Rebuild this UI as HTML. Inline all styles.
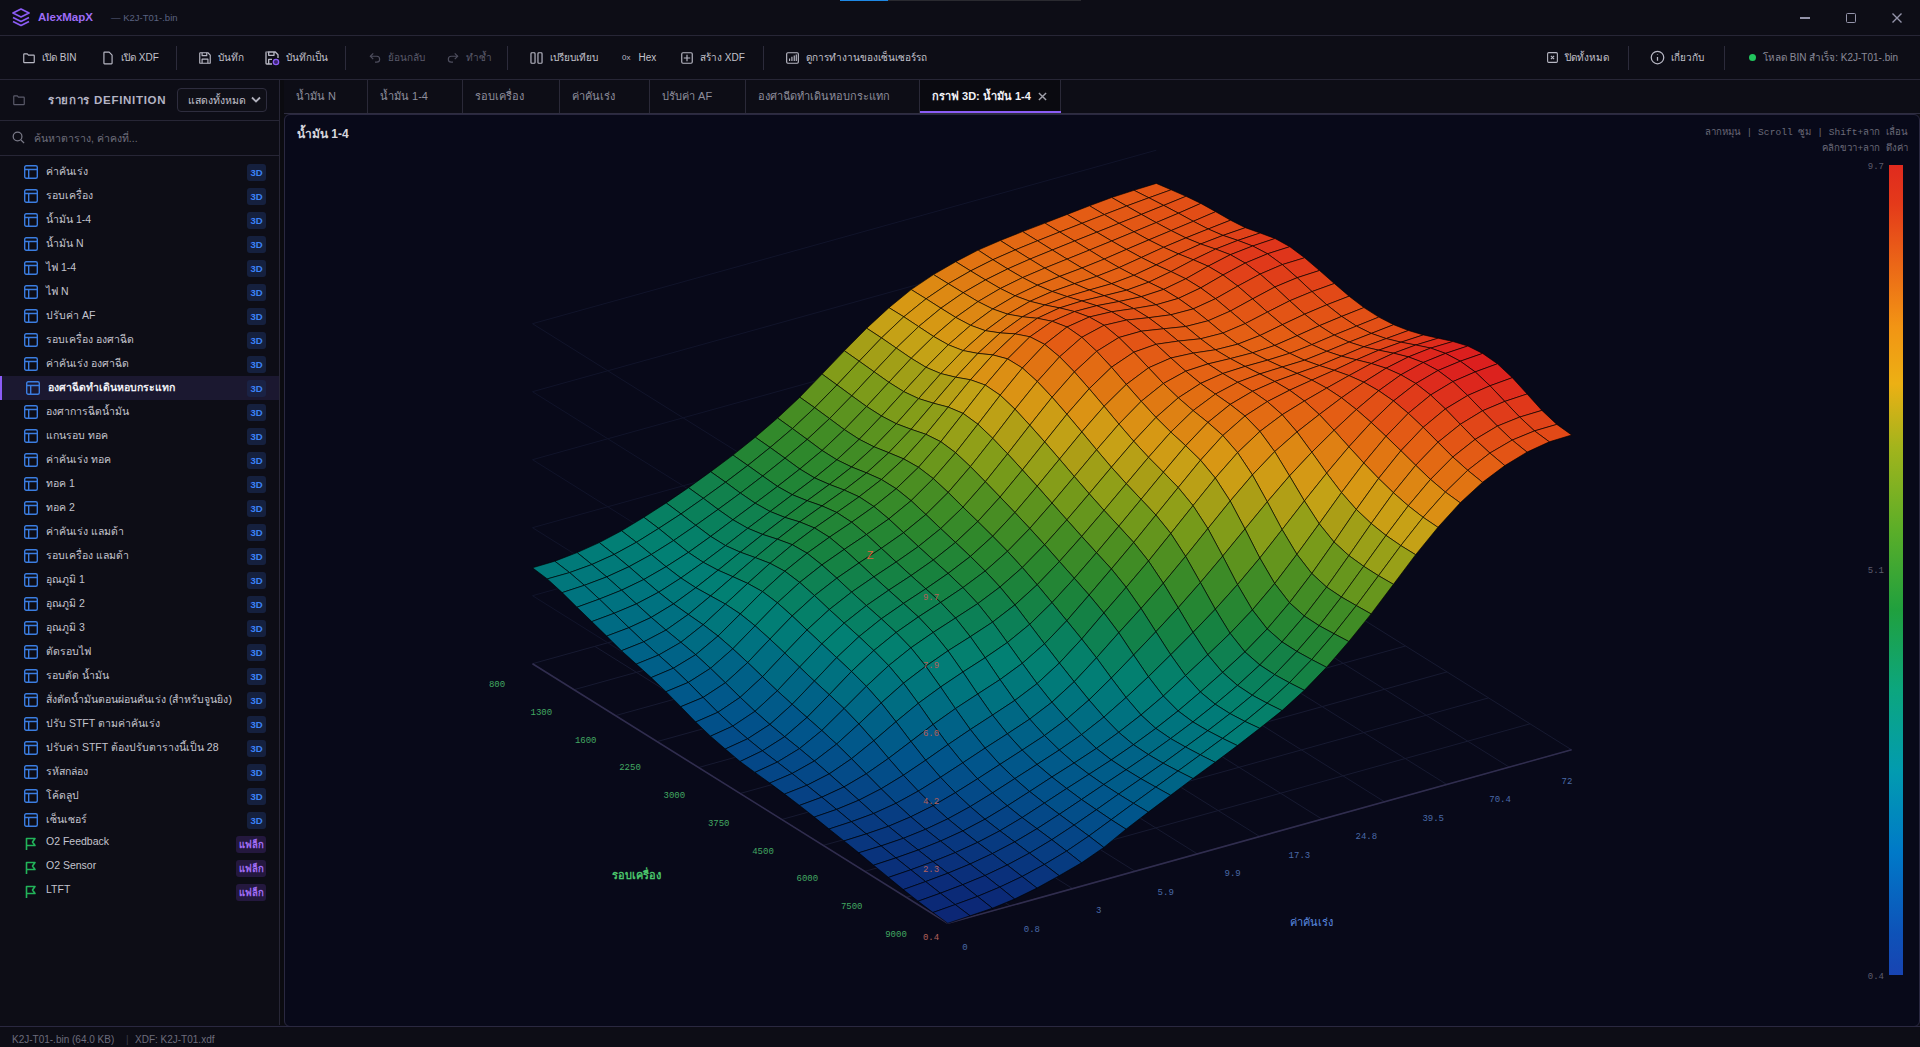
<!DOCTYPE html>
<html><head><meta charset="utf-8">
<style>
*{box-sizing:border-box;margin:0;padding:0}
html,body{width:1920px;height:1047px;overflow:hidden;background:#0d0d16;font-family:"Liberation Sans",sans-serif;color:#c9c9d4}
.abs{position:absolute}
#title{left:0;top:0;width:1920px;height:36px;background:#0d0d16;border-bottom:1px solid #272636}
#toolbar{left:0;top:36px;width:1920px;height:44px;background:#0d0d16;border-bottom:1px solid #272636}
.tb{position:absolute;top:0;height:43px;display:flex;align-items:center;font-size:10px;color:#c2c2cc;white-space:nowrap}
.tb svg{margin-right:6px}
.sep{position:absolute;top:10px;width:1px;height:24px;background:#2c2b3b}
.dim{color:#5a5a6a}
#side{left:0;top:80px;width:280px;height:945px;background:#0d0d16;border-right:1px solid #272636}
#gap{left:280px;top:80px;width:4px;height:945px;background:#0b0b10}
.item{position:absolute;left:0;width:279px;height:24px;font-size:10.5px;color:#c4c4ce;white-space:nowrap}
.item .ic{position:absolute;left:24px;top:5px}
.item .tx{position:absolute;left:46px;top:3px}
.badge{position:absolute;right:13px;top:4px;height:17px;border-radius:3px;font-size:9.5px;font-weight:bold;line-height:17px;text-align:center}
.b3{width:19px;background:#15203e;color:#3b82f6}
.bf{width:30px;background:#24183e;color:#a06cf5}
#tabs{left:284px;top:80px;width:1636px;height:34px;background:#0d0d16;border-bottom:1px solid #2e2d40}
.tab{position:absolute;top:0;height:33px;border-right:1px solid #2a2938;font-size:11px;color:#8e8e9c;line-height:33px;padding-left:12px;white-space:nowrap}
#chart{left:284px;top:114px;width:1636px;height:913px;background:#080919;border:1px solid #2a2840;border-radius:6px}
#status{left:0;top:1026px;width:1920px;height:21px;background:#0d0d16;border-top:1px solid #2a2840;font-size:10px;color:#6c6c7c}
.mono{font-family:"Liberation Mono",monospace}
</style></head><body>
<div id="title" class="abs">
  <svg class="abs" style="left:12px;top:8px" width="18" height="19" viewBox="0 0 18 19" fill="none" stroke="#8b5cf6" stroke-width="1.7" stroke-linejoin="round"><path d="M9 1 L17 5 L9 9 L1 5 Z"/><path d="M1 9.5 L9 13.5 L17 9.5"/><path d="M1 13.5 L9 17.5 L17 13.5"/></svg>
  <div class="abs" style="left:38px;top:11px;font-size:11.5px;font-weight:bold;color:#9d6cf7">AlexMapX</div>
  <div class="abs" style="left:111px;top:12px;font-size:9.5px;color:#5a6280">— K2J-T01-.bin</div>
  <div class="abs" style="left:840px;top:0;width:48px;height:1px;background:#1e88e5"></div>
  <div class="abs" style="left:888px;top:0;width:193px;height:1px;background:#2a2a30"></div>
  <div class="abs" style="left:1800px;top:17px;width:10px;height:1.5px;background:#9494aa"></div>
  <div class="abs" style="left:1846px;top:13px;width:10px;height:10px;border:1.4px solid #9494aa;border-radius:1.5px"></div>
  <svg class="abs" style="left:1891px;top:12px" width="12" height="12" viewBox="0 0 12 12" stroke="#9494aa" stroke-width="1.4"><path d="M1.5 1.5L10.5 10.5M10.5 1.5L1.5 10.5"/></svg>
</div>
<div id="toolbar" class="abs">
  <div class="tb" style="left:22px"><svg width="14" height="14" viewBox="0 0 24 24" fill="none" stroke="#b8b8c4" stroke-width="2" stroke-linejoin="round"><path d="M3 6a1 1 0 0 1 1-1h5l2 2h9a1 1 0 0 1 1 1v11a1 1 0 0 1-1 1H4a1 1 0 0 1-1-1z"/></svg>เปิด BIN</div>
  <div class="tb" style="left:101px"><svg width="14" height="14" viewBox="0 0 24 24" fill="none" stroke="#b8b8c4" stroke-width="2" stroke-linejoin="round"><path d="M6 2h8l5 5v14a1 1 0 0 1-1 1H6a1 1 0 0 1-1-1V3a1 1 0 0 1 1-1z"/></svg>เปิด XDF</div>
  <div class="sep" style="left:176px"></div>
  <div class="tb" style="left:198px"><svg width="14" height="14" viewBox="0 0 24 24" fill="none" stroke="#b8b8c4" stroke-width="2" stroke-linejoin="round"><path d="M5 3h12l4 4v13a1 1 0 0 1-1 1H4a1 1 0 0 1-1-1V4a1 1 0 0 1 1-1z"/><path d="M7 3v5h8V3M7 21v-7h10v7"/></svg>บันทึก</div>
  <div class="tb" style="left:264px"><svg width="16" height="16" viewBox="0 0 24 24" fill="none" stroke="#b8b8c4" stroke-width="2" stroke-linejoin="round"><path d="M5 3h12l4 4v5M12 21H4a1 1 0 0 1-1-1V4a1 1 0 0 1 1-1"/><path d="M7 3v5h8V3M7 21v-7h5"/><circle cx="18" cy="18" r="4" stroke="#8b5cf6" fill="#3b2470"/></svg>บันทึกเป็น</div>
  <div class="sep" style="left:345px"></div>
  <div class="tb dim" style="left:368px"><svg width="14" height="14" viewBox="0 0 24 24" fill="none" stroke="#4e4e5e" stroke-width="2"><path d="M9 14L4 9l5-5"/><path d="M4 9h11a5 5 0 0 1 0 10h-3"/></svg>ย้อนกลับ</div>
  <div class="tb dim" style="left:446px"><svg width="14" height="14" viewBox="0 0 24 24" fill="none" stroke="#4e4e5e" stroke-width="2"><path d="M15 14l5-5-5-5"/><path d="M20 9H9a5 5 0 0 0 0 10h3"/></svg>ทำซ้ำ</div>
  <div class="sep" style="left:507px"></div>
  <div class="tb" style="left:529px"><svg width="15" height="14" viewBox="0 0 24 24" fill="none" stroke="#b8b8c4" stroke-width="2"><rect x="2.5" y="3" width="7" height="18" rx="1.5"/><rect x="14.5" y="3" width="7" height="18" rx="1.5"/></svg>เปรียบเทียบ</div>
  <div class="tb" style="left:622px"><span style="font-size:8px;margin-right:8px;color:#b8b8c4">0x</span>Hex</div>
  <div class="tb" style="left:680px"><svg width="14" height="14" viewBox="0 0 24 24" fill="none" stroke="#b8b8c4" stroke-width="2"><rect x="3" y="3" width="18" height="18" rx="2"/><path d="M12 6.5v11M6.5 12h11"/></svg>สร้าง XDF</div>
  <div class="sep" style="left:763px"></div>
  <div class="tb" style="left:785px"><svg width="15" height="14" viewBox="0 0 24 24" fill="none" stroke="#b8b8c4" stroke-width="2"><rect x="2" y="3" width="20" height="18" rx="2"/><path d="M7 17v-4M11 17v-7M15 17V7.5M18.5 17V6"/></svg>ดูการทำงานของเซ็นเซอร์รถ</div>
  <div class="tb" style="left:1546px"><svg width="13" height="13" viewBox="0 0 24 24" fill="none" stroke="#b8b8c4" stroke-width="2"><rect x="3" y="3" width="18" height="18" rx="2"/><path d="M9 9l6 6M15 9l-6 6"/></svg>ปิดทั้งหมด</div>
  <div class="sep" style="left:1628px"></div>
  <div class="tb" style="left:1650px"><svg width="15" height="15" viewBox="0 0 24 24" fill="none" stroke="#b8b8c4" stroke-width="2"><circle cx="12" cy="12" r="10"/><path d="M12 11v6M12 7v1"/></svg>เกี่ยวกับ</div>
  <div class="sep" style="left:1724px"></div>
  <div class="abs" style="left:1749px;top:18px;width:7px;height:7px;border-radius:50%;background:#22c55e"></div>
  <div class="tb" style="left:1763px;color:#8a8a98;font-size:10px">โหลด BIN สำเร็จ: K2J-T01-.bin</div>
</div>
<div id="side" class="abs">
  <svg class="abs" style="left:12px;top:13px" width="14" height="14" viewBox="0 0 24 24" fill="none" stroke="#5a5a6a" stroke-width="2"><path d="M3 6a1 1 0 0 1 1-1h5l2 2h9a1 1 0 0 1 1 1v11a1 1 0 0 1-1 1H4a1 1 0 0 1-1-1z"/></svg>
  <div class="abs" style="left:48px;top:11px;font-size:11.5px;font-weight:bold;color:#b4b4c4;letter-spacing:0.7px">รายการ DEFINITION</div>
  <div class="abs" style="left:177px;top:8px;width:90px;height:24px;border:1px solid #2e2d3e;border-radius:4px;background:#0f0f17;font-size:10.5px;color:#c0c0cc;padding:3px 0 0 10px">แสดงทั้งหมด
    <svg class="abs" style="left:73px;top:7px" width="10" height="8" viewBox="0 0 10 8" fill="none" stroke="#b0b0bc" stroke-width="1.8"><path d="M1 1.5l4 4 4-4"/></svg></div>
  <div class="abs" style="left:0;top:40px;width:279px;height:1px;background:#272636"></div>
  <svg class="abs" style="left:11px;top:50px" width="15" height="15" viewBox="0 0 24 24" fill="none" stroke="#7a7a88" stroke-width="2"><circle cx="10.5" cy="10.5" r="7"/><path d="M16 16l5 5"/></svg>
  <div class="abs" style="left:34px;top:50px;font-size:10.5px;color:#6e6e7c">ค้นหาตาราง, ค่าคงที่...</div>
  <div class="abs" style="left:0;top:75px;width:279px;height:1px;background:#272636"></div>
  <div class="item" style="top:80px"><svg class="ic" width="14" height="14" viewBox="0 0 14 14" fill="none" stroke="#3b7de0" stroke-width="1.4"><rect x="0.7" y="0.7" width="12.6" height="12.6" rx="1.5"/><path d="M0.7 4.5h12.6M4.7 4.5v8.8"/></svg><div class="tx">ค่าคันเร่ง</div><div class="badge b3">3D</div></div>
<div class="item" style="top:104px"><svg class="ic" width="14" height="14" viewBox="0 0 14 14" fill="none" stroke="#3b7de0" stroke-width="1.4"><rect x="0.7" y="0.7" width="12.6" height="12.6" rx="1.5"/><path d="M0.7 4.5h12.6M4.7 4.5v8.8"/></svg><div class="tx">รอบเครื่อง</div><div class="badge b3">3D</div></div>
<div class="item" style="top:128px"><svg class="ic" width="14" height="14" viewBox="0 0 14 14" fill="none" stroke="#3b7de0" stroke-width="1.4"><rect x="0.7" y="0.7" width="12.6" height="12.6" rx="1.5"/><path d="M0.7 4.5h12.6M4.7 4.5v8.8"/></svg><div class="tx">น้ำมัน 1-4</div><div class="badge b3">3D</div></div>
<div class="item" style="top:152px"><svg class="ic" width="14" height="14" viewBox="0 0 14 14" fill="none" stroke="#3b7de0" stroke-width="1.4"><rect x="0.7" y="0.7" width="12.6" height="12.6" rx="1.5"/><path d="M0.7 4.5h12.6M4.7 4.5v8.8"/></svg><div class="tx">น้ำมัน N</div><div class="badge b3">3D</div></div>
<div class="item" style="top:176px"><svg class="ic" width="14" height="14" viewBox="0 0 14 14" fill="none" stroke="#3b7de0" stroke-width="1.4"><rect x="0.7" y="0.7" width="12.6" height="12.6" rx="1.5"/><path d="M0.7 4.5h12.6M4.7 4.5v8.8"/></svg><div class="tx">ไฟ 1-4</div><div class="badge b3">3D</div></div>
<div class="item" style="top:200px"><svg class="ic" width="14" height="14" viewBox="0 0 14 14" fill="none" stroke="#3b7de0" stroke-width="1.4"><rect x="0.7" y="0.7" width="12.6" height="12.6" rx="1.5"/><path d="M0.7 4.5h12.6M4.7 4.5v8.8"/></svg><div class="tx">ไฟ N</div><div class="badge b3">3D</div></div>
<div class="item" style="top:224px"><svg class="ic" width="14" height="14" viewBox="0 0 14 14" fill="none" stroke="#3b7de0" stroke-width="1.4"><rect x="0.7" y="0.7" width="12.6" height="12.6" rx="1.5"/><path d="M0.7 4.5h12.6M4.7 4.5v8.8"/></svg><div class="tx">ปรับค่า AF</div><div class="badge b3">3D</div></div>
<div class="item" style="top:248px"><svg class="ic" width="14" height="14" viewBox="0 0 14 14" fill="none" stroke="#3b7de0" stroke-width="1.4"><rect x="0.7" y="0.7" width="12.6" height="12.6" rx="1.5"/><path d="M0.7 4.5h12.6M4.7 4.5v8.8"/></svg><div class="tx">รอบเครื่อง องศาฉีด</div><div class="badge b3">3D</div></div>
<div class="item" style="top:272px"><svg class="ic" width="14" height="14" viewBox="0 0 14 14" fill="none" stroke="#3b7de0" stroke-width="1.4"><rect x="0.7" y="0.7" width="12.6" height="12.6" rx="1.5"/><path d="M0.7 4.5h12.6M4.7 4.5v8.8"/></svg><div class="tx">ค่าคันเร่ง องศาฉีด</div><div class="badge b3">3D</div></div>
<div class="item" style="top:296px;background:#1b1830"><div class="abs" style="left:0;top:0;width:2px;height:24px;background:#8b5cf6"></div><div style="position:absolute;left:2px;top:0"><svg class="ic" width="14" height="14" viewBox="0 0 14 14" fill="none" stroke="#3b7de0" stroke-width="1.4"><rect x="0.7" y="0.7" width="12.6" height="12.6" rx="1.5"/><path d="M0.7 4.5h12.6M4.7 4.5v8.8"/></svg></div><div class="tx" style="left:48px;color:#f0f0f6;font-weight:bold">องศาฉีดทำเดินหอบกระแทก</div><div class="badge b3" style="background:#1a2244">3D</div></div>
<div class="item" style="top:320px"><svg class="ic" width="14" height="14" viewBox="0 0 14 14" fill="none" stroke="#3b7de0" stroke-width="1.4"><rect x="0.7" y="0.7" width="12.6" height="12.6" rx="1.5"/><path d="M0.7 4.5h12.6M4.7 4.5v8.8"/></svg><div class="tx">องศาการฉีดน้ำมัน</div><div class="badge b3">3D</div></div>
<div class="item" style="top:344px"><svg class="ic" width="14" height="14" viewBox="0 0 14 14" fill="none" stroke="#3b7de0" stroke-width="1.4"><rect x="0.7" y="0.7" width="12.6" height="12.6" rx="1.5"/><path d="M0.7 4.5h12.6M4.7 4.5v8.8"/></svg><div class="tx">แกนรอบ ทอค</div><div class="badge b3">3D</div></div>
<div class="item" style="top:368px"><svg class="ic" width="14" height="14" viewBox="0 0 14 14" fill="none" stroke="#3b7de0" stroke-width="1.4"><rect x="0.7" y="0.7" width="12.6" height="12.6" rx="1.5"/><path d="M0.7 4.5h12.6M4.7 4.5v8.8"/></svg><div class="tx">ค่าคันเร่ง ทอค</div><div class="badge b3">3D</div></div>
<div class="item" style="top:392px"><svg class="ic" width="14" height="14" viewBox="0 0 14 14" fill="none" stroke="#3b7de0" stroke-width="1.4"><rect x="0.7" y="0.7" width="12.6" height="12.6" rx="1.5"/><path d="M0.7 4.5h12.6M4.7 4.5v8.8"/></svg><div class="tx">ทอค 1</div><div class="badge b3">3D</div></div>
<div class="item" style="top:416px"><svg class="ic" width="14" height="14" viewBox="0 0 14 14" fill="none" stroke="#3b7de0" stroke-width="1.4"><rect x="0.7" y="0.7" width="12.6" height="12.6" rx="1.5"/><path d="M0.7 4.5h12.6M4.7 4.5v8.8"/></svg><div class="tx">ทอค 2</div><div class="badge b3">3D</div></div>
<div class="item" style="top:440px"><svg class="ic" width="14" height="14" viewBox="0 0 14 14" fill="none" stroke="#3b7de0" stroke-width="1.4"><rect x="0.7" y="0.7" width="12.6" height="12.6" rx="1.5"/><path d="M0.7 4.5h12.6M4.7 4.5v8.8"/></svg><div class="tx">ค่าคันเร่ง แลมด้า</div><div class="badge b3">3D</div></div>
<div class="item" style="top:464px"><svg class="ic" width="14" height="14" viewBox="0 0 14 14" fill="none" stroke="#3b7de0" stroke-width="1.4"><rect x="0.7" y="0.7" width="12.6" height="12.6" rx="1.5"/><path d="M0.7 4.5h12.6M4.7 4.5v8.8"/></svg><div class="tx">รอบเครื่อง แลมด้า</div><div class="badge b3">3D</div></div>
<div class="item" style="top:488px"><svg class="ic" width="14" height="14" viewBox="0 0 14 14" fill="none" stroke="#3b7de0" stroke-width="1.4"><rect x="0.7" y="0.7" width="12.6" height="12.6" rx="1.5"/><path d="M0.7 4.5h12.6M4.7 4.5v8.8"/></svg><div class="tx">อุณภูมิ 1</div><div class="badge b3">3D</div></div>
<div class="item" style="top:512px"><svg class="ic" width="14" height="14" viewBox="0 0 14 14" fill="none" stroke="#3b7de0" stroke-width="1.4"><rect x="0.7" y="0.7" width="12.6" height="12.6" rx="1.5"/><path d="M0.7 4.5h12.6M4.7 4.5v8.8"/></svg><div class="tx">อุณภูมิ 2</div><div class="badge b3">3D</div></div>
<div class="item" style="top:536px"><svg class="ic" width="14" height="14" viewBox="0 0 14 14" fill="none" stroke="#3b7de0" stroke-width="1.4"><rect x="0.7" y="0.7" width="12.6" height="12.6" rx="1.5"/><path d="M0.7 4.5h12.6M4.7 4.5v8.8"/></svg><div class="tx">อุณภูมิ 3</div><div class="badge b3">3D</div></div>
<div class="item" style="top:560px"><svg class="ic" width="14" height="14" viewBox="0 0 14 14" fill="none" stroke="#3b7de0" stroke-width="1.4"><rect x="0.7" y="0.7" width="12.6" height="12.6" rx="1.5"/><path d="M0.7 4.5h12.6M4.7 4.5v8.8"/></svg><div class="tx">ตัดรอบไฟ</div><div class="badge b3">3D</div></div>
<div class="item" style="top:584px"><svg class="ic" width="14" height="14" viewBox="0 0 14 14" fill="none" stroke="#3b7de0" stroke-width="1.4"><rect x="0.7" y="0.7" width="12.6" height="12.6" rx="1.5"/><path d="M0.7 4.5h12.6M4.7 4.5v8.8"/></svg><div class="tx">รอบตัด น้ำมัน</div><div class="badge b3">3D</div></div>
<div class="item" style="top:608px"><svg class="ic" width="14" height="14" viewBox="0 0 14 14" fill="none" stroke="#3b7de0" stroke-width="1.4"><rect x="0.7" y="0.7" width="12.6" height="12.6" rx="1.5"/><path d="M0.7 4.5h12.6M4.7 4.5v8.8"/></svg><div class="tx">สั่งตัดน้ำมันตอนผ่อนคันเร่ง (สำหรับจูนยิง)</div><div class="badge b3">3D</div></div>
<div class="item" style="top:632px"><svg class="ic" width="14" height="14" viewBox="0 0 14 14" fill="none" stroke="#3b7de0" stroke-width="1.4"><rect x="0.7" y="0.7" width="12.6" height="12.6" rx="1.5"/><path d="M0.7 4.5h12.6M4.7 4.5v8.8"/></svg><div class="tx">ปรับ STFT ตามค่าคันเร่ง</div><div class="badge b3">3D</div></div>
<div class="item" style="top:656px"><svg class="ic" width="14" height="14" viewBox="0 0 14 14" fill="none" stroke="#3b7de0" stroke-width="1.4"><rect x="0.7" y="0.7" width="12.6" height="12.6" rx="1.5"/><path d="M0.7 4.5h12.6M4.7 4.5v8.8"/></svg><div class="tx">ปรับค่า STFT ต้องปรับตารางนี้เป็น 28</div><div class="badge b3">3D</div></div>
<div class="item" style="top:680px"><svg class="ic" width="14" height="14" viewBox="0 0 14 14" fill="none" stroke="#3b7de0" stroke-width="1.4"><rect x="0.7" y="0.7" width="12.6" height="12.6" rx="1.5"/><path d="M0.7 4.5h12.6M4.7 4.5v8.8"/></svg><div class="tx">รหัสกล่อง</div><div class="badge b3">3D</div></div>
<div class="item" style="top:704px"><svg class="ic" width="14" height="14" viewBox="0 0 14 14" fill="none" stroke="#3b7de0" stroke-width="1.4"><rect x="0.7" y="0.7" width="12.6" height="12.6" rx="1.5"/><path d="M0.7 4.5h12.6M4.7 4.5v8.8"/></svg><div class="tx">โค้ดลูป</div><div class="badge b3">3D</div></div>
<div class="item" style="top:728px"><svg class="ic" width="14" height="14" viewBox="0 0 14 14" fill="none" stroke="#3b7de0" stroke-width="1.4"><rect x="0.7" y="0.7" width="12.6" height="12.6" rx="1.5"/><path d="M0.7 4.5h12.6M4.7 4.5v8.8"/></svg><div class="tx">เซ็นเซอร์</div><div class="badge b3">3D</div></div>
<div class="item" style="top:752px"><svg class="ic" width="14" height="14" viewBox="0 0 14 14" fill="none" stroke="#22b45a" stroke-width="1.6" stroke-linejoin="round"><path d="M2.5 13V1.5h8.5l-2.5 3.5 2.5 3.5H2.5"/></svg><div class="tx">O2 Feedback</div><div class="badge bf">แฟล็ก</div></div>
<div class="item" style="top:776px"><svg class="ic" width="14" height="14" viewBox="0 0 14 14" fill="none" stroke="#22b45a" stroke-width="1.6" stroke-linejoin="round"><path d="M2.5 13V1.5h8.5l-2.5 3.5 2.5 3.5H2.5"/></svg><div class="tx">O2 Sensor</div><div class="badge bf">แฟล็ก</div></div>
<div class="item" style="top:800px"><svg class="ic" width="14" height="14" viewBox="0 0 14 14" fill="none" stroke="#22b45a" stroke-width="1.6" stroke-linejoin="round"><path d="M2.5 13V1.5h8.5l-2.5 3.5 2.5 3.5H2.5"/></svg><div class="tx">LTFT</div><div class="badge bf">แฟล็ก</div></div>
</div>
<div id="gap" class="abs"></div>
<div id="tabs" class="abs">
  <div class="tab" style="left:0;width:84px">น้ำมัน N</div>
  <div class="tab" style="left:84px;width:95px">น้ำมัน 1-4</div>
  <div class="tab" style="left:179px;width:97px">รอบเครื่อง</div>
  <div class="tab" style="left:276px;width:90px">ค่าคันเร่ง</div>
  <div class="tab" style="left:366px;width:96px">ปรับค่า AF</div>
  <div class="tab" style="left:462px;width:174px">องศาฉีดทำเดินหอบกระแทก</div>
  <div class="tab" style="left:636px;width:141px;background:#0a0a10;color:#f2f2f6;font-weight:bold;padding-left:12px">กราฟ 3D: น้ำมัน 1-4
    <svg class="abs" style="left:118px;top:12px" width="9" height="9" viewBox="0 0 10 10" stroke="#a0a0aa" stroke-width="1.6"><path d="M1 1l8 8M9 1L1 9"/></svg>
    <div class="abs" style="left:0;bottom:0;width:141px;height:2px;background:#8b5cf6"></div></div>
</div>
<div id="chart" class="abs">
  <div class="abs" style="left:12px;top:9px;font-size:12px;font-weight:bold;color:#d6d6de">น้ำมัน 1-4</div>
  <div class="abs mono" style="right:11px;top:10px;font-size:9.6px;color:#6a6a78;text-align:right;line-height:16px">ลากหมุน | Scroll ซูม | Shift+ลาก เลื่อน<br>คลิกขวา+ลาก ดึงค่า</div>
</div>
<svg class="abs" style="left:0;top:0" width="1920" height="1047">
<defs><linearGradient id="cb" x1="0" y1="0" x2="0" y2="1">
<stop offset="0" stop-color="#e02a1e"/><stop offset="0.048" stop-color="#e43a1a"/><stop offset="0.199" stop-color="#f29414"/><stop offset="0.27" stop-color="#ecb014"/><stop offset="0.349" stop-color="#a2b41c"/><stop offset="0.449" stop-color="#5cae28"/><stop offset="0.549" stop-color="#20a03e"/><stop offset="0.648" stop-color="#0ca67e"/><stop offset="0.749" stop-color="#029bb0"/><stop offset="0.849" stop-color="#0079c8"/><stop offset="0.949" stop-color="#0e52b8"/><stop offset="1" stop-color="#1844b2"/></linearGradient></defs>
<line x1="532.5" y1="663.7" x2="1156.3" y2="490.2" stroke="#171a31" stroke-width="1" opacity="1"/>
<line x1="532.5" y1="663.7" x2="947.8" y2="923.3" stroke="#171a31" stroke-width="1" opacity="1"/>
<line x1="574.0" y1="689.7" x2="1197.8" y2="516.2" stroke="#171a31" stroke-width="1" opacity="1"/>
<line x1="594.9" y1="646.4" x2="1010.2" y2="905.9" stroke="#171a31" stroke-width="1" opacity="1"/>
<line x1="615.6" y1="715.6" x2="1239.4" y2="542.1" stroke="#171a31" stroke-width="1" opacity="1"/>
<line x1="657.3" y1="629.0" x2="1072.6" y2="888.6" stroke="#171a31" stroke-width="1" opacity="1"/>
<line x1="657.1" y1="741.6" x2="1280.9" y2="568.1" stroke="#171a31" stroke-width="1" opacity="1"/>
<line x1="719.6" y1="611.7" x2="1134.9" y2="871.2" stroke="#171a31" stroke-width="1" opacity="1"/>
<line x1="698.6" y1="767.5" x2="1322.4" y2="594.0" stroke="#171a31" stroke-width="1" opacity="1"/>
<line x1="782.0" y1="594.3" x2="1197.3" y2="853.9" stroke="#171a31" stroke-width="1" opacity="1"/>
<line x1="740.1" y1="793.5" x2="1363.9" y2="620.0" stroke="#171a31" stroke-width="1" opacity="1"/>
<line x1="844.4" y1="577.0" x2="1259.7" y2="836.5" stroke="#171a31" stroke-width="1" opacity="1"/>
<line x1="781.7" y1="819.5" x2="1405.5" y2="646.0" stroke="#171a31" stroke-width="1" opacity="1"/>
<line x1="906.8" y1="559.6" x2="1322.1" y2="819.2" stroke="#171a31" stroke-width="1" opacity="1"/>
<line x1="823.2" y1="845.4" x2="1447.0" y2="671.9" stroke="#171a31" stroke-width="1" opacity="1"/>
<line x1="969.2" y1="542.2" x2="1384.5" y2="801.8" stroke="#171a31" stroke-width="1" opacity="1"/>
<line x1="864.7" y1="871.4" x2="1488.5" y2="697.9" stroke="#171a31" stroke-width="1" opacity="1"/>
<line x1="1031.5" y1="524.9" x2="1446.8" y2="784.5" stroke="#171a31" stroke-width="1" opacity="1"/>
<line x1="906.3" y1="897.3" x2="1530.1" y2="723.8" stroke="#171a31" stroke-width="1" opacity="1"/>
<line x1="1093.9" y1="507.6" x2="1509.2" y2="767.1" stroke="#171a31" stroke-width="1" opacity="1"/>
<line x1="947.8" y1="923.3" x2="1571.6" y2="749.8" stroke="#171a31" stroke-width="1" opacity="1"/>
<line x1="1156.3" y1="490.2" x2="1571.6" y2="749.8" stroke="#171a31" stroke-width="1" opacity="1"/>
<line x1="532.5" y1="595.7" x2="947.8" y2="855.3" stroke="#11142a" stroke-width="1" opacity="1"/>
<line x1="532.5" y1="595.7" x2="1156.3" y2="422.2" stroke="#11142a" stroke-width="1" opacity="1"/>
<line x1="532.5" y1="527.7" x2="947.8" y2="787.3" stroke="#11142a" stroke-width="1" opacity="1"/>
<line x1="532.5" y1="527.7" x2="1156.3" y2="354.2" stroke="#11142a" stroke-width="1" opacity="1"/>
<line x1="532.5" y1="459.7" x2="947.8" y2="719.3" stroke="#11142a" stroke-width="1" opacity="1"/>
<line x1="532.5" y1="459.7" x2="1156.3" y2="286.2" stroke="#11142a" stroke-width="1" opacity="1"/>
<line x1="532.5" y1="391.7" x2="947.8" y2="651.3" stroke="#11142a" stroke-width="1" opacity="1"/>
<line x1="532.5" y1="391.7" x2="1156.3" y2="218.2" stroke="#11142a" stroke-width="1" opacity="1"/>
<line x1="532.5" y1="323.7" x2="947.8" y2="583.3" stroke="#11142a" stroke-width="1" opacity="1"/>
<line x1="532.5" y1="323.7" x2="1156.3" y2="150.2" stroke="#11142a" stroke-width="1" opacity="1"/>
<line x1="532.5" y1="663.7" x2="947.8" y2="923.3" stroke="#302d4e" stroke-width="1.6" opacity="1"/>
<line x1="947.8" y1="923.3" x2="1571.6" y2="749.8" stroke="#302d4e" stroke-width="1.6" opacity="1"/>
<polygon points="1134.0,190.3 1148.9,197.8 1171.1,189.8 1156.3,183.4" fill="#e35515" stroke="#000" stroke-opacity="0.6" stroke-width="1.0" stroke-linejoin="round"/>
<polygon points="1111.7,197.5 1126.6,206.0 1148.9,197.8 1134.0,190.3" fill="#e35715" stroke="#000" stroke-opacity="0.6" stroke-width="1.0" stroke-linejoin="round"/>
<polygon points="1148.9,197.8 1163.7,205.4 1186.0,196.3 1171.1,189.8" fill="#e25216" stroke="#000" stroke-opacity="0.6" stroke-width="1.0" stroke-linejoin="round"/>
<polygon points="1089.5,205.8 1104.3,214.6 1126.6,206.0 1111.7,197.5" fill="#e35915" stroke="#000" stroke-opacity="0.6" stroke-width="1.0" stroke-linejoin="round"/>
<polygon points="1126.6,206.0 1141.4,214.4 1163.7,205.4 1148.9,197.8" fill="#e35515" stroke="#000" stroke-opacity="0.6" stroke-width="1.0" stroke-linejoin="round"/>
<polygon points="1067.2,214.4 1082.0,223.3 1104.3,214.6 1089.5,205.8" fill="#e45c14" stroke="#000" stroke-opacity="0.6" stroke-width="1.0" stroke-linejoin="round"/>
<polygon points="1163.7,205.4 1178.5,213.2 1200.8,203.4 1186.0,196.3" fill="#e24f16" stroke="#000" stroke-opacity="0.6" stroke-width="1.0" stroke-linejoin="round"/>
<polygon points="1104.3,214.6 1119.1,223.3 1141.4,214.4 1126.6,206.0" fill="#e35815" stroke="#000" stroke-opacity="0.6" stroke-width="1.0" stroke-linejoin="round"/>
<polygon points="1044.9,223.1 1059.7,232.0 1082.0,223.3 1067.2,214.4" fill="#e46014" stroke="#000" stroke-opacity="0.6" stroke-width="1.0" stroke-linejoin="round"/>
<polygon points="1141.4,214.4 1156.2,222.6 1178.5,213.2 1163.7,205.4" fill="#e35315" stroke="#000" stroke-opacity="0.6" stroke-width="1.0" stroke-linejoin="round"/>
<polygon points="1082.0,223.3 1096.8,232.2 1119.1,223.3 1104.3,214.6" fill="#e45c14" stroke="#000" stroke-opacity="0.6" stroke-width="1.0" stroke-linejoin="round"/>
<polygon points="1022.6,231.6 1037.5,240.8 1059.7,232.0 1044.9,223.1" fill="#e46314" stroke="#000" stroke-opacity="0.6" stroke-width="1.0" stroke-linejoin="round"/>
<polygon points="1178.5,213.2 1193.3,221.3 1215.6,211.7 1200.8,203.4" fill="#e24d16" stroke="#000" stroke-opacity="0.6" stroke-width="1.0" stroke-linejoin="round"/>
<polygon points="1119.1,223.3 1134.0,231.8 1156.2,222.6 1141.4,214.4" fill="#e35715" stroke="#000" stroke-opacity="0.6" stroke-width="1.0" stroke-linejoin="round"/>
<polygon points="1059.7,232.0 1074.6,241.0 1096.8,232.2 1082.0,223.3" fill="#e45f14" stroke="#000" stroke-opacity="0.6" stroke-width="1.0" stroke-linejoin="round"/>
<polygon points="1000.3,240.5 1015.2,249.9 1037.5,240.8 1022.6,231.6" fill="#e36813" stroke="#000" stroke-opacity="0.6" stroke-width="1.0" stroke-linejoin="round"/>
<polygon points="1156.2,222.6 1171.1,230.6 1193.3,221.3 1178.5,213.2" fill="#e25216" stroke="#000" stroke-opacity="0.6" stroke-width="1.0" stroke-linejoin="round"/>
<polygon points="1096.8,232.2 1111.7,241.0 1134.0,231.8 1119.1,223.3" fill="#e35b15" stroke="#000" stroke-opacity="0.6" stroke-width="1.0" stroke-linejoin="round"/>
<polygon points="1037.5,240.8 1052.3,250.0 1074.6,241.0 1059.7,232.0" fill="#e46314" stroke="#000" stroke-opacity="0.6" stroke-width="1.0" stroke-linejoin="round"/>
<polygon points="1193.3,221.3 1208.2,229.0 1230.5,220.2 1215.6,211.7" fill="#e24b17" stroke="#000" stroke-opacity="0.6" stroke-width="1.0" stroke-linejoin="round"/>
<polygon points="978.1,250.1 992.9,259.7 1015.2,249.9 1000.3,240.5" fill="#e26c12" stroke="#000" stroke-opacity="0.6" stroke-width="1.0" stroke-linejoin="round"/>
<polygon points="1134.0,231.8 1148.8,239.9 1171.1,230.6 1156.2,222.6" fill="#e35615" stroke="#000" stroke-opacity="0.6" stroke-width="1.0" stroke-linejoin="round"/>
<polygon points="1074.6,241.0 1089.4,250.1 1111.7,241.0 1096.8,232.2" fill="#e45f14" stroke="#000" stroke-opacity="0.6" stroke-width="1.0" stroke-linejoin="round"/>
<polygon points="1015.2,249.9 1030.0,259.1 1052.3,250.0 1037.5,240.8" fill="#e36713" stroke="#000" stroke-opacity="0.6" stroke-width="1.0" stroke-linejoin="round"/>
<polygon points="1171.1,230.6 1185.9,237.9 1208.2,229.0 1193.3,221.3" fill="#e25016" stroke="#000" stroke-opacity="0.6" stroke-width="1.0" stroke-linejoin="round"/>
<polygon points="955.8,261.7 970.6,270.9 992.9,259.7 978.1,250.1" fill="#e17312" stroke="#000" stroke-opacity="0.6" stroke-width="1.0" stroke-linejoin="round"/>
<polygon points="1111.7,241.0 1126.5,249.4 1148.8,239.9 1134.0,231.8" fill="#e35a15" stroke="#000" stroke-opacity="0.6" stroke-width="1.0" stroke-linejoin="round"/>
<polygon points="1052.3,250.0 1067.1,259.1 1089.4,250.1 1074.6,241.0" fill="#e46314" stroke="#000" stroke-opacity="0.6" stroke-width="1.0" stroke-linejoin="round"/>
<polygon points="1208.2,229.0 1223.0,235.4 1245.3,227.7 1230.5,220.2" fill="#e14717" stroke="#000" stroke-opacity="0.6" stroke-width="1.0" stroke-linejoin="round"/>
<polygon points="992.9,259.7 1007.7,268.9 1030.0,259.1 1015.2,249.9" fill="#e26d12" stroke="#000" stroke-opacity="0.6" stroke-width="1.0" stroke-linejoin="round"/>
<polygon points="1148.8,239.9 1163.6,247.3 1185.9,237.9 1171.1,230.6" fill="#e35415" stroke="#000" stroke-opacity="0.6" stroke-width="1.0" stroke-linejoin="round"/>
<polygon points="933.5,274.6 948.3,283.7 970.6,270.9 955.8,261.7" fill="#df7d13" stroke="#000" stroke-opacity="0.6" stroke-width="1.0" stroke-linejoin="round"/>
<polygon points="1089.4,250.1 1104.2,259.1 1126.5,249.4 1111.7,241.0" fill="#e45e14" stroke="#000" stroke-opacity="0.6" stroke-width="1.0" stroke-linejoin="round"/>
<polygon points="1030.0,259.1 1044.8,268.1 1067.1,259.1 1052.3,250.0" fill="#e36713" stroke="#000" stroke-opacity="0.6" stroke-width="1.0" stroke-linejoin="round"/>
<polygon points="1185.9,237.9 1200.7,244.0 1223.0,235.4 1208.2,229.0" fill="#e24c16" stroke="#000" stroke-opacity="0.6" stroke-width="1.0" stroke-linejoin="round"/>
<polygon points="970.6,270.9 985.5,279.9 1007.7,268.9 992.9,259.7" fill="#e17312" stroke="#000" stroke-opacity="0.6" stroke-width="1.0" stroke-linejoin="round"/>
<polygon points="911.2,289.6 926.1,298.8 948.3,283.7 933.5,274.6" fill="#dd8913" stroke="#000" stroke-opacity="0.6" stroke-width="1.0" stroke-linejoin="round"/>
<polygon points="1126.5,249.4 1141.3,257.5 1163.6,247.3 1148.8,239.9" fill="#e35815" stroke="#000" stroke-opacity="0.6" stroke-width="1.0" stroke-linejoin="round"/>
<polygon points="1067.1,259.1 1082.0,268.0 1104.2,259.1 1089.4,250.1" fill="#e46214" stroke="#000" stroke-opacity="0.6" stroke-width="1.0" stroke-linejoin="round"/>
<polygon points="1223.0,235.4 1237.8,240.4 1260.1,233.0 1245.3,227.7" fill="#e14119" stroke="#000" stroke-opacity="0.6" stroke-width="1.0" stroke-linejoin="round"/>
<polygon points="1007.7,268.9 1022.6,277.6 1044.8,268.1 1030.0,259.1" fill="#e26c12" stroke="#000" stroke-opacity="0.6" stroke-width="1.0" stroke-linejoin="round"/>
<polygon points="889.0,307.7 903.8,316.8 926.1,298.8 911.2,289.6" fill="#d79814" stroke="#000" stroke-opacity="0.6" stroke-width="1.0" stroke-linejoin="round"/>
<polygon points="948.3,283.7 963.2,292.7 985.5,279.9 970.6,270.9" fill="#df7c13" stroke="#000" stroke-opacity="0.6" stroke-width="1.0" stroke-linejoin="round"/>
<polygon points="1163.6,247.3 1178.5,253.9 1200.7,244.0 1185.9,237.9" fill="#e25016" stroke="#000" stroke-opacity="0.6" stroke-width="1.0" stroke-linejoin="round"/>
<polygon points="1104.2,259.1 1119.1,267.6 1141.3,257.5 1126.5,249.4" fill="#e45d14" stroke="#000" stroke-opacity="0.6" stroke-width="1.0" stroke-linejoin="round"/>
<polygon points="866.7,328.2 881.5,337.9 903.8,316.8 889.0,307.7" fill="#c6a116" stroke="#000" stroke-opacity="0.6" stroke-width="1.0" stroke-linejoin="round"/>
<polygon points="1044.8,268.1 1059.7,276.4 1082.0,268.0 1067.1,259.1" fill="#e36713" stroke="#000" stroke-opacity="0.6" stroke-width="1.0" stroke-linejoin="round"/>
<polygon points="985.5,279.9 1000.3,288.5 1022.6,277.6 1007.7,268.9" fill="#e17312" stroke="#000" stroke-opacity="0.6" stroke-width="1.0" stroke-linejoin="round"/>
<polygon points="926.1,298.8 940.9,308.2 963.2,292.7 948.3,283.7" fill="#dd8913" stroke="#000" stroke-opacity="0.6" stroke-width="1.0" stroke-linejoin="round"/>
<polygon points="1200.7,244.0 1215.6,249.1 1237.8,240.4 1223.0,235.4" fill="#e14518" stroke="#000" stroke-opacity="0.6" stroke-width="1.0" stroke-linejoin="round"/>
<polygon points="1141.3,257.5 1156.2,264.9 1178.5,253.9 1163.6,247.3" fill="#e35615" stroke="#000" stroke-opacity="0.6" stroke-width="1.0" stroke-linejoin="round"/>
<polygon points="844.4,350.8 859.2,361.2 881.5,337.9 866.7,328.2" fill="#a59f17" stroke="#000" stroke-opacity="0.6" stroke-width="1.0" stroke-linejoin="round"/>
<polygon points="1082.0,268.0 1096.8,276.3 1119.1,267.6 1104.2,259.1" fill="#e46114" stroke="#000" stroke-opacity="0.6" stroke-width="1.0" stroke-linejoin="round"/>
<polygon points="822.1,374.1 837.0,384.9 859.2,361.2 844.4,350.8" fill="#839c19" stroke="#000" stroke-opacity="0.6" stroke-width="1.0" stroke-linejoin="round"/>
<polygon points="903.8,316.8 918.6,326.6 940.9,308.2 926.1,298.8" fill="#d79814" stroke="#000" stroke-opacity="0.6" stroke-width="1.0" stroke-linejoin="round"/>
<polygon points="1022.6,277.6 1037.4,285.2 1059.7,276.4 1044.8,268.1" fill="#e36b13" stroke="#000" stroke-opacity="0.6" stroke-width="1.0" stroke-linejoin="round"/>
<polygon points="1237.8,240.4 1252.7,246.0 1275.0,238.5 1260.1,233.0" fill="#e0391a" stroke="#000" stroke-opacity="0.6" stroke-width="1.0" stroke-linejoin="round"/>
<polygon points="963.2,292.7 978.0,301.6 1000.3,288.5 985.5,279.9" fill="#e07c13" stroke="#000" stroke-opacity="0.6" stroke-width="1.0" stroke-linejoin="round"/>
<polygon points="1178.5,253.9 1193.3,259.8 1215.6,249.1 1200.7,244.0" fill="#e24b17" stroke="#000" stroke-opacity="0.6" stroke-width="1.0" stroke-linejoin="round"/>
<polygon points="799.8,397.2 814.7,407.7 837.0,384.9 822.1,374.1" fill="#62941e" stroke="#000" stroke-opacity="0.6" stroke-width="1.0" stroke-linejoin="round"/>
<polygon points="1119.1,267.6 1133.9,275.3 1156.2,264.9 1141.3,257.5" fill="#e35b15" stroke="#000" stroke-opacity="0.6" stroke-width="1.0" stroke-linejoin="round"/>
<polygon points="881.5,337.9 896.3,348.1 918.6,326.6 903.8,316.8" fill="#c5a116" stroke="#000" stroke-opacity="0.6" stroke-width="1.0" stroke-linejoin="round"/>
<polygon points="1059.7,276.4 1074.5,283.7 1096.8,276.3 1082.0,268.0" fill="#e36513" stroke="#000" stroke-opacity="0.6" stroke-width="1.0" stroke-linejoin="round"/>
<polygon points="777.6,418.0 792.4,428.6 814.7,407.7 799.8,397.2" fill="#468d23" stroke="#000" stroke-opacity="0.6" stroke-width="1.0" stroke-linejoin="round"/>
<polygon points="940.9,308.2 955.7,317.4 978.0,301.6 963.2,292.7" fill="#dd8913" stroke="#000" stroke-opacity="0.6" stroke-width="1.0" stroke-linejoin="round"/>
<polygon points="1000.3,288.5 1015.1,295.8 1037.4,285.2 1022.6,277.6" fill="#e27112" stroke="#000" stroke-opacity="0.6" stroke-width="1.0" stroke-linejoin="round"/>
<polygon points="859.2,361.2 874.1,371.8 896.3,348.1 881.5,337.9" fill="#a39f17" stroke="#000" stroke-opacity="0.6" stroke-width="1.0" stroke-linejoin="round"/>
<polygon points="1215.6,249.1 1230.4,254.7 1252.7,246.0 1237.8,240.4" fill="#e03d19" stroke="#000" stroke-opacity="0.6" stroke-width="1.0" stroke-linejoin="round"/>
<polygon points="1156.2,264.9 1171.0,271.6 1193.3,259.8 1178.5,253.9" fill="#e25216" stroke="#000" stroke-opacity="0.6" stroke-width="1.0" stroke-linejoin="round"/>
<polygon points="1096.8,276.3 1111.6,283.7 1133.9,275.3 1119.1,267.6" fill="#e46014" stroke="#000" stroke-opacity="0.6" stroke-width="1.0" stroke-linejoin="round"/>
<polygon points="755.3,437.2 770.1,447.5 792.4,428.6 777.6,418.0" fill="#32892b" stroke="#000" stroke-opacity="0.6" stroke-width="1.0" stroke-linejoin="round"/>
<polygon points="837.0,384.9 851.8,395.8 874.1,371.8 859.2,361.2" fill="#809c19" stroke="#000" stroke-opacity="0.6" stroke-width="1.0" stroke-linejoin="round"/>
<polygon points="918.6,326.6 933.5,336.4 955.7,317.4 940.9,308.2" fill="#d69814" stroke="#000" stroke-opacity="0.6" stroke-width="1.0" stroke-linejoin="round"/>
<polygon points="1037.4,285.2 1052.2,291.5 1074.5,283.7 1059.7,276.4" fill="#e36813" stroke="#000" stroke-opacity="0.6" stroke-width="1.0" stroke-linejoin="round"/>
<polygon points="1252.7,246.0 1267.5,253.8 1289.8,246.7 1275.0,238.5" fill="#df351b" stroke="#000" stroke-opacity="0.6" stroke-width="1.0" stroke-linejoin="round"/>
<polygon points="978.0,301.6 992.8,309.0 1015.1,295.8 1000.3,288.5" fill="#e07a13" stroke="#000" stroke-opacity="0.6" stroke-width="1.0" stroke-linejoin="round"/>
<polygon points="814.7,407.7 829.5,418.6 851.8,395.8 837.0,384.9" fill="#5f941e" stroke="#000" stroke-opacity="0.6" stroke-width="1.0" stroke-linejoin="round"/>
<polygon points="1193.3,259.8 1208.1,266.2 1230.4,254.7 1215.6,249.1" fill="#e14418" stroke="#000" stroke-opacity="0.6" stroke-width="1.0" stroke-linejoin="round"/>
<polygon points="733.0,455.1 747.8,465.4 770.1,447.5 755.3,437.2" fill="#248534" stroke="#000" stroke-opacity="0.6" stroke-width="1.0" stroke-linejoin="round"/>
<polygon points="1133.9,275.3 1148.7,282.2 1171.0,271.6 1156.2,264.9" fill="#e35915" stroke="#000" stroke-opacity="0.6" stroke-width="1.0" stroke-linejoin="round"/>
<polygon points="896.3,348.1 911.2,358.3 933.5,336.4 918.6,326.6" fill="#c4a216" stroke="#000" stroke-opacity="0.6" stroke-width="1.0" stroke-linejoin="round"/>
<polygon points="1074.5,283.7 1089.3,290.0 1111.6,283.7 1096.8,276.3" fill="#e46214" stroke="#000" stroke-opacity="0.6" stroke-width="1.0" stroke-linejoin="round"/>
<polygon points="792.4,428.6 807.2,439.4 829.5,418.6 814.7,407.7" fill="#448d24" stroke="#000" stroke-opacity="0.6" stroke-width="1.0" stroke-linejoin="round"/>
<polygon points="955.7,317.4 970.6,325.3 992.8,309.0 978.0,301.6" fill="#dd8713" stroke="#000" stroke-opacity="0.6" stroke-width="1.0" stroke-linejoin="round"/>
<polygon points="874.1,371.8 888.9,382.3 911.2,358.3 896.3,348.1" fill="#a19f17" stroke="#000" stroke-opacity="0.6" stroke-width="1.0" stroke-linejoin="round"/>
<polygon points="1015.1,295.8 1030.0,301.3 1052.2,291.5 1037.4,285.2" fill="#e26d12" stroke="#000" stroke-opacity="0.6" stroke-width="1.0" stroke-linejoin="round"/>
<polygon points="710.7,471.7 725.6,482.2 747.8,465.4 733.0,455.1" fill="#19823d" stroke="#000" stroke-opacity="0.6" stroke-width="1.0" stroke-linejoin="round"/>
<polygon points="1230.4,254.7 1245.2,263.1 1267.5,253.8 1252.7,246.0" fill="#e0381a" stroke="#000" stroke-opacity="0.6" stroke-width="1.0" stroke-linejoin="round"/>
<polygon points="1171.0,271.6 1185.8,278.8 1208.1,266.2 1193.3,259.8" fill="#e24f16" stroke="#000" stroke-opacity="0.6" stroke-width="1.0" stroke-linejoin="round"/>
<polygon points="770.1,447.5 785.0,458.2 807.2,439.4 792.4,428.6" fill="#30882b" stroke="#000" stroke-opacity="0.6" stroke-width="1.0" stroke-linejoin="round"/>
<polygon points="1111.6,283.7 1126.5,290.2 1148.7,282.2 1133.9,275.3" fill="#e45d14" stroke="#000" stroke-opacity="0.6" stroke-width="1.0" stroke-linejoin="round"/>
<polygon points="851.8,395.8 866.6,406.5 888.9,382.3 874.1,371.8" fill="#7d9b1a" stroke="#000" stroke-opacity="0.6" stroke-width="1.0" stroke-linejoin="round"/>
<polygon points="933.5,336.4 948.3,344.8 970.6,325.3 955.7,317.4" fill="#d79814" stroke="#000" stroke-opacity="0.6" stroke-width="1.0" stroke-linejoin="round"/>
<polygon points="1267.5,253.8 1282.3,264.6 1304.6,257.8 1289.8,246.7" fill="#df351b" stroke="#000" stroke-opacity="0.6" stroke-width="1.0" stroke-linejoin="round"/>
<polygon points="1052.2,291.5 1067.1,296.6 1089.3,290.0 1074.5,283.7" fill="#e46314" stroke="#000" stroke-opacity="0.6" stroke-width="1.0" stroke-linejoin="round"/>
<polygon points="688.5,487.7 703.3,498.3 725.6,482.2 710.7,471.7" fill="#12814b" stroke="#000" stroke-opacity="0.6" stroke-width="1.0" stroke-linejoin="round"/>
<polygon points="829.5,418.6 844.3,429.6 866.6,406.5 851.8,395.8" fill="#5c931f" stroke="#000" stroke-opacity="0.6" stroke-width="1.0" stroke-linejoin="round"/>
<polygon points="992.8,309.0 1007.7,314.2 1030.0,301.3 1015.1,295.8" fill="#e17512" stroke="#000" stroke-opacity="0.6" stroke-width="1.0" stroke-linejoin="round"/>
<polygon points="747.8,465.4 762.7,476.0 785.0,458.2 770.1,447.5" fill="#238535" stroke="#000" stroke-opacity="0.6" stroke-width="1.0" stroke-linejoin="round"/>
<polygon points="1208.1,266.2 1223.0,275.0 1245.2,263.1 1230.4,254.7" fill="#e14019" stroke="#000" stroke-opacity="0.6" stroke-width="1.0" stroke-linejoin="round"/>
<polygon points="911.2,358.3 926.0,367.3 948.3,344.8 933.5,336.4" fill="#c4a216" stroke="#000" stroke-opacity="0.6" stroke-width="1.0" stroke-linejoin="round"/>
<polygon points="1148.7,282.2 1163.6,289.4 1185.8,278.8 1171.0,271.6" fill="#e35615" stroke="#000" stroke-opacity="0.6" stroke-width="1.0" stroke-linejoin="round"/>
<polygon points="807.2,439.4 822.1,450.5 844.3,429.6 829.5,418.6" fill="#418c25" stroke="#000" stroke-opacity="0.6" stroke-width="1.0" stroke-linejoin="round"/>
<polygon points="1089.3,290.0 1104.2,295.7 1126.5,290.2 1111.6,283.7" fill="#e45e14" stroke="#000" stroke-opacity="0.6" stroke-width="1.0" stroke-linejoin="round"/>
<polygon points="666.2,502.9 681.0,513.9 703.3,498.3 688.5,487.7" fill="#0b8058" stroke="#000" stroke-opacity="0.6" stroke-width="1.0" stroke-linejoin="round"/>
<polygon points="888.9,382.3 903.7,391.6 926.0,367.3 911.2,358.3" fill="#a09f17" stroke="#000" stroke-opacity="0.6" stroke-width="1.0" stroke-linejoin="round"/>
<polygon points="970.6,325.3 985.4,330.7 1007.7,314.2 992.8,309.0" fill="#de8313" stroke="#000" stroke-opacity="0.6" stroke-width="1.0" stroke-linejoin="round"/>
<polygon points="725.6,482.2 740.4,493.1 762.7,476.0 747.8,465.4" fill="#18823f" stroke="#000" stroke-opacity="0.6" stroke-width="1.0" stroke-linejoin="round"/>
<polygon points="1245.2,263.1 1260.1,274.1 1282.3,264.6 1267.5,253.8" fill="#e0391a" stroke="#000" stroke-opacity="0.6" stroke-width="1.0" stroke-linejoin="round"/>
<polygon points="1030.0,301.3 1044.8,305.0 1067.1,296.6 1052.2,291.5" fill="#e36613" stroke="#000" stroke-opacity="0.6" stroke-width="1.0" stroke-linejoin="round"/>
<polygon points="1185.8,278.8 1200.7,287.9 1223.0,275.0 1208.1,266.2" fill="#e24c16" stroke="#000" stroke-opacity="0.6" stroke-width="1.0" stroke-linejoin="round"/>
<polygon points="785.0,458.2 799.8,469.0 822.1,450.5 807.2,439.4" fill="#2e882c" stroke="#000" stroke-opacity="0.6" stroke-width="1.0" stroke-linejoin="round"/>
<polygon points="866.6,406.5 881.5,416.0 903.7,391.6 888.9,382.3" fill="#7b9b1a" stroke="#000" stroke-opacity="0.6" stroke-width="1.0" stroke-linejoin="round"/>
<polygon points="1126.5,290.2 1141.3,296.7 1163.6,289.4 1148.7,282.2" fill="#e35915" stroke="#000" stroke-opacity="0.6" stroke-width="1.0" stroke-linejoin="round"/>
<polygon points="1282.3,264.6 1297.2,277.7 1319.5,270.5 1304.6,257.8" fill="#e03a1a" stroke="#000" stroke-opacity="0.6" stroke-width="1.0" stroke-linejoin="round"/>
<polygon points="643.9,517.3 658.7,528.4 681.0,513.9 666.2,502.9" fill="#078063" stroke="#000" stroke-opacity="0.6" stroke-width="1.0" stroke-linejoin="round"/>
<polygon points="948.3,344.8 963.1,350.6 985.4,330.7 970.6,325.3" fill="#da9614" stroke="#000" stroke-opacity="0.6" stroke-width="1.0" stroke-linejoin="round"/>
<polygon points="703.3,498.3 718.1,509.4 740.4,493.1 725.6,482.2" fill="#11814d" stroke="#000" stroke-opacity="0.6" stroke-width="1.0" stroke-linejoin="round"/>
<polygon points="844.3,429.6 859.2,439.3 881.5,416.0 866.6,406.5" fill="#5a921f" stroke="#000" stroke-opacity="0.6" stroke-width="1.0" stroke-linejoin="round"/>
<polygon points="1067.1,296.6 1081.9,301.0 1104.2,295.7 1089.3,290.0" fill="#e45d14" stroke="#000" stroke-opacity="0.6" stroke-width="1.0" stroke-linejoin="round"/>
<polygon points="762.7,476.0 777.5,486.4 799.8,469.0 785.0,458.2" fill="#218536" stroke="#000" stroke-opacity="0.6" stroke-width="1.0" stroke-linejoin="round"/>
<polygon points="1223.0,275.0 1237.8,286.1 1260.1,274.1 1245.2,263.1" fill="#e14119" stroke="#000" stroke-opacity="0.6" stroke-width="1.0" stroke-linejoin="round"/>
<polygon points="1007.7,314.2 1022.5,316.8 1044.8,305.0 1030.0,301.3" fill="#e26d12" stroke="#000" stroke-opacity="0.6" stroke-width="1.0" stroke-linejoin="round"/>
<polygon points="1163.6,289.4 1178.4,298.4 1200.7,287.9 1185.8,278.8" fill="#e35415" stroke="#000" stroke-opacity="0.6" stroke-width="1.0" stroke-linejoin="round"/>
<polygon points="926.0,367.3 940.8,373.6 963.1,350.6 948.3,344.8" fill="#c7a116" stroke="#000" stroke-opacity="0.6" stroke-width="1.0" stroke-linejoin="round"/>
<polygon points="822.1,450.5 836.9,459.8 859.2,439.3 844.3,429.6" fill="#408c26" stroke="#000" stroke-opacity="0.6" stroke-width="1.0" stroke-linejoin="round"/>
<polygon points="621.6,530.8 636.4,542.3 658.7,528.4 643.9,517.3" fill="#04806d" stroke="#000" stroke-opacity="0.6" stroke-width="1.0" stroke-linejoin="round"/>
<polygon points="681.0,513.9 695.8,525.3 718.1,509.4 703.3,498.3" fill="#0a805a" stroke="#000" stroke-opacity="0.6" stroke-width="1.0" stroke-linejoin="round"/>
<polygon points="1104.2,295.7 1119.0,301.5 1141.3,296.7 1126.5,290.2" fill="#e35a15" stroke="#000" stroke-opacity="0.6" stroke-width="1.0" stroke-linejoin="round"/>
<polygon points="740.4,493.1 755.2,503.2 777.5,486.4 762.7,476.0" fill="#178240" stroke="#000" stroke-opacity="0.6" stroke-width="1.0" stroke-linejoin="round"/>
<polygon points="903.7,391.6 918.6,398.6 940.8,373.6 926.0,367.3" fill="#a39f17" stroke="#000" stroke-opacity="0.6" stroke-width="1.0" stroke-linejoin="round"/>
<polygon points="1260.1,274.1 1274.9,287.0 1297.2,277.7 1282.3,264.6" fill="#e03e19" stroke="#000" stroke-opacity="0.6" stroke-width="1.0" stroke-linejoin="round"/>
<polygon points="985.4,330.7 1000.2,332.9 1022.5,316.8 1007.7,314.2" fill="#e07a13" stroke="#000" stroke-opacity="0.6" stroke-width="1.0" stroke-linejoin="round"/>
<polygon points="1200.7,287.9 1215.5,298.7 1237.8,286.1 1223.0,275.0" fill="#e24e16" stroke="#000" stroke-opacity="0.6" stroke-width="1.0" stroke-linejoin="round"/>
<polygon points="799.8,469.0 814.6,477.9 836.9,459.8 822.1,450.5" fill="#2d882d" stroke="#000" stroke-opacity="0.6" stroke-width="1.0" stroke-linejoin="round"/>
<polygon points="1044.8,305.0 1059.6,307.9 1081.9,301.0 1067.1,296.6" fill="#e45e14" stroke="#000" stroke-opacity="0.6" stroke-width="1.0" stroke-linejoin="round"/>
<polygon points="881.5,416.0 896.3,423.7 918.6,398.6 903.7,391.6" fill="#7d9b1a" stroke="#000" stroke-opacity="0.6" stroke-width="1.0" stroke-linejoin="round"/>
<polygon points="1297.2,277.7 1312.0,291.6 1334.3,283.5 1319.5,270.5" fill="#e14218" stroke="#000" stroke-opacity="0.6" stroke-width="1.0" stroke-linejoin="round"/>
<polygon points="1141.3,296.7 1156.1,304.8 1178.4,298.4 1163.6,289.4" fill="#e35715" stroke="#000" stroke-opacity="0.6" stroke-width="1.0" stroke-linejoin="round"/>
<polygon points="658.7,528.4 673.6,540.5 695.8,525.3 681.0,513.9" fill="#068066" stroke="#000" stroke-opacity="0.6" stroke-width="1.0" stroke-linejoin="round"/>
<polygon points="599.3,542.6 614.2,554.4 636.4,542.3 621.6,530.8" fill="#027f75" stroke="#000" stroke-opacity="0.6" stroke-width="1.0" stroke-linejoin="round"/>
<polygon points="718.1,509.4 732.9,519.8 755.2,503.2 740.4,493.1" fill="#10814f" stroke="#000" stroke-opacity="0.6" stroke-width="1.0" stroke-linejoin="round"/>
<polygon points="859.2,439.3 874.0,446.8 896.3,423.7 881.5,416.0" fill="#5b931f" stroke="#000" stroke-opacity="0.6" stroke-width="1.0" stroke-linejoin="round"/>
<polygon points="963.1,350.6 977.9,353.4 1000.2,332.9 985.4,330.7" fill="#dc8d14" stroke="#000" stroke-opacity="0.6" stroke-width="1.0" stroke-linejoin="round"/>
<polygon points="777.5,486.4 792.3,494.7 814.6,477.9 799.8,469.0" fill="#218536" stroke="#000" stroke-opacity="0.6" stroke-width="1.0" stroke-linejoin="round"/>
<polygon points="1237.8,286.1 1252.6,298.9 1274.9,287.0 1260.1,274.1" fill="#e14717" stroke="#000" stroke-opacity="0.6" stroke-width="1.0" stroke-linejoin="round"/>
<polygon points="1081.9,301.0 1096.7,305.7 1119.0,301.5 1104.2,295.7" fill="#e35815" stroke="#000" stroke-opacity="0.6" stroke-width="1.0" stroke-linejoin="round"/>
<polygon points="1178.4,298.4 1193.2,308.9 1215.5,298.7 1200.7,287.9" fill="#e35515" stroke="#000" stroke-opacity="0.6" stroke-width="1.0" stroke-linejoin="round"/>
<polygon points="1022.5,316.8 1037.3,318.3 1059.6,307.9 1044.8,305.0" fill="#e46314" stroke="#000" stroke-opacity="0.6" stroke-width="1.0" stroke-linejoin="round"/>
<polygon points="836.9,459.8 851.7,467.0 874.0,446.8 859.2,439.3" fill="#418c25" stroke="#000" stroke-opacity="0.6" stroke-width="1.0" stroke-linejoin="round"/>
<polygon points="636.4,542.3 651.3,554.5 673.6,540.5 658.7,528.4" fill="#038070" stroke="#000" stroke-opacity="0.6" stroke-width="1.0" stroke-linejoin="round"/>
<polygon points="940.8,373.6 955.7,377.2 977.9,353.4 963.1,350.6" fill="#cd9d15" stroke="#000" stroke-opacity="0.6" stroke-width="1.0" stroke-linejoin="round"/>
<polygon points="695.8,525.3 710.7,536.4 732.9,519.8 718.1,509.4" fill="#09805c" stroke="#000" stroke-opacity="0.6" stroke-width="1.0" stroke-linejoin="round"/>
<polygon points="1274.9,287.0 1289.7,300.8 1312.0,291.6 1297.2,277.7" fill="#e14618" stroke="#000" stroke-opacity="0.6" stroke-width="1.0" stroke-linejoin="round"/>
<polygon points="577.1,552.6 591.9,564.5 614.2,554.4 599.3,542.6" fill="#017c78" stroke="#000" stroke-opacity="0.6" stroke-width="1.0" stroke-linejoin="round"/>
<polygon points="755.2,503.2 770.1,511.5 792.3,494.7 777.5,486.4" fill="#178240" stroke="#000" stroke-opacity="0.6" stroke-width="1.0" stroke-linejoin="round"/>
<polygon points="1119.0,301.5 1133.8,308.6 1156.1,304.8 1141.3,296.7" fill="#e35615" stroke="#000" stroke-opacity="0.6" stroke-width="1.0" stroke-linejoin="round"/>
<polygon points="918.6,398.6 933.4,403.2 955.7,377.2 940.8,373.6" fill="#aa9e16" stroke="#000" stroke-opacity="0.6" stroke-width="1.0" stroke-linejoin="round"/>
<polygon points="1215.5,298.7 1230.3,311.1 1252.6,298.9 1237.8,286.1" fill="#e25116" stroke="#000" stroke-opacity="0.6" stroke-width="1.0" stroke-linejoin="round"/>
<polygon points="814.6,477.9 829.4,484.4 851.7,467.0 836.9,459.8" fill="#2e882c" stroke="#000" stroke-opacity="0.6" stroke-width="1.0" stroke-linejoin="round"/>
<polygon points="1312.0,291.6 1326.8,304.8 1349.1,296.2 1334.3,283.5" fill="#e24917" stroke="#000" stroke-opacity="0.6" stroke-width="1.0" stroke-linejoin="round"/>
<polygon points="1000.2,332.9 1015.1,333.9 1037.3,318.3 1022.5,316.8" fill="#e26e12" stroke="#000" stroke-opacity="0.6" stroke-width="1.0" stroke-linejoin="round"/>
<polygon points="673.6,540.5 688.4,552.4 710.7,536.4 695.8,525.3" fill="#058069" stroke="#000" stroke-opacity="0.6" stroke-width="1.0" stroke-linejoin="round"/>
<polygon points="896.3,423.7 911.1,429.3 933.4,403.2 918.6,398.6" fill="#849d19" stroke="#000" stroke-opacity="0.6" stroke-width="1.0" stroke-linejoin="round"/>
<polygon points="1156.1,304.8 1170.9,314.8 1193.2,308.9 1178.4,298.4" fill="#e35715" stroke="#000" stroke-opacity="0.6" stroke-width="1.0" stroke-linejoin="round"/>
<polygon points="1059.6,307.9 1074.5,311.6 1096.7,305.7 1081.9,301.0" fill="#e35715" stroke="#000" stroke-opacity="0.6" stroke-width="1.0" stroke-linejoin="round"/>
<polygon points="614.2,554.4 629.0,566.7 651.3,554.5 636.4,542.3" fill="#027d76" stroke="#000" stroke-opacity="0.6" stroke-width="1.0" stroke-linejoin="round"/>
<polygon points="732.9,519.8 747.8,528.3 770.1,511.5 755.2,503.2" fill="#10814f" stroke="#000" stroke-opacity="0.6" stroke-width="1.0" stroke-linejoin="round"/>
<polygon points="1252.6,298.9 1267.4,312.1 1289.7,300.8 1274.9,287.0" fill="#e24e16" stroke="#000" stroke-opacity="0.6" stroke-width="1.0" stroke-linejoin="round"/>
<polygon points="554.8,561.2 569.6,572.6 591.9,564.5 577.1,552.6" fill="#017a79" stroke="#000" stroke-opacity="0.6" stroke-width="1.0" stroke-linejoin="round"/>
<polygon points="874.0,446.8 888.8,452.7 911.1,429.3 896.3,423.7" fill="#60941e" stroke="#000" stroke-opacity="0.6" stroke-width="1.0" stroke-linejoin="round"/>
<polygon points="792.3,494.7 807.2,500.7 829.4,484.4 814.6,477.9" fill="#238535" stroke="#000" stroke-opacity="0.6" stroke-width="1.0" stroke-linejoin="round"/>
<polygon points="1193.2,308.9 1208.1,320.8 1230.3,311.1 1215.5,298.7" fill="#e35815" stroke="#000" stroke-opacity="0.6" stroke-width="1.0" stroke-linejoin="round"/>
<polygon points="977.9,353.4 992.8,354.9 1015.1,333.9 1000.2,332.9" fill="#de8213" stroke="#000" stroke-opacity="0.6" stroke-width="1.0" stroke-linejoin="round"/>
<polygon points="1096.7,305.7 1111.6,311.8 1133.8,308.6 1119.0,301.5" fill="#e35415" stroke="#000" stroke-opacity="0.6" stroke-width="1.0" stroke-linejoin="round"/>
<polygon points="651.3,554.5 666.1,566.7 688.4,552.4 673.6,540.5" fill="#028074" stroke="#000" stroke-opacity="0.6" stroke-width="1.0" stroke-linejoin="round"/>
<polygon points="1289.7,300.8 1304.6,314.2 1326.8,304.8 1312.0,291.6" fill="#e24e16" stroke="#000" stroke-opacity="0.6" stroke-width="1.0" stroke-linejoin="round"/>
<polygon points="710.7,536.4 725.5,545.6 747.8,528.3 732.9,519.8" fill="#09805d" stroke="#000" stroke-opacity="0.6" stroke-width="1.0" stroke-linejoin="round"/>
<polygon points="851.7,467.0 866.6,472.9 888.8,452.7 874.0,446.8" fill="#458d24" stroke="#000" stroke-opacity="0.6" stroke-width="1.0" stroke-linejoin="round"/>
<polygon points="591.9,564.5 606.7,576.9 629.0,566.7 614.2,554.4" fill="#017a79" stroke="#000" stroke-opacity="0.6" stroke-width="1.0" stroke-linejoin="round"/>
<polygon points="1037.3,318.3 1052.2,321.3 1074.5,311.6 1059.6,307.9" fill="#e35a15" stroke="#000" stroke-opacity="0.6" stroke-width="1.0" stroke-linejoin="round"/>
<polygon points="955.7,377.2 970.5,379.8 992.8,354.9 977.9,353.4" fill="#d59914" stroke="#000" stroke-opacity="0.6" stroke-width="1.0" stroke-linejoin="round"/>
<polygon points="1133.8,308.6 1148.7,317.7 1170.9,314.8 1156.1,304.8" fill="#e35615" stroke="#000" stroke-opacity="0.6" stroke-width="1.0" stroke-linejoin="round"/>
<polygon points="1230.3,311.1 1245.2,323.6 1267.4,312.1 1252.6,298.9" fill="#e35615" stroke="#000" stroke-opacity="0.6" stroke-width="1.0" stroke-linejoin="round"/>
<polygon points="770.1,511.5 784.9,517.4 807.2,500.7 792.3,494.7" fill="#18823e" stroke="#000" stroke-opacity="0.6" stroke-width="1.0" stroke-linejoin="round"/>
<polygon points="1326.8,304.8 1341.7,316.4 1363.9,307.6 1349.1,296.2" fill="#e24f16" stroke="#000" stroke-opacity="0.6" stroke-width="1.0" stroke-linejoin="round"/>
<polygon points="532.5,567.8 547.3,578.9 569.6,572.6 554.8,561.2" fill="#01797a" stroke="#000" stroke-opacity="0.6" stroke-width="1.0" stroke-linejoin="round"/>
<polygon points="933.4,403.2 948.2,407.1 970.5,379.8 955.7,377.2" fill="#b6a016" stroke="#000" stroke-opacity="0.6" stroke-width="1.0" stroke-linejoin="round"/>
<polygon points="829.4,484.4 844.3,490.1 866.6,472.9 851.7,467.0" fill="#33892a" stroke="#000" stroke-opacity="0.6" stroke-width="1.0" stroke-linejoin="round"/>
<polygon points="688.4,552.4 703.2,562.3 725.5,545.6 710.7,536.4" fill="#05806a" stroke="#000" stroke-opacity="0.6" stroke-width="1.0" stroke-linejoin="round"/>
<polygon points="629.0,566.7 643.8,579.5 666.1,566.7 651.3,554.5" fill="#017b78" stroke="#000" stroke-opacity="0.6" stroke-width="1.0" stroke-linejoin="round"/>
<polygon points="1170.9,314.8 1185.8,326.5 1208.1,320.8 1193.2,308.9" fill="#e35a15" stroke="#000" stroke-opacity="0.6" stroke-width="1.0" stroke-linejoin="round"/>
<polygon points="1267.4,312.1 1282.3,324.7 1304.6,314.2 1289.7,300.8" fill="#e35415" stroke="#000" stroke-opacity="0.6" stroke-width="1.0" stroke-linejoin="round"/>
<polygon points="911.1,429.3 925.9,434.3 948.2,407.1 933.4,403.2" fill="#8e9e19" stroke="#000" stroke-opacity="0.6" stroke-width="1.0" stroke-linejoin="round"/>
<polygon points="1074.5,311.6 1089.3,317.0 1111.6,311.8 1096.7,305.7" fill="#e25116" stroke="#000" stroke-opacity="0.6" stroke-width="1.0" stroke-linejoin="round"/>
<polygon points="1015.1,333.9 1029.9,336.8 1052.2,321.3 1037.3,318.3" fill="#e46314" stroke="#000" stroke-opacity="0.6" stroke-width="1.0" stroke-linejoin="round"/>
<polygon points="747.8,528.3 762.6,534.4 784.9,517.4 770.1,511.5" fill="#11814c" stroke="#000" stroke-opacity="0.6" stroke-width="1.0" stroke-linejoin="round"/>
<polygon points="569.6,572.6 584.4,585.3 606.7,576.9 591.9,564.5" fill="#01787b" stroke="#000" stroke-opacity="0.6" stroke-width="1.0" stroke-linejoin="round"/>
<polygon points="1208.1,320.8 1222.9,333.1 1245.2,323.6 1230.3,311.1" fill="#e45c14" stroke="#000" stroke-opacity="0.6" stroke-width="1.0" stroke-linejoin="round"/>
<polygon points="888.8,452.7 903.7,458.9 925.9,434.3 911.1,429.3" fill="#67961d" stroke="#000" stroke-opacity="0.6" stroke-width="1.0" stroke-linejoin="round"/>
<polygon points="807.2,500.7 822.0,505.9 844.3,490.1 829.4,484.4" fill="#278632" stroke="#000" stroke-opacity="0.6" stroke-width="1.0" stroke-linejoin="round"/>
<polygon points="666.1,566.7 680.9,578.0 703.2,562.3 688.4,552.4" fill="#027f75" stroke="#000" stroke-opacity="0.6" stroke-width="1.0" stroke-linejoin="round"/>
<polygon points="1304.6,314.2 1319.4,325.7 1341.7,316.4 1326.8,304.8" fill="#e35315" stroke="#000" stroke-opacity="0.6" stroke-width="1.0" stroke-linejoin="round"/>
<polygon points="1111.6,311.8 1126.4,320.1 1148.7,317.7 1133.8,308.6" fill="#e25116" stroke="#000" stroke-opacity="0.6" stroke-width="1.0" stroke-linejoin="round"/>
<polygon points="606.7,576.9 621.6,590.2 643.8,579.5 629.0,566.7" fill="#01777b" stroke="#000" stroke-opacity="0.6" stroke-width="1.0" stroke-linejoin="round"/>
<polygon points="992.8,354.9 1007.6,358.9 1029.9,336.8 1015.1,333.9" fill="#e17712" stroke="#000" stroke-opacity="0.6" stroke-width="1.0" stroke-linejoin="round"/>
<polygon points="725.5,545.6 740.3,552.2 762.6,534.4 747.8,528.3" fill="#0a805b" stroke="#000" stroke-opacity="0.6" stroke-width="1.0" stroke-linejoin="round"/>
<polygon points="1245.2,323.6 1260.0,335.5 1282.3,324.7 1267.4,312.1" fill="#e35a15" stroke="#000" stroke-opacity="0.6" stroke-width="1.0" stroke-linejoin="round"/>
<polygon points="866.6,472.9 881.4,479.5 903.7,458.9 888.8,452.7" fill="#4a8e22" stroke="#000" stroke-opacity="0.6" stroke-width="1.0" stroke-linejoin="round"/>
<polygon points="1148.7,317.7 1163.5,328.8 1185.8,326.5 1170.9,314.8" fill="#e35715" stroke="#000" stroke-opacity="0.6" stroke-width="1.0" stroke-linejoin="round"/>
<polygon points="1052.2,321.3 1067.0,327.0 1089.3,317.0 1074.5,311.6" fill="#e35315" stroke="#000" stroke-opacity="0.6" stroke-width="1.0" stroke-linejoin="round"/>
<polygon points="1341.7,316.4 1356.5,326.1 1378.8,317.1 1363.9,307.6" fill="#e25016" stroke="#000" stroke-opacity="0.6" stroke-width="1.0" stroke-linejoin="round"/>
<polygon points="970.5,379.8 985.3,385.1 1007.6,358.9 992.8,354.9" fill="#db9214" stroke="#000" stroke-opacity="0.6" stroke-width="1.0" stroke-linejoin="round"/>
<polygon points="784.9,517.4 799.7,521.9 822.0,505.9 807.2,500.7" fill="#1c833a" stroke="#000" stroke-opacity="0.6" stroke-width="1.0" stroke-linejoin="round"/>
<polygon points="547.3,578.9 562.2,592.6 584.4,585.3 569.6,572.6" fill="#01777c" stroke="#000" stroke-opacity="0.6" stroke-width="1.0" stroke-linejoin="round"/>
<polygon points="643.8,579.5 658.7,592.2 680.9,578.0 666.1,566.7" fill="#01797a" stroke="#000" stroke-opacity="0.6" stroke-width="1.0" stroke-linejoin="round"/>
<polygon points="1185.8,326.5 1200.6,338.8 1222.9,333.1 1208.1,320.8" fill="#e45d14" stroke="#000" stroke-opacity="0.6" stroke-width="1.0" stroke-linejoin="round"/>
<polygon points="703.2,562.3 718.1,570.2 740.3,552.2 725.5,545.6" fill="#058069" stroke="#000" stroke-opacity="0.6" stroke-width="1.0" stroke-linejoin="round"/>
<polygon points="948.2,407.1 963.1,413.4 985.3,385.1 970.5,379.8" fill="#c1a216" stroke="#000" stroke-opacity="0.6" stroke-width="1.0" stroke-linejoin="round"/>
<polygon points="1282.3,324.7 1297.1,335.7 1319.4,325.7 1304.6,314.2" fill="#e35715" stroke="#000" stroke-opacity="0.6" stroke-width="1.0" stroke-linejoin="round"/>
<polygon points="844.3,490.1 859.1,496.8 881.4,479.5 866.6,472.9" fill="#378a29" stroke="#000" stroke-opacity="0.6" stroke-width="1.0" stroke-linejoin="round"/>
<polygon points="584.4,585.3 599.3,599.1 621.6,590.2 606.7,576.9" fill="#00757d" stroke="#000" stroke-opacity="0.6" stroke-width="1.0" stroke-linejoin="round"/>
<polygon points="1089.3,317.0 1104.1,325.3 1126.4,320.1 1111.6,311.8" fill="#e24e16" stroke="#000" stroke-opacity="0.6" stroke-width="1.0" stroke-linejoin="round"/>
<polygon points="925.9,434.3 940.8,441.7 963.1,413.4 948.2,407.1" fill="#96a018" stroke="#000" stroke-opacity="0.6" stroke-width="1.0" stroke-linejoin="round"/>
<polygon points="1222.9,333.1 1237.7,344.2 1260.0,335.5 1245.2,323.6" fill="#e45f14" stroke="#000" stroke-opacity="0.6" stroke-width="1.0" stroke-linejoin="round"/>
<polygon points="762.6,534.4 777.4,539.2 799.7,521.9 784.9,517.4" fill="#148147" stroke="#000" stroke-opacity="0.6" stroke-width="1.0" stroke-linejoin="round"/>
<polygon points="1029.9,336.8 1044.7,344.4 1067.0,327.0 1052.2,321.3" fill="#e45d14" stroke="#000" stroke-opacity="0.6" stroke-width="1.0" stroke-linejoin="round"/>
<polygon points="903.7,458.9 918.5,467.3 940.8,441.7 925.9,434.3" fill="#6b971c" stroke="#000" stroke-opacity="0.6" stroke-width="1.0" stroke-linejoin="round"/>
<polygon points="680.9,578.0 695.8,587.7 718.1,570.2 703.2,562.3" fill="#027e75" stroke="#000" stroke-opacity="0.6" stroke-width="1.0" stroke-linejoin="round"/>
<polygon points="1319.4,325.7 1334.2,335.1 1356.5,326.1 1341.7,316.4" fill="#e35415" stroke="#000" stroke-opacity="0.6" stroke-width="1.0" stroke-linejoin="round"/>
<polygon points="621.6,590.2 636.4,603.9 658.7,592.2 643.8,579.5" fill="#00757e" stroke="#000" stroke-opacity="0.6" stroke-width="1.0" stroke-linejoin="round"/>
<polygon points="1126.4,320.1 1141.2,331.2 1163.5,328.8 1148.7,317.7" fill="#e25216" stroke="#000" stroke-opacity="0.6" stroke-width="1.0" stroke-linejoin="round"/>
<polygon points="822.0,505.9 836.8,512.5 859.1,496.8 844.3,490.1" fill="#2a872f" stroke="#000" stroke-opacity="0.6" stroke-width="1.0" stroke-linejoin="round"/>
<polygon points="1260.0,335.5 1274.8,345.4 1297.1,335.7 1282.3,324.7" fill="#e45d14" stroke="#000" stroke-opacity="0.6" stroke-width="1.0" stroke-linejoin="round"/>
<polygon points="1007.6,358.9 1022.4,368.0 1044.7,344.4 1029.9,336.8" fill="#e27112" stroke="#000" stroke-opacity="0.6" stroke-width="1.0" stroke-linejoin="round"/>
<polygon points="1163.5,328.8 1178.3,341.1 1200.6,338.8 1185.8,326.5" fill="#e35b15" stroke="#000" stroke-opacity="0.6" stroke-width="1.0" stroke-linejoin="round"/>
<polygon points="740.3,552.2 755.2,557.6 777.4,539.2 762.6,534.4" fill="#0c8056" stroke="#000" stroke-opacity="0.6" stroke-width="1.0" stroke-linejoin="round"/>
<polygon points="881.4,479.5 896.2,488.7 918.5,467.3 903.7,458.9" fill="#4d8f22" stroke="#000" stroke-opacity="0.6" stroke-width="1.0" stroke-linejoin="round"/>
<polygon points="562.2,592.6 577.0,607.2 599.3,599.1 584.4,585.3" fill="#00747f" stroke="#000" stroke-opacity="0.6" stroke-width="1.0" stroke-linejoin="round"/>
<polygon points="1067.0,327.0 1081.8,337.3 1104.1,325.3 1089.3,317.0" fill="#e25116" stroke="#000" stroke-opacity="0.6" stroke-width="1.0" stroke-linejoin="round"/>
<polygon points="1356.5,326.1 1371.3,333.4 1393.6,324.7 1378.8,317.1" fill="#e24f16" stroke="#000" stroke-opacity="0.6" stroke-width="1.0" stroke-linejoin="round"/>
<polygon points="658.7,592.2 673.5,603.9 695.8,587.7 680.9,578.0" fill="#01787b" stroke="#000" stroke-opacity="0.6" stroke-width="1.0" stroke-linejoin="round"/>
<polygon points="1200.6,338.8 1215.4,349.8 1237.7,344.2 1222.9,333.1" fill="#e46114" stroke="#000" stroke-opacity="0.6" stroke-width="1.0" stroke-linejoin="round"/>
<polygon points="985.3,385.1 1000.2,395.2 1022.4,368.0 1007.6,358.9" fill="#dc8f14" stroke="#000" stroke-opacity="0.6" stroke-width="1.0" stroke-linejoin="round"/>
<polygon points="799.7,521.9 814.6,528.0 836.8,512.5 822.0,505.9" fill="#208437" stroke="#000" stroke-opacity="0.6" stroke-width="1.0" stroke-linejoin="round"/>
<polygon points="1297.1,335.7 1311.9,344.6 1334.2,335.1 1319.4,325.7" fill="#e35915" stroke="#000" stroke-opacity="0.6" stroke-width="1.0" stroke-linejoin="round"/>
<polygon points="599.3,599.1 614.1,613.3 636.4,603.9 621.6,590.2" fill="#007280" stroke="#000" stroke-opacity="0.6" stroke-width="1.0" stroke-linejoin="round"/>
<polygon points="963.1,413.4 977.9,424.2 1000.2,395.2 985.3,385.1" fill="#c4a216" stroke="#000" stroke-opacity="0.6" stroke-width="1.0" stroke-linejoin="round"/>
<polygon points="718.1,570.2 732.9,576.7 755.2,557.6 740.3,552.2" fill="#068066" stroke="#000" stroke-opacity="0.6" stroke-width="1.0" stroke-linejoin="round"/>
<polygon points="859.1,496.8 873.9,506.5 896.2,488.7 881.4,479.5" fill="#398a28" stroke="#000" stroke-opacity="0.6" stroke-width="1.0" stroke-linejoin="round"/>
<polygon points="1104.1,325.3 1118.9,337.5 1141.2,331.2 1126.4,320.1" fill="#e24f16" stroke="#000" stroke-opacity="0.6" stroke-width="1.0" stroke-linejoin="round"/>
<polygon points="1237.7,344.2 1252.6,352.8 1274.8,345.4 1260.0,335.5" fill="#e46114" stroke="#000" stroke-opacity="0.6" stroke-width="1.0" stroke-linejoin="round"/>
<polygon points="940.8,441.7 955.6,452.7 977.9,424.2 963.1,413.4" fill="#97a018" stroke="#000" stroke-opacity="0.6" stroke-width="1.0" stroke-linejoin="round"/>
<polygon points="1044.7,344.4 1059.6,356.8 1081.8,337.3 1067.0,327.0" fill="#e45c14" stroke="#000" stroke-opacity="0.6" stroke-width="1.0" stroke-linejoin="round"/>
<polygon points="777.4,539.2 792.3,544.7 814.6,528.0 799.7,521.9" fill="#178241" stroke="#000" stroke-opacity="0.6" stroke-width="1.0" stroke-linejoin="round"/>
<polygon points="636.4,603.9 651.2,617.4 673.5,603.9 658.7,592.2" fill="#007280" stroke="#000" stroke-opacity="0.6" stroke-width="1.0" stroke-linejoin="round"/>
<polygon points="1141.2,331.2 1156.1,344.3 1178.3,341.1 1163.5,328.8" fill="#e35615" stroke="#000" stroke-opacity="0.6" stroke-width="1.0" stroke-linejoin="round"/>
<polygon points="918.5,467.3 933.3,478.6 955.6,452.7 940.8,441.7" fill="#6b971c" stroke="#000" stroke-opacity="0.6" stroke-width="1.0" stroke-linejoin="round"/>
<polygon points="1334.2,335.1 1349.1,342.1 1371.3,333.4 1356.5,326.1" fill="#e35315" stroke="#000" stroke-opacity="0.6" stroke-width="1.0" stroke-linejoin="round"/>
<polygon points="695.8,587.7 710.6,595.9 732.9,576.7 718.1,570.2" fill="#027f75" stroke="#000" stroke-opacity="0.6" stroke-width="1.0" stroke-linejoin="round"/>
<polygon points="836.8,512.5 851.7,522.2 873.9,506.5 859.1,496.8" fill="#2b872f" stroke="#000" stroke-opacity="0.6" stroke-width="1.0" stroke-linejoin="round"/>
<polygon points="1178.3,341.1 1193.2,353.1 1215.4,349.8 1200.6,338.8" fill="#e45e14" stroke="#000" stroke-opacity="0.6" stroke-width="1.0" stroke-linejoin="round"/>
<polygon points="1022.4,368.0 1037.3,381.5 1059.6,356.8 1044.7,344.4" fill="#e17312" stroke="#000" stroke-opacity="0.6" stroke-width="1.0" stroke-linejoin="round"/>
<polygon points="1274.8,345.4 1289.7,353.3 1311.9,344.6 1297.1,335.7" fill="#e45d14" stroke="#000" stroke-opacity="0.6" stroke-width="1.0" stroke-linejoin="round"/>
<polygon points="577.0,607.2 591.8,621.6 614.1,613.3 599.3,599.1" fill="#007081" stroke="#000" stroke-opacity="0.6" stroke-width="1.0" stroke-linejoin="round"/>
<polygon points="896.2,488.7 911.1,500.7 933.3,478.6 918.5,467.3" fill="#4b8e22" stroke="#000" stroke-opacity="0.6" stroke-width="1.0" stroke-linejoin="round"/>
<polygon points="755.2,557.6 770.0,563.3 792.3,544.7 777.4,539.2" fill="#0f8151" stroke="#000" stroke-opacity="0.6" stroke-width="1.0" stroke-linejoin="round"/>
<polygon points="1081.8,337.3 1096.7,351.3 1118.9,337.5 1104.1,325.3" fill="#e35415" stroke="#000" stroke-opacity="0.6" stroke-width="1.0" stroke-linejoin="round"/>
<polygon points="1000.2,395.2 1015.0,409.2 1037.3,381.5 1022.4,368.0" fill="#db9314" stroke="#000" stroke-opacity="0.6" stroke-width="1.0" stroke-linejoin="round"/>
<polygon points="673.5,603.9 688.3,614.4 710.6,595.9 695.8,587.7" fill="#01777c" stroke="#000" stroke-opacity="0.6" stroke-width="1.0" stroke-linejoin="round"/>
<polygon points="1215.4,349.8 1230.3,358.6 1252.6,352.8 1237.7,344.2" fill="#e46214" stroke="#000" stroke-opacity="0.6" stroke-width="1.0" stroke-linejoin="round"/>
<polygon points="1371.3,333.4 1386.2,338.6 1408.4,330.5 1393.6,324.7" fill="#e24b17" stroke="#000" stroke-opacity="0.6" stroke-width="1.0" stroke-linejoin="round"/>
<polygon points="614.1,613.3 628.9,627.7 651.2,617.4 636.4,603.9" fill="#006e82" stroke="#000" stroke-opacity="0.6" stroke-width="1.0" stroke-linejoin="round"/>
<polygon points="814.6,528.0 829.4,537.2 851.7,522.2 836.8,512.5" fill="#228536" stroke="#000" stroke-opacity="0.6" stroke-width="1.0" stroke-linejoin="round"/>
<polygon points="977.9,424.2 992.7,438.3 1015.0,409.2 1000.2,395.2" fill="#bda116" stroke="#000" stroke-opacity="0.6" stroke-width="1.0" stroke-linejoin="round"/>
<polygon points="873.9,506.5 888.8,518.9 911.1,500.7 896.2,488.7" fill="#378a29" stroke="#000" stroke-opacity="0.6" stroke-width="1.0" stroke-linejoin="round"/>
<polygon points="1311.9,344.6 1326.8,351.3 1349.1,342.1 1334.2,335.1" fill="#e35715" stroke="#000" stroke-opacity="0.6" stroke-width="1.0" stroke-linejoin="round"/>
<polygon points="1118.9,337.5 1133.8,352.2 1156.1,344.3 1141.2,331.2" fill="#e35415" stroke="#000" stroke-opacity="0.6" stroke-width="1.0" stroke-linejoin="round"/>
<polygon points="732.9,576.7 747.7,583.4 770.0,563.3 755.2,557.6" fill="#088062" stroke="#000" stroke-opacity="0.6" stroke-width="1.0" stroke-linejoin="round"/>
<polygon points="955.6,452.7 970.4,466.6 992.7,438.3 977.9,424.2" fill="#909f18" stroke="#000" stroke-opacity="0.6" stroke-width="1.0" stroke-linejoin="round"/>
<polygon points="1059.6,356.8 1074.4,371.9 1096.7,351.3 1081.8,337.3" fill="#e46114" stroke="#000" stroke-opacity="0.6" stroke-width="1.0" stroke-linejoin="round"/>
<polygon points="1252.6,352.8 1267.4,360.2 1289.7,353.3 1274.8,345.4" fill="#e45f14" stroke="#000" stroke-opacity="0.6" stroke-width="1.0" stroke-linejoin="round"/>
<polygon points="651.2,617.4 666.0,630.1 688.3,614.4 673.5,603.9" fill="#007081" stroke="#000" stroke-opacity="0.6" stroke-width="1.0" stroke-linejoin="round"/>
<polygon points="1156.1,344.3 1170.9,358.0 1193.2,353.1 1178.3,341.1" fill="#e35a15" stroke="#000" stroke-opacity="0.6" stroke-width="1.0" stroke-linejoin="round"/>
<polygon points="933.3,478.6 948.2,492.4 970.4,466.6 955.6,452.7" fill="#65951d" stroke="#000" stroke-opacity="0.6" stroke-width="1.0" stroke-linejoin="round"/>
<polygon points="792.3,544.7 807.1,553.2 829.4,537.2 814.6,528.0" fill="#18823e" stroke="#000" stroke-opacity="0.6" stroke-width="1.0" stroke-linejoin="round"/>
<polygon points="851.7,522.2 866.5,534.5 888.8,518.9 873.9,506.5" fill="#298730" stroke="#000" stroke-opacity="0.6" stroke-width="1.0" stroke-linejoin="round"/>
<polygon points="1037.3,381.5 1052.1,397.2 1074.4,371.9 1059.6,356.8" fill="#e07b13" stroke="#000" stroke-opacity="0.6" stroke-width="1.0" stroke-linejoin="round"/>
<polygon points="710.6,595.9 725.4,604.1 747.7,583.4 732.9,576.7" fill="#028073" stroke="#000" stroke-opacity="0.6" stroke-width="1.0" stroke-linejoin="round"/>
<polygon points="591.8,621.6 606.7,636.1 628.9,627.7 614.1,613.3" fill="#006b83" stroke="#000" stroke-opacity="0.6" stroke-width="1.0" stroke-linejoin="round"/>
<polygon points="1349.1,342.1 1363.9,346.8 1386.2,338.6 1371.3,333.4" fill="#e24f16" stroke="#000" stroke-opacity="0.6" stroke-width="1.0" stroke-linejoin="round"/>
<polygon points="1193.2,353.1 1208.0,363.9 1230.3,358.6 1215.4,349.8" fill="#e46014" stroke="#000" stroke-opacity="0.6" stroke-width="1.0" stroke-linejoin="round"/>
<polygon points="911.1,500.7 925.9,514.5 948.2,492.4 933.3,478.6" fill="#468d24" stroke="#000" stroke-opacity="0.6" stroke-width="1.0" stroke-linejoin="round"/>
<polygon points="1289.7,353.3 1304.5,360.2 1326.8,351.3 1311.9,344.6" fill="#e35b15" stroke="#000" stroke-opacity="0.6" stroke-width="1.0" stroke-linejoin="round"/>
<polygon points="1096.7,351.3 1111.5,367.2 1133.8,352.2 1118.9,337.5" fill="#e35a15" stroke="#000" stroke-opacity="0.6" stroke-width="1.0" stroke-linejoin="round"/>
<polygon points="1015.0,409.2 1029.8,425.2 1052.1,397.2 1037.3,381.5" fill="#d69814" stroke="#000" stroke-opacity="0.6" stroke-width="1.0" stroke-linejoin="round"/>
<polygon points="628.9,627.7 643.8,641.8 666.0,630.1 651.2,617.4" fill="#006a84" stroke="#000" stroke-opacity="0.6" stroke-width="1.0" stroke-linejoin="round"/>
<polygon points="770.0,563.3 784.8,571.2 807.1,553.2 792.3,544.7" fill="#10814e" stroke="#000" stroke-opacity="0.6" stroke-width="1.0" stroke-linejoin="round"/>
<polygon points="688.3,614.4 703.2,624.7 725.4,604.1 710.6,595.9" fill="#01777c" stroke="#000" stroke-opacity="0.6" stroke-width="1.0" stroke-linejoin="round"/>
<polygon points="992.7,438.3 1007.6,453.8 1029.8,425.2 1015.0,409.2" fill="#b09f16" stroke="#000" stroke-opacity="0.6" stroke-width="1.0" stroke-linejoin="round"/>
<polygon points="1230.3,358.6 1245.1,366.4 1267.4,360.2 1252.6,352.8" fill="#e46014" stroke="#000" stroke-opacity="0.6" stroke-width="1.0" stroke-linejoin="round"/>
<polygon points="829.4,537.2 844.2,549.4 866.5,534.5 851.7,522.2" fill="#208438" stroke="#000" stroke-opacity="0.6" stroke-width="1.0" stroke-linejoin="round"/>
<polygon points="888.8,518.9 903.6,532.7 925.9,514.5 911.1,500.7" fill="#31892b" stroke="#000" stroke-opacity="0.6" stroke-width="1.0" stroke-linejoin="round"/>
<polygon points="1133.8,352.2 1148.6,367.8 1170.9,358.0 1156.1,344.3" fill="#e35b15" stroke="#000" stroke-opacity="0.6" stroke-width="1.0" stroke-linejoin="round"/>
<polygon points="1386.2,338.6 1401.0,342.2 1423.3,334.9 1408.4,330.5" fill="#e14218" stroke="#000" stroke-opacity="0.6" stroke-width="1.0" stroke-linejoin="round"/>
<polygon points="970.4,466.6 985.3,481.7 1007.6,453.8 992.7,438.3" fill="#849d19" stroke="#000" stroke-opacity="0.6" stroke-width="1.0" stroke-linejoin="round"/>
<polygon points="1074.4,371.9 1089.2,388.7 1111.5,367.2 1096.7,351.3" fill="#e36b13" stroke="#000" stroke-opacity="0.6" stroke-width="1.0" stroke-linejoin="round"/>
<polygon points="1326.8,351.3 1341.6,356.2 1363.9,346.8 1349.1,342.1" fill="#e25216" stroke="#000" stroke-opacity="0.6" stroke-width="1.0" stroke-linejoin="round"/>
<polygon points="747.7,583.4 762.5,591.6 784.8,571.2 770.0,563.3" fill="#08805f" stroke="#000" stroke-opacity="0.6" stroke-width="1.0" stroke-linejoin="round"/>
<polygon points="948.2,492.4 963.0,507.1 985.3,481.7 970.4,466.6" fill="#5c931f" stroke="#000" stroke-opacity="0.6" stroke-width="1.0" stroke-linejoin="round"/>
<polygon points="1170.9,358.0 1185.7,371.2 1208.0,363.9 1193.2,353.1" fill="#e45f14" stroke="#000" stroke-opacity="0.6" stroke-width="1.0" stroke-linejoin="round"/>
<polygon points="666.0,630.1 680.9,642.3 703.2,624.7 688.3,614.4" fill="#006e82" stroke="#000" stroke-opacity="0.6" stroke-width="1.0" stroke-linejoin="round"/>
<polygon points="1267.4,360.2 1282.2,367.0 1304.5,360.2 1289.7,353.3" fill="#e45d14" stroke="#000" stroke-opacity="0.6" stroke-width="1.0" stroke-linejoin="round"/>
<polygon points="1052.1,397.2 1066.9,414.2 1089.2,388.7 1074.4,371.9" fill="#dd8613" stroke="#000" stroke-opacity="0.6" stroke-width="1.0" stroke-linejoin="round"/>
<polygon points="866.5,534.5 881.3,548.3 903.6,532.7 888.8,518.9" fill="#258633" stroke="#000" stroke-opacity="0.6" stroke-width="1.0" stroke-linejoin="round"/>
<polygon points="807.1,553.2 821.9,564.9 844.2,549.4 829.4,537.2" fill="#178240" stroke="#000" stroke-opacity="0.6" stroke-width="1.0" stroke-linejoin="round"/>
<polygon points="606.7,636.1 621.5,650.7 643.8,641.8 628.9,627.7" fill="#006685" stroke="#000" stroke-opacity="0.6" stroke-width="1.0" stroke-linejoin="round"/>
<polygon points="925.9,514.5 940.7,528.6 963.0,507.1 948.2,492.4" fill="#3e8c26" stroke="#000" stroke-opacity="0.6" stroke-width="1.0" stroke-linejoin="round"/>
<polygon points="1111.5,367.2 1126.3,384.4 1148.6,367.8 1133.8,352.2" fill="#e46314" stroke="#000" stroke-opacity="0.6" stroke-width="1.0" stroke-linejoin="round"/>
<polygon points="725.4,604.1 740.3,613.9 762.5,591.6 747.7,583.4" fill="#038072" stroke="#000" stroke-opacity="0.6" stroke-width="1.0" stroke-linejoin="round"/>
<polygon points="1029.8,425.2 1044.7,441.9 1066.9,414.2 1052.1,397.2" fill="#cc9d15" stroke="#000" stroke-opacity="0.6" stroke-width="1.0" stroke-linejoin="round"/>
<polygon points="1208.0,363.9 1222.8,373.5 1245.1,366.4 1230.3,358.6" fill="#e46014" stroke="#000" stroke-opacity="0.6" stroke-width="1.0" stroke-linejoin="round"/>
<polygon points="1363.9,346.8 1378.7,350.2 1401.0,342.2 1386.2,338.6" fill="#e14518" stroke="#000" stroke-opacity="0.6" stroke-width="1.0" stroke-linejoin="round"/>
<polygon points="1007.6,453.8 1022.4,469.9 1044.7,441.9 1029.8,425.2" fill="#a39f17" stroke="#000" stroke-opacity="0.6" stroke-width="1.0" stroke-linejoin="round"/>
<polygon points="1304.5,360.2 1319.3,365.5 1341.6,356.2 1326.8,351.3" fill="#e35615" stroke="#000" stroke-opacity="0.6" stroke-width="1.0" stroke-linejoin="round"/>
<polygon points="643.8,641.8 658.6,655.1 680.9,642.3 666.0,630.1" fill="#006685" stroke="#000" stroke-opacity="0.6" stroke-width="1.0" stroke-linejoin="round"/>
<polygon points="784.8,571.2 799.7,582.4 821.9,564.9 807.1,553.2" fill="#10814e" stroke="#000" stroke-opacity="0.6" stroke-width="1.0" stroke-linejoin="round"/>
<polygon points="844.2,549.4 859.0,562.9 881.3,548.3 866.5,534.5" fill="#1c833b" stroke="#000" stroke-opacity="0.6" stroke-width="1.0" stroke-linejoin="round"/>
<polygon points="703.2,624.7 718.0,636.0 740.3,613.9 725.4,604.1" fill="#01777c" stroke="#000" stroke-opacity="0.6" stroke-width="1.0" stroke-linejoin="round"/>
<polygon points="903.6,532.7 918.4,546.5 940.7,528.6 925.9,514.5" fill="#2b872e" stroke="#000" stroke-opacity="0.6" stroke-width="1.0" stroke-linejoin="round"/>
<polygon points="1148.6,367.8 1163.4,383.5 1185.7,371.2 1170.9,358.0" fill="#e46214" stroke="#000" stroke-opacity="0.6" stroke-width="1.0" stroke-linejoin="round"/>
<polygon points="985.3,481.7 1000.1,497.0 1022.4,469.9 1007.6,453.8" fill="#769a1a" stroke="#000" stroke-opacity="0.6" stroke-width="1.0" stroke-linejoin="round"/>
<polygon points="1089.2,388.7 1104.1,406.3 1126.3,384.4 1111.5,367.2" fill="#e07712" stroke="#000" stroke-opacity="0.6" stroke-width="1.0" stroke-linejoin="round"/>
<polygon points="1245.1,366.4 1259.9,373.9 1282.2,367.0 1267.4,360.2" fill="#e45d14" stroke="#000" stroke-opacity="0.6" stroke-width="1.0" stroke-linejoin="round"/>
<polygon points="963.0,507.1 977.8,521.5 1000.1,497.0 985.3,481.7" fill="#519021" stroke="#000" stroke-opacity="0.6" stroke-width="1.0" stroke-linejoin="round"/>
<polygon points="1401.0,342.2 1415.8,345.0 1438.1,338.2 1423.3,334.9" fill="#df371b" stroke="#000" stroke-opacity="0.6" stroke-width="1.0" stroke-linejoin="round"/>
<polygon points="1066.9,414.2 1081.8,431.9 1104.1,406.3 1089.2,388.7" fill="#db9314" stroke="#000" stroke-opacity="0.6" stroke-width="1.0" stroke-linejoin="round"/>
<polygon points="762.5,591.6 777.4,602.8 799.7,582.4 784.8,571.2" fill="#088060" stroke="#000" stroke-opacity="0.6" stroke-width="1.0" stroke-linejoin="round"/>
<polygon points="1185.7,371.2 1200.6,383.4 1222.8,373.5 1208.0,363.9" fill="#e46214" stroke="#000" stroke-opacity="0.6" stroke-width="1.0" stroke-linejoin="round"/>
<polygon points="680.9,642.3 695.7,654.7 718.0,636.0 703.2,624.7" fill="#006c83" stroke="#000" stroke-opacity="0.6" stroke-width="1.0" stroke-linejoin="round"/>
<polygon points="1341.6,356.2 1356.4,359.8 1378.7,350.2 1363.9,346.8" fill="#e24a17" stroke="#000" stroke-opacity="0.6" stroke-width="1.0" stroke-linejoin="round"/>
<polygon points="881.3,548.3 896.2,562.0 918.4,546.5 903.6,532.7" fill="#218437" stroke="#000" stroke-opacity="0.6" stroke-width="1.0" stroke-linejoin="round"/>
<polygon points="621.5,650.7 636.3,664.1 658.6,655.1 643.8,641.8" fill="#006287" stroke="#000" stroke-opacity="0.6" stroke-width="1.0" stroke-linejoin="round"/>
<polygon points="821.9,564.9 836.8,578.2 859.0,562.9 844.2,549.4" fill="#158244" stroke="#000" stroke-opacity="0.6" stroke-width="1.0" stroke-linejoin="round"/>
<polygon points="1126.3,384.4 1141.2,401.3 1163.4,383.5 1148.6,367.8" fill="#e26e12" stroke="#000" stroke-opacity="0.6" stroke-width="1.0" stroke-linejoin="round"/>
<polygon points="1282.2,367.0 1297.1,373.4 1319.3,365.5 1304.5,360.2" fill="#e35915" stroke="#000" stroke-opacity="0.6" stroke-width="1.0" stroke-linejoin="round"/>
<polygon points="1044.7,441.9 1059.5,459.1 1081.8,431.9 1066.9,414.2" fill="#c1a116" stroke="#000" stroke-opacity="0.6" stroke-width="1.0" stroke-linejoin="round"/>
<polygon points="940.7,528.6 955.5,542.4 977.8,521.5 963.0,507.1" fill="#378a29" stroke="#000" stroke-opacity="0.6" stroke-width="1.0" stroke-linejoin="round"/>
<polygon points="740.3,613.9 755.1,625.8 777.4,602.8 762.5,591.6" fill="#028073" stroke="#000" stroke-opacity="0.6" stroke-width="1.0" stroke-linejoin="round"/>
<polygon points="1022.4,469.9 1037.2,486.2 1059.5,459.1 1044.7,441.9" fill="#96a018" stroke="#000" stroke-opacity="0.6" stroke-width="1.0" stroke-linejoin="round"/>
<polygon points="1222.8,373.5 1237.7,382.3 1259.9,373.9 1245.1,366.4" fill="#e45f14" stroke="#000" stroke-opacity="0.6" stroke-width="1.0" stroke-linejoin="round"/>
<polygon points="658.6,655.1 673.4,668.2 695.7,654.7 680.9,642.3" fill="#006387" stroke="#000" stroke-opacity="0.6" stroke-width="1.0" stroke-linejoin="round"/>
<polygon points="1104.1,406.3 1118.9,424.1 1141.2,401.3 1126.3,384.4" fill="#de8413" stroke="#000" stroke-opacity="0.6" stroke-width="1.0" stroke-linejoin="round"/>
<polygon points="799.7,582.4 814.5,595.6 836.8,578.2 821.9,564.9" fill="#0e8153" stroke="#000" stroke-opacity="0.6" stroke-width="1.0" stroke-linejoin="round"/>
<polygon points="859.0,562.9 873.9,576.8 896.2,562.0 881.3,548.3" fill="#18823e" stroke="#000" stroke-opacity="0.6" stroke-width="1.0" stroke-linejoin="round"/>
<polygon points="1000.1,497.0 1014.9,512.5 1037.2,486.2 1022.4,469.9" fill="#6a971c" stroke="#000" stroke-opacity="0.6" stroke-width="1.0" stroke-linejoin="round"/>
<polygon points="918.4,546.5 933.3,560.0 955.5,542.4 940.7,528.6" fill="#278632" stroke="#000" stroke-opacity="0.6" stroke-width="1.0" stroke-linejoin="round"/>
<polygon points="1163.4,383.5 1178.3,397.8 1200.6,383.4 1185.7,371.2" fill="#e36913" stroke="#000" stroke-opacity="0.6" stroke-width="1.0" stroke-linejoin="round"/>
<polygon points="1378.7,350.2 1393.6,353.2 1415.8,345.0 1401.0,342.2" fill="#e0391a" stroke="#000" stroke-opacity="0.6" stroke-width="1.0" stroke-linejoin="round"/>
<polygon points="718.0,636.0 732.8,648.8 755.1,625.8 740.3,613.9" fill="#00757d" stroke="#000" stroke-opacity="0.6" stroke-width="1.0" stroke-linejoin="round"/>
<polygon points="1319.3,365.5 1334.2,370.3 1356.4,359.8 1341.6,356.2" fill="#e25016" stroke="#000" stroke-opacity="0.6" stroke-width="1.0" stroke-linejoin="round"/>
<polygon points="1081.8,431.9 1096.6,449.8 1118.9,424.1 1104.1,406.3" fill="#d19b15" stroke="#000" stroke-opacity="0.6" stroke-width="1.0" stroke-linejoin="round"/>
<polygon points="977.8,521.5 992.7,536.2 1014.9,512.5 1000.1,497.0" fill="#488d23" stroke="#000" stroke-opacity="0.6" stroke-width="1.0" stroke-linejoin="round"/>
<polygon points="1259.9,373.9 1274.8,381.5 1297.1,373.4 1282.2,367.0" fill="#e35b15" stroke="#000" stroke-opacity="0.6" stroke-width="1.0" stroke-linejoin="round"/>
<polygon points="777.4,602.8 792.2,615.9 814.5,595.6 799.7,582.4" fill="#078063" stroke="#000" stroke-opacity="0.6" stroke-width="1.0" stroke-linejoin="round"/>
<polygon points="695.7,654.7 710.5,668.3 732.8,648.8 718.0,636.0" fill="#006984" stroke="#000" stroke-opacity="0.6" stroke-width="1.0" stroke-linejoin="round"/>
<polygon points="896.2,562.0 911.0,575.6 933.3,560.0 918.4,546.5" fill="#1c833b" stroke="#000" stroke-opacity="0.6" stroke-width="1.0" stroke-linejoin="round"/>
<polygon points="1200.6,383.4 1215.4,394.1 1237.7,382.3 1222.8,373.5" fill="#e46314" stroke="#000" stroke-opacity="0.6" stroke-width="1.0" stroke-linejoin="round"/>
<polygon points="1059.5,459.1 1074.3,476.5 1096.6,449.8 1081.8,431.9" fill="#ad9e16" stroke="#000" stroke-opacity="0.6" stroke-width="1.0" stroke-linejoin="round"/>
<polygon points="1141.2,401.3 1156.0,417.4 1178.3,397.8 1163.4,383.5" fill="#e07912" stroke="#000" stroke-opacity="0.6" stroke-width="1.0" stroke-linejoin="round"/>
<polygon points="836.8,578.2 851.6,592.1 873.9,576.8 859.0,562.9" fill="#12814a" stroke="#000" stroke-opacity="0.6" stroke-width="1.0" stroke-linejoin="round"/>
<polygon points="636.3,664.1 651.2,677.6 673.4,668.2 658.6,655.1" fill="#005f88" stroke="#000" stroke-opacity="0.6" stroke-width="1.0" stroke-linejoin="round"/>
<polygon points="955.5,542.4 970.4,556.4 992.7,536.2 977.8,521.5" fill="#30882b" stroke="#000" stroke-opacity="0.6" stroke-width="1.0" stroke-linejoin="round"/>
<polygon points="1415.8,345.0 1430.7,348.1 1452.9,341.5 1438.1,338.2" fill="#de2c1c" stroke="#000" stroke-opacity="0.6" stroke-width="1.0" stroke-linejoin="round"/>
<polygon points="1037.2,486.2 1052.0,503.0 1074.3,476.5 1059.5,459.1" fill="#859d19" stroke="#000" stroke-opacity="0.6" stroke-width="1.0" stroke-linejoin="round"/>
<polygon points="1356.4,359.8 1371.3,363.5 1393.6,353.2 1378.7,350.2" fill="#e03f19" stroke="#000" stroke-opacity="0.6" stroke-width="1.0" stroke-linejoin="round"/>
<polygon points="1297.1,373.4 1311.9,380.1 1334.2,370.3 1319.3,365.5" fill="#e35415" stroke="#000" stroke-opacity="0.6" stroke-width="1.0" stroke-linejoin="round"/>
<polygon points="755.1,625.8 769.9,639.1 792.2,615.9 777.4,602.8" fill="#027e75" stroke="#000" stroke-opacity="0.6" stroke-width="1.0" stroke-linejoin="round"/>
<polygon points="1118.9,424.1 1133.7,441.2 1156.0,417.4 1141.2,401.3" fill="#db9014" stroke="#000" stroke-opacity="0.6" stroke-width="1.0" stroke-linejoin="round"/>
<polygon points="673.4,668.2 688.3,682.4 710.5,668.3 695.7,654.7" fill="#006088" stroke="#000" stroke-opacity="0.6" stroke-width="1.0" stroke-linejoin="round"/>
<polygon points="1014.9,512.5 1029.8,528.4 1052.0,503.0 1037.2,486.2" fill="#5d931e" stroke="#000" stroke-opacity="0.6" stroke-width="1.0" stroke-linejoin="round"/>
<polygon points="1237.7,382.3 1252.5,391.3 1274.8,381.5 1259.9,373.9" fill="#e45d14" stroke="#000" stroke-opacity="0.6" stroke-width="1.0" stroke-linejoin="round"/>
<polygon points="873.9,576.8 888.7,590.2 911.0,575.6 896.2,562.0" fill="#158244" stroke="#000" stroke-opacity="0.6" stroke-width="1.0" stroke-linejoin="round"/>
<polygon points="814.5,595.6 829.3,609.5 851.6,592.1 836.8,578.2" fill="#0b8058" stroke="#000" stroke-opacity="0.6" stroke-width="1.0" stroke-linejoin="round"/>
<polygon points="933.3,560.0 948.1,573.4 970.4,556.4 955.5,542.4" fill="#228536" stroke="#000" stroke-opacity="0.6" stroke-width="1.0" stroke-linejoin="round"/>
<polygon points="1178.3,397.8 1193.1,410.6 1215.4,394.1 1200.6,383.4" fill="#e26e12" stroke="#000" stroke-opacity="0.6" stroke-width="1.0" stroke-linejoin="round"/>
<polygon points="732.8,648.8 747.7,662.5 769.9,639.1 755.1,625.8" fill="#007280" stroke="#000" stroke-opacity="0.6" stroke-width="1.0" stroke-linejoin="round"/>
<polygon points="1096.6,449.8 1111.4,467.2 1133.7,441.2 1118.9,424.1" fill="#c7a116" stroke="#000" stroke-opacity="0.6" stroke-width="1.0" stroke-linejoin="round"/>
<polygon points="992.7,536.2 1007.5,551.3 1029.8,528.4 1014.9,512.5" fill="#3f8c26" stroke="#000" stroke-opacity="0.6" stroke-width="1.0" stroke-linejoin="round"/>
<polygon points="1393.6,353.2 1408.4,356.9 1430.7,348.1 1415.8,345.0" fill="#de2f1c" stroke="#000" stroke-opacity="0.6" stroke-width="1.0" stroke-linejoin="round"/>
<polygon points="1334.2,370.3 1349.0,375.6 1371.3,363.5 1356.4,359.8" fill="#e14717" stroke="#000" stroke-opacity="0.6" stroke-width="1.0" stroke-linejoin="round"/>
<polygon points="1074.3,476.5 1089.2,493.7 1111.4,467.2 1096.6,449.8" fill="#9f9f17" stroke="#000" stroke-opacity="0.6" stroke-width="1.0" stroke-linejoin="round"/>
<polygon points="792.2,615.9 807.0,629.9 829.3,609.5 814.5,595.6" fill="#058069" stroke="#000" stroke-opacity="0.6" stroke-width="1.0" stroke-linejoin="round"/>
<polygon points="710.5,668.3 725.4,682.8 747.7,662.5 732.8,648.8" fill="#006486" stroke="#000" stroke-opacity="0.6" stroke-width="1.0" stroke-linejoin="round"/>
<polygon points="1274.8,381.5 1289.6,390.2 1311.9,380.1 1297.1,373.4" fill="#e35815" stroke="#000" stroke-opacity="0.6" stroke-width="1.0" stroke-linejoin="round"/>
<polygon points="911.0,575.6 925.8,588.8 948.1,573.4 933.3,560.0" fill="#18823e" stroke="#000" stroke-opacity="0.6" stroke-width="1.0" stroke-linejoin="round"/>
<polygon points="1156.0,417.4 1170.8,432.1 1193.1,410.6 1178.3,397.8" fill="#de8113" stroke="#000" stroke-opacity="0.6" stroke-width="1.0" stroke-linejoin="round"/>
<polygon points="651.2,677.6 666.0,691.7 688.3,682.4 673.4,668.2" fill="#005c89" stroke="#000" stroke-opacity="0.6" stroke-width="1.0" stroke-linejoin="round"/>
<polygon points="851.6,592.1 866.4,605.6 888.7,590.2 873.9,576.8" fill="#0f8151" stroke="#000" stroke-opacity="0.6" stroke-width="1.0" stroke-linejoin="round"/>
<polygon points="970.4,556.4 985.2,571.0 1007.5,551.3 992.7,536.2" fill="#2a872f" stroke="#000" stroke-opacity="0.6" stroke-width="1.0" stroke-linejoin="round"/>
<polygon points="1215.4,394.1 1230.2,404.4 1252.5,391.3 1237.7,382.3" fill="#e36413" stroke="#000" stroke-opacity="0.6" stroke-width="1.0" stroke-linejoin="round"/>
<polygon points="1052.0,503.0 1066.9,519.8 1089.2,493.7 1074.3,476.5" fill="#74991a" stroke="#000" stroke-opacity="0.6" stroke-width="1.0" stroke-linejoin="round"/>
<polygon points="769.9,639.1 784.8,653.1 807.0,629.9 792.2,615.9" fill="#017b78" stroke="#000" stroke-opacity="0.6" stroke-width="1.0" stroke-linejoin="round"/>
<polygon points="1133.7,441.2 1148.5,457.3 1170.8,432.1 1156.0,417.4" fill="#d69814" stroke="#000" stroke-opacity="0.6" stroke-width="1.0" stroke-linejoin="round"/>
<polygon points="1430.7,348.1 1445.5,353.4 1467.8,346.0 1452.9,341.5" fill="#dc231e" stroke="#000" stroke-opacity="0.6" stroke-width="1.0" stroke-linejoin="round"/>
<polygon points="1029.8,528.4 1044.6,544.7 1066.9,519.8 1052.0,503.0" fill="#509021" stroke="#000" stroke-opacity="0.6" stroke-width="1.0" stroke-linejoin="round"/>
<polygon points="688.3,682.4 703.1,697.4 725.4,682.8 710.5,668.3" fill="#005c89" stroke="#000" stroke-opacity="0.6" stroke-width="1.0" stroke-linejoin="round"/>
<polygon points="1311.9,380.1 1326.7,388.1 1349.0,375.6 1334.2,370.3" fill="#e25016" stroke="#000" stroke-opacity="0.6" stroke-width="1.0" stroke-linejoin="round"/>
<polygon points="1371.3,363.5 1386.1,368.2 1408.4,356.9 1393.6,353.2" fill="#df351b" stroke="#000" stroke-opacity="0.6" stroke-width="1.0" stroke-linejoin="round"/>
<polygon points="948.1,573.4 962.9,587.6 985.2,571.0 970.4,556.4" fill="#1e8439" stroke="#000" stroke-opacity="0.6" stroke-width="1.0" stroke-linejoin="round"/>
<polygon points="829.3,609.5 844.2,623.1 866.4,605.6 851.6,592.1" fill="#09805e" stroke="#000" stroke-opacity="0.6" stroke-width="1.0" stroke-linejoin="round"/>
<polygon points="888.7,590.2 903.5,603.4 925.8,588.8 911.0,575.6" fill="#12814a" stroke="#000" stroke-opacity="0.6" stroke-width="1.0" stroke-linejoin="round"/>
<polygon points="747.7,662.5 762.5,676.7 784.8,653.1 769.9,639.1" fill="#006e82" stroke="#000" stroke-opacity="0.6" stroke-width="1.0" stroke-linejoin="round"/>
<polygon points="1111.4,467.2 1126.3,483.7 1148.5,457.3 1133.7,441.2" fill="#b7a016" stroke="#000" stroke-opacity="0.6" stroke-width="1.0" stroke-linejoin="round"/>
<polygon points="1252.5,391.3 1267.3,401.6 1289.6,390.2 1274.8,381.5" fill="#e45d14" stroke="#000" stroke-opacity="0.6" stroke-width="1.0" stroke-linejoin="round"/>
<polygon points="1193.1,410.6 1207.9,422.4 1230.2,404.4 1215.4,394.1" fill="#e27212" stroke="#000" stroke-opacity="0.6" stroke-width="1.0" stroke-linejoin="round"/>
<polygon points="1007.5,551.3 1022.3,567.5 1044.6,544.7 1029.8,528.4" fill="#35892a" stroke="#000" stroke-opacity="0.6" stroke-width="1.0" stroke-linejoin="round"/>
<polygon points="1089.2,493.7 1104.0,510.3 1126.3,483.7 1111.4,467.2" fill="#909f18" stroke="#000" stroke-opacity="0.6" stroke-width="1.0" stroke-linejoin="round"/>
<polygon points="807.0,629.9 821.9,643.8 844.2,623.1 829.3,609.5" fill="#04806f" stroke="#000" stroke-opacity="0.6" stroke-width="1.0" stroke-linejoin="round"/>
<polygon points="725.4,682.8 740.2,697.3 762.5,676.7 747.7,662.5" fill="#006087" stroke="#000" stroke-opacity="0.6" stroke-width="1.0" stroke-linejoin="round"/>
<polygon points="925.8,588.8 940.7,602.4 962.9,587.6 948.1,573.4" fill="#158244" stroke="#000" stroke-opacity="0.6" stroke-width="1.0" stroke-linejoin="round"/>
<polygon points="666.0,691.7 680.8,706.7 703.1,697.4 688.3,682.4" fill="#01588a" stroke="#000" stroke-opacity="0.6" stroke-width="1.0" stroke-linejoin="round"/>
<polygon points="1170.8,432.1 1185.7,445.7 1207.9,422.4 1193.1,410.6" fill="#dd8713" stroke="#000" stroke-opacity="0.6" stroke-width="1.0" stroke-linejoin="round"/>
<polygon points="985.2,571.0 1000.0,587.0 1022.3,567.5 1007.5,551.3" fill="#248535" stroke="#000" stroke-opacity="0.6" stroke-width="1.0" stroke-linejoin="round"/>
<polygon points="866.4,605.6 881.3,618.8 903.5,603.4 888.7,590.2" fill="#0c8056" stroke="#000" stroke-opacity="0.6" stroke-width="1.0" stroke-linejoin="round"/>
<polygon points="1408.4,356.9 1423.2,362.5 1445.5,353.4 1430.7,348.1" fill="#dd261d" stroke="#000" stroke-opacity="0.6" stroke-width="1.0" stroke-linejoin="round"/>
<polygon points="1066.9,519.8 1081.7,536.4 1104.0,510.3 1089.2,493.7" fill="#66961d" stroke="#000" stroke-opacity="0.6" stroke-width="1.0" stroke-linejoin="round"/>
<polygon points="1349.0,375.6 1363.8,382.2 1386.1,368.2 1371.3,363.5" fill="#e13f19" stroke="#000" stroke-opacity="0.6" stroke-width="1.0" stroke-linejoin="round"/>
<polygon points="1289.6,390.2 1304.4,401.0 1326.7,388.1 1311.9,380.1" fill="#e35715" stroke="#000" stroke-opacity="0.6" stroke-width="1.0" stroke-linejoin="round"/>
<polygon points="1230.2,404.4 1245.0,416.0 1267.3,401.6 1252.5,391.3" fill="#e36613" stroke="#000" stroke-opacity="0.6" stroke-width="1.0" stroke-linejoin="round"/>
<polygon points="784.8,653.1 799.6,667.1 821.9,643.8 807.0,629.9" fill="#01787b" stroke="#000" stroke-opacity="0.6" stroke-width="1.0" stroke-linejoin="round"/>
<polygon points="1148.5,457.3 1163.4,472.2 1185.7,445.7 1170.8,432.1" fill="#cf9c15" stroke="#000" stroke-opacity="0.6" stroke-width="1.0" stroke-linejoin="round"/>
<polygon points="1044.6,544.7 1059.4,561.5 1081.7,536.4 1066.9,519.8" fill="#448d24" stroke="#000" stroke-opacity="0.6" stroke-width="1.0" stroke-linejoin="round"/>
<polygon points="703.1,697.4 717.9,712.3 740.2,697.3 725.4,682.8" fill="#01588a" stroke="#000" stroke-opacity="0.6" stroke-width="1.0" stroke-linejoin="round"/>
<polygon points="962.9,587.6 977.8,603.6 1000.0,587.0 985.2,571.0" fill="#18823f" stroke="#000" stroke-opacity="0.6" stroke-width="1.0" stroke-linejoin="round"/>
<polygon points="844.2,623.1 859.0,636.6 881.3,618.8 866.4,605.6" fill="#078064" stroke="#000" stroke-opacity="0.6" stroke-width="1.0" stroke-linejoin="round"/>
<polygon points="903.5,603.4 918.4,616.9 940.7,602.4 925.8,588.8" fill="#0f8150" stroke="#000" stroke-opacity="0.6" stroke-width="1.0" stroke-linejoin="round"/>
<polygon points="1126.3,483.7 1141.1,499.3 1163.4,472.2 1148.5,457.3" fill="#a99e16" stroke="#000" stroke-opacity="0.6" stroke-width="1.0" stroke-linejoin="round"/>
<polygon points="1445.5,353.4 1460.3,361.2 1482.6,353.4 1467.8,346.0" fill="#dc1f1e" stroke="#000" stroke-opacity="0.6" stroke-width="1.0" stroke-linejoin="round"/>
<polygon points="762.5,676.7 777.3,690.8 799.6,667.1 784.8,653.1" fill="#006a83" stroke="#000" stroke-opacity="0.6" stroke-width="1.0" stroke-linejoin="round"/>
<polygon points="1022.3,567.5 1037.2,584.7 1059.4,561.5 1044.6,544.7" fill="#2b872e" stroke="#000" stroke-opacity="0.6" stroke-width="1.0" stroke-linejoin="round"/>
<polygon points="1326.7,388.1 1341.5,397.8 1363.8,382.2 1349.0,375.6" fill="#e24e16" stroke="#000" stroke-opacity="0.6" stroke-width="1.0" stroke-linejoin="round"/>
<polygon points="1267.3,401.6 1282.2,414.7 1304.4,401.0 1289.6,390.2" fill="#e45f14" stroke="#000" stroke-opacity="0.6" stroke-width="1.0" stroke-linejoin="round"/>
<polygon points="1207.9,422.4 1222.8,435.5 1245.0,416.0 1230.2,404.4" fill="#e17612" stroke="#000" stroke-opacity="0.6" stroke-width="1.0" stroke-linejoin="round"/>
<polygon points="1386.1,368.2 1400.9,374.8 1423.2,362.5 1408.4,356.9" fill="#de2d1c" stroke="#000" stroke-opacity="0.6" stroke-width="1.0" stroke-linejoin="round"/>
<polygon points="1104.0,510.3 1118.8,526.2 1141.1,499.3 1126.3,483.7" fill="#809c19" stroke="#000" stroke-opacity="0.6" stroke-width="1.0" stroke-linejoin="round"/>
<polygon points="740.2,697.3 755.0,711.3 777.3,690.8 762.5,676.7" fill="#005d89" stroke="#000" stroke-opacity="0.6" stroke-width="1.0" stroke-linejoin="round"/>
<polygon points="821.9,643.8 836.7,657.6 859.0,636.6 844.2,623.1" fill="#028074" stroke="#000" stroke-opacity="0.6" stroke-width="1.0" stroke-linejoin="round"/>
<polygon points="1000.0,587.0 1014.9,604.9 1037.2,584.7 1022.3,567.5" fill="#1c833b" stroke="#000" stroke-opacity="0.6" stroke-width="1.0" stroke-linejoin="round"/>
<polygon points="680.8,706.7 695.7,722.0 717.9,712.3 703.1,697.4" fill="#01548b" stroke="#000" stroke-opacity="0.6" stroke-width="1.0" stroke-linejoin="round"/>
<polygon points="940.7,602.4 955.5,618.0 977.8,603.6 962.9,587.6" fill="#11814b" stroke="#000" stroke-opacity="0.6" stroke-width="1.0" stroke-linejoin="round"/>
<polygon points="1081.7,536.4 1096.5,552.7 1118.8,526.2 1104.0,510.3" fill="#59921f" stroke="#000" stroke-opacity="0.6" stroke-width="1.0" stroke-linejoin="round"/>
<polygon points="1185.7,445.7 1200.5,460.2 1222.8,435.5 1207.9,422.4" fill="#dc8e14" stroke="#000" stroke-opacity="0.6" stroke-width="1.0" stroke-linejoin="round"/>
<polygon points="881.3,618.8 896.1,632.5 918.4,616.9 903.5,603.4" fill="#09805c" stroke="#000" stroke-opacity="0.6" stroke-width="1.0" stroke-linejoin="round"/>
<polygon points="1304.4,401.0 1319.3,414.5 1341.5,397.8 1326.7,388.1" fill="#e35915" stroke="#000" stroke-opacity="0.6" stroke-width="1.0" stroke-linejoin="round"/>
<polygon points="1245.0,416.0 1259.9,431.4 1282.2,414.7 1267.3,401.6" fill="#e36b13" stroke="#000" stroke-opacity="0.6" stroke-width="1.0" stroke-linejoin="round"/>
<polygon points="1423.2,362.5 1438.0,370.5 1460.3,361.2 1445.5,353.4" fill="#dc221e" stroke="#000" stroke-opacity="0.6" stroke-width="1.0" stroke-linejoin="round"/>
<polygon points="1059.4,561.5 1074.3,578.3 1096.5,552.7 1081.7,536.4" fill="#3a8a28" stroke="#000" stroke-opacity="0.6" stroke-width="1.0" stroke-linejoin="round"/>
<polygon points="1363.8,382.2 1378.7,390.7 1400.9,374.8 1386.1,368.2" fill="#e03a1a" stroke="#000" stroke-opacity="0.6" stroke-width="1.0" stroke-linejoin="round"/>
<polygon points="799.6,667.1 814.4,681.1 836.7,657.6 821.9,643.8" fill="#00757e" stroke="#000" stroke-opacity="0.6" stroke-width="1.0" stroke-linejoin="round"/>
<polygon points="1163.4,472.2 1178.2,487.5 1200.5,460.2 1185.7,445.7" fill="#c8a016" stroke="#000" stroke-opacity="0.6" stroke-width="1.0" stroke-linejoin="round"/>
<polygon points="717.9,712.3 732.8,726.1 755.0,711.3 740.2,697.3" fill="#01558b" stroke="#000" stroke-opacity="0.6" stroke-width="1.0" stroke-linejoin="round"/>
<polygon points="977.8,603.6 992.6,622.1 1014.9,604.9 1000.0,587.0" fill="#128149" stroke="#000" stroke-opacity="0.6" stroke-width="1.0" stroke-linejoin="round"/>
<polygon points="1141.1,499.3 1155.9,515.0 1178.2,487.5 1163.4,472.2" fill="#9e9f17" stroke="#000" stroke-opacity="0.6" stroke-width="1.0" stroke-linejoin="round"/>
<polygon points="918.4,616.9 933.2,632.4 955.5,618.0 940.7,602.4" fill="#0c8057" stroke="#000" stroke-opacity="0.6" stroke-width="1.0" stroke-linejoin="round"/>
<polygon points="1037.2,584.7 1052.0,602.6 1074.3,578.3 1059.4,561.5" fill="#238535" stroke="#000" stroke-opacity="0.6" stroke-width="1.0" stroke-linejoin="round"/>
<polygon points="859.0,636.6 873.8,650.5 896.1,632.5 881.3,618.8" fill="#058069" stroke="#000" stroke-opacity="0.6" stroke-width="1.0" stroke-linejoin="round"/>
<polygon points="777.3,690.8 792.2,704.3 814.4,681.1 799.6,667.1" fill="#006685" stroke="#000" stroke-opacity="0.6" stroke-width="1.0" stroke-linejoin="round"/>
<polygon points="1222.8,435.5 1237.6,452.6 1259.9,431.4 1245.0,416.0" fill="#df7e13" stroke="#000" stroke-opacity="0.6" stroke-width="1.0" stroke-linejoin="round"/>
<polygon points="1460.3,361.2 1475.2,371.9 1497.4,363.8 1482.6,353.4" fill="#dc1f1e" stroke="#000" stroke-opacity="0.6" stroke-width="1.0" stroke-linejoin="round"/>
<polygon points="1282.2,414.7 1297.0,431.9 1319.3,414.5 1304.4,401.0" fill="#e36513" stroke="#000" stroke-opacity="0.6" stroke-width="1.0" stroke-linejoin="round"/>
<polygon points="1118.8,526.2 1133.7,542.4 1155.9,515.0 1141.1,499.3" fill="#72991b" stroke="#000" stroke-opacity="0.6" stroke-width="1.0" stroke-linejoin="round"/>
<polygon points="1341.5,397.8 1356.4,409.5 1378.7,390.7 1363.8,382.2" fill="#e24d16" stroke="#000" stroke-opacity="0.6" stroke-width="1.0" stroke-linejoin="round"/>
<polygon points="1014.9,604.9 1029.7,624.3 1052.0,602.6 1037.2,584.7" fill="#158245" stroke="#000" stroke-opacity="0.6" stroke-width="1.0" stroke-linejoin="round"/>
<polygon points="1400.9,374.8 1415.8,383.5 1438.0,370.5 1423.2,362.5" fill="#dd2a1d" stroke="#000" stroke-opacity="0.6" stroke-width="1.0" stroke-linejoin="round"/>
<polygon points="955.5,618.0 970.3,636.7 992.6,622.1 977.8,603.6" fill="#0c8056" stroke="#000" stroke-opacity="0.6" stroke-width="1.0" stroke-linejoin="round"/>
<polygon points="755.0,711.3 769.9,724.4 792.2,704.3 777.3,690.8" fill="#015a89" stroke="#000" stroke-opacity="0.6" stroke-width="1.0" stroke-linejoin="round"/>
<polygon points="1096.5,552.7 1111.4,568.9 1133.7,542.4 1118.8,526.2" fill="#4d8f21" stroke="#000" stroke-opacity="0.6" stroke-width="1.0" stroke-linejoin="round"/>
<polygon points="836.7,657.6 851.5,671.4 873.8,650.5 859.0,636.6" fill="#027d77" stroke="#000" stroke-opacity="0.6" stroke-width="1.0" stroke-linejoin="round"/>
<polygon points="695.7,722.0 710.5,736.2 732.8,726.1 717.9,712.3" fill="#025089" stroke="#000" stroke-opacity="0.6" stroke-width="1.0" stroke-linejoin="round"/>
<polygon points="1200.5,460.2 1215.3,478.0 1237.6,452.6 1222.8,435.5" fill="#d89714" stroke="#000" stroke-opacity="0.6" stroke-width="1.0" stroke-linejoin="round"/>
<polygon points="896.1,632.5 910.9,647.8 933.2,632.4 918.4,616.9" fill="#078062" stroke="#000" stroke-opacity="0.6" stroke-width="1.0" stroke-linejoin="round"/>
<polygon points="1259.9,431.4 1274.7,451.6 1297.0,431.9 1282.2,414.7" fill="#e17612" stroke="#000" stroke-opacity="0.6" stroke-width="1.0" stroke-linejoin="round"/>
<polygon points="1074.3,578.3 1089.1,595.0 1111.4,568.9 1096.5,552.7" fill="#2f882c" stroke="#000" stroke-opacity="0.6" stroke-width="1.0" stroke-linejoin="round"/>
<polygon points="1319.3,414.5 1334.1,430.3 1356.4,409.5 1341.5,397.8" fill="#e45d14" stroke="#000" stroke-opacity="0.6" stroke-width="1.0" stroke-linejoin="round"/>
<polygon points="1178.2,487.5 1193.0,505.6 1215.3,478.0 1200.5,460.2" fill="#baa016" stroke="#000" stroke-opacity="0.6" stroke-width="1.0" stroke-linejoin="round"/>
<polygon points="992.6,622.1 1007.4,642.5 1029.7,624.3 1014.9,604.9" fill="#0c8057" stroke="#000" stroke-opacity="0.6" stroke-width="1.0" stroke-linejoin="round"/>
<polygon points="814.4,681.1 829.3,694.7 851.5,671.4 836.7,657.6" fill="#007180" stroke="#000" stroke-opacity="0.6" stroke-width="1.0" stroke-linejoin="round"/>
<polygon points="1438.0,370.5 1452.9,381.6 1475.2,371.9 1460.3,361.2" fill="#dc221e" stroke="#000" stroke-opacity="0.6" stroke-width="1.0" stroke-linejoin="round"/>
<polygon points="732.8,726.1 747.6,738.8 769.9,724.4 755.0,711.3" fill="#02518a" stroke="#000" stroke-opacity="0.6" stroke-width="1.0" stroke-linejoin="round"/>
<polygon points="1378.7,390.7 1393.5,400.9 1415.8,383.5 1400.9,374.8" fill="#e0391a" stroke="#000" stroke-opacity="0.6" stroke-width="1.0" stroke-linejoin="round"/>
<polygon points="1155.9,515.0 1170.8,533.4 1193.0,505.6 1178.2,487.5" fill="#909f18" stroke="#000" stroke-opacity="0.6" stroke-width="1.0" stroke-linejoin="round"/>
<polygon points="1052.0,602.6 1066.8,620.7 1089.1,595.0 1074.3,578.3" fill="#1b833b" stroke="#000" stroke-opacity="0.6" stroke-width="1.0" stroke-linejoin="round"/>
<polygon points="933.2,632.4 948.0,650.8 970.3,636.7 955.5,618.0" fill="#088061" stroke="#000" stroke-opacity="0.6" stroke-width="1.0" stroke-linejoin="round"/>
<polygon points="873.8,650.5 888.7,665.6 910.9,647.8 896.1,632.5" fill="#038070" stroke="#000" stroke-opacity="0.6" stroke-width="1.0" stroke-linejoin="round"/>
<polygon points="1237.6,452.6 1252.4,474.9 1274.7,451.6 1259.9,431.4" fill="#dc8d14" stroke="#000" stroke-opacity="0.6" stroke-width="1.0" stroke-linejoin="round"/>
<polygon points="792.2,704.3 807.0,717.4 829.3,694.7 814.4,681.1" fill="#006287" stroke="#000" stroke-opacity="0.6" stroke-width="1.0" stroke-linejoin="round"/>
<polygon points="1297.0,431.9 1311.8,452.2 1334.1,430.3 1319.3,414.5" fill="#e27112" stroke="#000" stroke-opacity="0.6" stroke-width="1.0" stroke-linejoin="round"/>
<polygon points="1133.7,542.4 1148.5,561.0 1170.8,533.4 1155.9,515.0" fill="#64951d" stroke="#000" stroke-opacity="0.6" stroke-width="1.0" stroke-linejoin="round"/>
<polygon points="1475.2,371.9 1490.0,385.8 1512.3,377.7 1497.4,363.8" fill="#dc221e" stroke="#000" stroke-opacity="0.6" stroke-width="1.0" stroke-linejoin="round"/>
<polygon points="1029.7,624.3 1044.5,643.8 1066.8,620.7 1052.0,602.6" fill="#0e8152" stroke="#000" stroke-opacity="0.6" stroke-width="1.0" stroke-linejoin="round"/>
<polygon points="970.3,636.7 985.2,657.7 1007.4,642.5 992.6,622.1" fill="#078064" stroke="#000" stroke-opacity="0.6" stroke-width="1.0" stroke-linejoin="round"/>
<polygon points="1356.4,409.5 1371.2,422.4 1393.5,400.9 1378.7,390.7" fill="#e25016" stroke="#000" stroke-opacity="0.6" stroke-width="1.0" stroke-linejoin="round"/>
<polygon points="1215.3,478.0 1230.2,501.0 1252.4,474.9 1237.6,452.6" fill="#cb9e15" stroke="#000" stroke-opacity="0.6" stroke-width="1.0" stroke-linejoin="round"/>
<polygon points="1111.4,568.9 1126.2,587.3 1148.5,561.0 1133.7,542.4" fill="#408c25" stroke="#000" stroke-opacity="0.6" stroke-width="1.0" stroke-linejoin="round"/>
<polygon points="851.5,671.4 866.4,686.3 888.7,665.6 873.8,650.5" fill="#01797a" stroke="#000" stroke-opacity="0.6" stroke-width="1.0" stroke-linejoin="round"/>
<polygon points="769.9,724.4 784.7,736.7 807.0,717.4 792.2,704.3" fill="#01578a" stroke="#000" stroke-opacity="0.6" stroke-width="1.0" stroke-linejoin="round"/>
<polygon points="910.9,647.8 925.8,666.2 948.0,650.8 933.2,632.4" fill="#04806c" stroke="#000" stroke-opacity="0.6" stroke-width="1.0" stroke-linejoin="round"/>
<polygon points="1415.8,383.5 1430.6,395.0 1452.9,381.6 1438.0,370.5" fill="#dd2b1d" stroke="#000" stroke-opacity="0.6" stroke-width="1.0" stroke-linejoin="round"/>
<polygon points="710.5,736.2 725.3,749.0 747.6,738.8 732.8,726.1" fill="#034c88" stroke="#000" stroke-opacity="0.6" stroke-width="1.0" stroke-linejoin="round"/>
<polygon points="1274.7,451.6 1289.5,475.9 1311.8,452.2 1297.0,431.9" fill="#dd8813" stroke="#000" stroke-opacity="0.6" stroke-width="1.0" stroke-linejoin="round"/>
<polygon points="1193.0,505.6 1207.9,528.5 1230.2,501.0 1215.3,478.0" fill="#a39f17" stroke="#000" stroke-opacity="0.6" stroke-width="1.0" stroke-linejoin="round"/>
<polygon points="1089.1,595.0 1103.9,612.9 1126.2,587.3 1111.4,568.9" fill="#268632" stroke="#000" stroke-opacity="0.6" stroke-width="1.0" stroke-linejoin="round"/>
<polygon points="1007.4,642.5 1022.3,663.3 1044.5,643.8 1029.7,624.3" fill="#078065" stroke="#000" stroke-opacity="0.6" stroke-width="1.0" stroke-linejoin="round"/>
<polygon points="1334.1,430.3 1348.9,446.8 1371.2,422.4 1356.4,409.5" fill="#e36413" stroke="#000" stroke-opacity="0.6" stroke-width="1.0" stroke-linejoin="round"/>
<polygon points="1170.8,533.4 1185.6,556.3 1207.9,528.5 1193.0,505.6" fill="#769a1a" stroke="#000" stroke-opacity="0.6" stroke-width="1.0" stroke-linejoin="round"/>
<polygon points="829.3,694.7 844.1,708.6 866.4,686.3 851.5,671.4" fill="#006d82" stroke="#000" stroke-opacity="0.6" stroke-width="1.0" stroke-linejoin="round"/>
<polygon points="948.0,650.8 962.9,672.0 985.2,657.7 970.3,636.7" fill="#04806f" stroke="#000" stroke-opacity="0.6" stroke-width="1.0" stroke-linejoin="round"/>
<polygon points="1252.4,474.9 1267.3,501.8 1289.5,475.9 1274.7,451.6" fill="#cf9c15" stroke="#000" stroke-opacity="0.6" stroke-width="1.0" stroke-linejoin="round"/>
<polygon points="1066.8,620.7 1081.7,639.0 1103.9,612.9 1089.1,595.0" fill="#148145" stroke="#000" stroke-opacity="0.6" stroke-width="1.0" stroke-linejoin="round"/>
<polygon points="1452.9,381.6 1467.7,395.5 1490.0,385.8 1475.2,371.9" fill="#dd271d" stroke="#000" stroke-opacity="0.6" stroke-width="1.0" stroke-linejoin="round"/>
<polygon points="747.6,738.8 762.4,750.8 784.7,736.7 769.9,724.4" fill="#034f89" stroke="#000" stroke-opacity="0.6" stroke-width="1.0" stroke-linejoin="round"/>
<polygon points="888.7,665.6 903.5,683.2 925.8,666.2 910.9,647.8" fill="#027d76" stroke="#000" stroke-opacity="0.6" stroke-width="1.0" stroke-linejoin="round"/>
<polygon points="1148.5,561.0 1163.3,583.2 1185.6,556.3 1170.8,533.4" fill="#4f8f21" stroke="#000" stroke-opacity="0.6" stroke-width="1.0" stroke-linejoin="round"/>
<polygon points="1393.5,400.9 1408.3,413.3 1430.6,395.0 1415.8,383.5" fill="#e03b1a" stroke="#000" stroke-opacity="0.6" stroke-width="1.0" stroke-linejoin="round"/>
<polygon points="1311.8,452.2 1326.7,473.1 1348.9,446.8 1334.1,430.3" fill="#df8013" stroke="#000" stroke-opacity="0.6" stroke-width="1.0" stroke-linejoin="round"/>
<polygon points="1230.2,501.0 1245.0,528.9 1267.3,501.8 1252.4,474.9" fill="#ab9e16" stroke="#000" stroke-opacity="0.6" stroke-width="1.0" stroke-linejoin="round"/>
<polygon points="985.2,657.7 1000.0,679.6 1022.3,663.3 1007.4,642.5" fill="#028073" stroke="#000" stroke-opacity="0.6" stroke-width="1.0" stroke-linejoin="round"/>
<polygon points="807.0,717.4 821.8,730.5 844.1,708.6 829.3,694.7" fill="#005f88" stroke="#000" stroke-opacity="0.6" stroke-width="1.0" stroke-linejoin="round"/>
<polygon points="1044.5,643.8 1059.4,663.0 1081.7,639.0 1066.8,620.7" fill="#09805e" stroke="#000" stroke-opacity="0.6" stroke-width="1.0" stroke-linejoin="round"/>
<polygon points="1490.0,385.8 1504.8,401.4 1527.1,394.0 1512.3,377.7" fill="#de2c1c" stroke="#000" stroke-opacity="0.6" stroke-width="1.0" stroke-linejoin="round"/>
<polygon points="1126.2,587.3 1141.0,608.4 1163.3,583.2 1148.5,561.0" fill="#30892b" stroke="#000" stroke-opacity="0.6" stroke-width="1.0" stroke-linejoin="round"/>
<polygon points="1289.5,475.9 1304.4,500.9 1326.7,473.1 1311.8,452.2" fill="#d49915" stroke="#000" stroke-opacity="0.6" stroke-width="1.0" stroke-linejoin="round"/>
<polygon points="1207.9,528.5 1222.7,556.1 1245.0,528.9 1230.2,501.0" fill="#829c19" stroke="#000" stroke-opacity="0.6" stroke-width="1.0" stroke-linejoin="round"/>
<polygon points="925.8,666.2 940.6,687.0 962.9,672.0 948.0,650.8" fill="#027d77" stroke="#000" stroke-opacity="0.6" stroke-width="1.0" stroke-linejoin="round"/>
<polygon points="1371.2,422.4 1386.0,436.3 1408.3,413.3 1393.5,400.9" fill="#e35415" stroke="#000" stroke-opacity="0.6" stroke-width="1.0" stroke-linejoin="round"/>
<polygon points="866.4,686.3 881.2,702.9 903.5,683.2 888.7,665.6" fill="#00747e" stroke="#000" stroke-opacity="0.6" stroke-width="1.0" stroke-linejoin="round"/>
<polygon points="1103.9,612.9 1118.8,632.7 1141.0,608.4 1126.2,587.3" fill="#1c833a" stroke="#000" stroke-opacity="0.6" stroke-width="1.0" stroke-linejoin="round"/>
<polygon points="1022.3,663.3 1037.1,683.6 1059.4,663.0 1044.5,643.8" fill="#038072" stroke="#000" stroke-opacity="0.6" stroke-width="1.0" stroke-linejoin="round"/>
<polygon points="1185.6,556.3 1200.4,582.5 1222.7,556.1 1207.9,528.5" fill="#5a921f" stroke="#000" stroke-opacity="0.6" stroke-width="1.0" stroke-linejoin="round"/>
<polygon points="784.7,736.7 799.5,748.6 821.8,730.5 807.0,717.4" fill="#01558b" stroke="#000" stroke-opacity="0.6" stroke-width="1.0" stroke-linejoin="round"/>
<polygon points="1267.3,501.8 1282.1,529.6 1304.4,500.9 1289.5,475.9" fill="#b19f16" stroke="#000" stroke-opacity="0.6" stroke-width="1.0" stroke-linejoin="round"/>
<polygon points="1430.6,395.0 1445.4,408.9 1467.7,395.5 1452.9,381.6" fill="#de311c" stroke="#000" stroke-opacity="0.6" stroke-width="1.0" stroke-linejoin="round"/>
<polygon points="725.3,749.0 740.1,761.5 762.4,750.8 747.6,738.8" fill="#044987" stroke="#000" stroke-opacity="0.6" stroke-width="1.0" stroke-linejoin="round"/>
<polygon points="962.9,672.0 977.7,694.0 1000.0,679.6 985.2,657.7" fill="#017a79" stroke="#000" stroke-opacity="0.6" stroke-width="1.0" stroke-linejoin="round"/>
<polygon points="1348.9,446.8 1363.8,463.0 1386.0,436.3 1371.2,422.4" fill="#e26d12" stroke="#000" stroke-opacity="0.6" stroke-width="1.0" stroke-linejoin="round"/>
<polygon points="1245.0,528.9 1259.8,558.0 1282.1,529.6 1267.3,501.8" fill="#879d19" stroke="#000" stroke-opacity="0.6" stroke-width="1.0" stroke-linejoin="round"/>
<polygon points="1163.3,583.2 1178.2,607.7 1200.4,582.5 1185.6,556.3" fill="#398a28" stroke="#000" stroke-opacity="0.6" stroke-width="1.0" stroke-linejoin="round"/>
<polygon points="1081.7,639.0 1096.5,657.8 1118.8,632.7 1103.9,612.9" fill="#0e8152" stroke="#000" stroke-opacity="0.6" stroke-width="1.0" stroke-linejoin="round"/>
<polygon points="844.1,708.6 858.9,723.9 881.2,702.9 866.4,686.3" fill="#006885" stroke="#000" stroke-opacity="0.6" stroke-width="1.0" stroke-linejoin="round"/>
<polygon points="903.5,683.2 918.3,703.3 940.6,687.0 925.8,666.2" fill="#01767c" stroke="#000" stroke-opacity="0.6" stroke-width="1.0" stroke-linejoin="round"/>
<polygon points="1467.7,395.5 1482.5,410.8 1504.8,401.4 1490.0,385.8" fill="#de311c" stroke="#000" stroke-opacity="0.6" stroke-width="1.0" stroke-linejoin="round"/>
<polygon points="1326.7,473.1 1341.5,492.6 1363.8,463.0 1348.9,446.8" fill="#dc8e14" stroke="#000" stroke-opacity="0.6" stroke-width="1.0" stroke-linejoin="round"/>
<polygon points="1000.0,679.6 1014.8,700.4 1037.1,683.6 1022.3,663.3" fill="#01787a" stroke="#000" stroke-opacity="0.6" stroke-width="1.0" stroke-linejoin="round"/>
<polygon points="1222.7,556.1 1237.5,584.6 1259.8,558.0 1245.0,528.9" fill="#5d931e" stroke="#000" stroke-opacity="0.6" stroke-width="1.0" stroke-linejoin="round"/>
<polygon points="1141.0,608.4 1155.9,631.7 1178.2,607.7 1163.3,583.2" fill="#228536" stroke="#000" stroke-opacity="0.6" stroke-width="1.0" stroke-linejoin="round"/>
<polygon points="762.4,750.8 777.3,762.1 799.5,748.6 784.7,736.7" fill="#034c88" stroke="#000" stroke-opacity="0.6" stroke-width="1.0" stroke-linejoin="round"/>
<polygon points="1059.4,663.0 1074.2,681.7 1096.5,657.8 1081.7,639.0" fill="#05806a" stroke="#000" stroke-opacity="0.6" stroke-width="1.0" stroke-linejoin="round"/>
<polygon points="1408.3,413.3 1423.2,427.3 1445.4,408.9 1430.6,395.0" fill="#e14318" stroke="#000" stroke-opacity="0.6" stroke-width="1.0" stroke-linejoin="round"/>
<polygon points="1304.4,500.9 1319.2,523.7 1341.5,492.6 1326.7,473.1" fill="#c3a216" stroke="#000" stroke-opacity="0.6" stroke-width="1.0" stroke-linejoin="round"/>
<polygon points="821.8,730.5 836.6,744.1 858.9,723.9 844.1,708.6" fill="#005c89" stroke="#000" stroke-opacity="0.6" stroke-width="1.0" stroke-linejoin="round"/>
<polygon points="940.6,687.0 955.4,708.6 977.7,694.0 962.9,672.0" fill="#00757e" stroke="#000" stroke-opacity="0.6" stroke-width="1.0" stroke-linejoin="round"/>
<polygon points="1504.8,401.4 1519.7,417.1 1541.9,410.4 1527.1,394.0" fill="#e0381a" stroke="#000" stroke-opacity="0.6" stroke-width="1.0" stroke-linejoin="round"/>
<polygon points="1200.4,582.5 1215.3,609.2 1237.5,584.6 1222.7,556.1" fill="#3c8b27" stroke="#000" stroke-opacity="0.6" stroke-width="1.0" stroke-linejoin="round"/>
<polygon points="1282.1,529.6 1296.9,554.3 1319.2,523.7 1304.4,500.9" fill="#94a018" stroke="#000" stroke-opacity="0.6" stroke-width="1.0" stroke-linejoin="round"/>
<polygon points="1118.8,632.7 1133.6,655.0 1155.9,631.7 1141.0,608.4" fill="#128149" stroke="#000" stroke-opacity="0.6" stroke-width="1.0" stroke-linejoin="round"/>
<polygon points="881.2,702.9 896.0,721.7 918.3,703.3 903.5,683.2" fill="#006d82" stroke="#000" stroke-opacity="0.6" stroke-width="1.0" stroke-linejoin="round"/>
<polygon points="1037.1,683.6 1051.9,702.2 1074.2,681.7 1059.4,663.0" fill="#017a79" stroke="#000" stroke-opacity="0.6" stroke-width="1.0" stroke-linejoin="round"/>
<polygon points="1259.8,558.0 1274.7,583.5 1296.9,554.3 1282.1,529.6" fill="#64951d" stroke="#000" stroke-opacity="0.6" stroke-width="1.0" stroke-linejoin="round"/>
<polygon points="1386.0,436.3 1400.9,450.7 1423.2,427.3 1408.3,413.3" fill="#e35a15" stroke="#000" stroke-opacity="0.6" stroke-width="1.0" stroke-linejoin="round"/>
<polygon points="977.7,694.0 992.5,715.1 1014.8,700.4 1000.0,679.6" fill="#007280" stroke="#000" stroke-opacity="0.6" stroke-width="1.0" stroke-linejoin="round"/>
<polygon points="1178.2,607.7 1193.0,632.4 1215.3,609.2 1200.4,582.5" fill="#258633" stroke="#000" stroke-opacity="0.6" stroke-width="1.0" stroke-linejoin="round"/>
<polygon points="1445.4,408.9 1460.3,424.3 1482.5,410.8 1467.7,395.5" fill="#e03a1a" stroke="#000" stroke-opacity="0.6" stroke-width="1.0" stroke-linejoin="round"/>
<polygon points="799.5,748.6 814.4,761.0 836.6,744.1 821.8,730.5" fill="#02528a" stroke="#000" stroke-opacity="0.6" stroke-width="1.0" stroke-linejoin="round"/>
<polygon points="1096.5,657.8 1111.3,678.0 1133.6,655.0 1118.8,632.7" fill="#088061" stroke="#000" stroke-opacity="0.6" stroke-width="1.0" stroke-linejoin="round"/>
<polygon points="740.1,761.5 755.0,772.4 777.3,762.1 762.4,750.8" fill="#044787" stroke="#000" stroke-opacity="0.6" stroke-width="1.0" stroke-linejoin="round"/>
<polygon points="1237.5,584.6 1252.4,609.9 1274.7,583.5 1259.8,558.0" fill="#408c26" stroke="#000" stroke-opacity="0.6" stroke-width="1.0" stroke-linejoin="round"/>
<polygon points="1363.8,463.0 1378.6,478.4 1400.9,450.7 1386.0,436.3" fill="#e17612" stroke="#000" stroke-opacity="0.6" stroke-width="1.0" stroke-linejoin="round"/>
<polygon points="918.3,703.3 933.1,724.4 955.4,708.6 940.6,687.0" fill="#006d82" stroke="#000" stroke-opacity="0.6" stroke-width="1.0" stroke-linejoin="round"/>
<polygon points="858.9,723.9 873.8,740.7 896.0,721.7 881.2,702.9" fill="#006187" stroke="#000" stroke-opacity="0.6" stroke-width="1.0" stroke-linejoin="round"/>
<polygon points="1155.9,631.7 1170.7,654.8 1193.0,632.4 1178.2,607.7" fill="#158244" stroke="#000" stroke-opacity="0.6" stroke-width="1.0" stroke-linejoin="round"/>
<polygon points="1014.8,700.4 1029.7,719.1 1051.9,702.2 1037.1,683.6" fill="#007180" stroke="#000" stroke-opacity="0.6" stroke-width="1.0" stroke-linejoin="round"/>
<polygon points="1341.5,492.6 1356.3,509.4 1378.6,478.4 1363.8,463.0" fill="#d79814" stroke="#000" stroke-opacity="0.6" stroke-width="1.0" stroke-linejoin="round"/>
<polygon points="1482.5,410.8 1497.4,426.1 1519.7,417.1 1504.8,401.4" fill="#e03c1a" stroke="#000" stroke-opacity="0.6" stroke-width="1.0" stroke-linejoin="round"/>
<polygon points="1215.3,609.2 1230.1,633.3 1252.4,609.9 1237.5,584.6" fill="#278632" stroke="#000" stroke-opacity="0.6" stroke-width="1.0" stroke-linejoin="round"/>
<polygon points="1074.2,681.7 1089.0,699.9 1111.3,678.0 1096.5,657.8" fill="#027e75" stroke="#000" stroke-opacity="0.6" stroke-width="1.0" stroke-linejoin="round"/>
<polygon points="1319.2,523.7 1334.0,542.0 1356.3,509.4 1341.5,492.6" fill="#ab9e16" stroke="#000" stroke-opacity="0.6" stroke-width="1.0" stroke-linejoin="round"/>
<polygon points="955.4,708.6 970.3,729.5 992.5,715.1 977.7,694.0" fill="#006a83" stroke="#000" stroke-opacity="0.6" stroke-width="1.0" stroke-linejoin="round"/>
<polygon points="1423.2,427.3 1438.0,442.2 1460.3,424.3 1445.4,408.9" fill="#e24d16" stroke="#000" stroke-opacity="0.6" stroke-width="1.0" stroke-linejoin="round"/>
<polygon points="1296.9,554.3 1311.8,573.5 1334.0,542.0 1319.2,523.7" fill="#799b1a" stroke="#000" stroke-opacity="0.6" stroke-width="1.0" stroke-linejoin="round"/>
<polygon points="777.3,762.1 792.1,773.5 814.4,761.0 799.5,748.6" fill="#044a88" stroke="#000" stroke-opacity="0.6" stroke-width="1.0" stroke-linejoin="round"/>
<polygon points="1133.6,655.0 1148.4,676.7 1170.7,654.8 1155.9,631.7" fill="#0a805b" stroke="#000" stroke-opacity="0.6" stroke-width="1.0" stroke-linejoin="round"/>
<polygon points="836.6,744.1 851.5,758.7 873.8,740.7 858.9,723.9" fill="#01588a" stroke="#000" stroke-opacity="0.6" stroke-width="1.0" stroke-linejoin="round"/>
<polygon points="1519.7,417.1 1534.5,430.9 1556.8,424.4 1541.9,410.4" fill="#e14318" stroke="#000" stroke-opacity="0.6" stroke-width="1.0" stroke-linejoin="round"/>
<polygon points="896.0,721.7 910.9,741.4 933.1,724.4 918.3,703.3" fill="#006387" stroke="#000" stroke-opacity="0.6" stroke-width="1.0" stroke-linejoin="round"/>
<polygon points="1193.0,632.4 1207.8,654.7 1230.1,633.3 1215.3,609.2" fill="#168241" stroke="#000" stroke-opacity="0.6" stroke-width="1.0" stroke-linejoin="round"/>
<polygon points="1274.7,583.5 1289.5,602.7 1311.8,573.5 1296.9,554.3" fill="#4d8f22" stroke="#000" stroke-opacity="0.6" stroke-width="1.0" stroke-linejoin="round"/>
<polygon points="1051.9,702.2 1066.8,719.1 1089.0,699.9 1074.2,681.7" fill="#00747e" stroke="#000" stroke-opacity="0.6" stroke-width="1.0" stroke-linejoin="round"/>
<polygon points="992.5,715.1 1007.4,733.8 1029.7,719.1 1014.8,700.4" fill="#006884" stroke="#000" stroke-opacity="0.6" stroke-width="1.0" stroke-linejoin="round"/>
<polygon points="1400.9,450.7 1415.7,465.3 1438.0,442.2 1423.2,427.3" fill="#e46114" stroke="#000" stroke-opacity="0.6" stroke-width="1.0" stroke-linejoin="round"/>
<polygon points="1252.4,609.9 1267.2,628.9 1289.5,602.7 1274.7,583.5" fill="#2d882d" stroke="#000" stroke-opacity="0.6" stroke-width="1.0" stroke-linejoin="round"/>
<polygon points="1111.3,678.0 1126.1,697.5 1148.4,676.7 1133.6,655.0" fill="#038070" stroke="#000" stroke-opacity="0.6" stroke-width="1.0" stroke-linejoin="round"/>
<polygon points="1460.3,424.3 1475.1,439.4 1497.4,426.1 1482.5,410.8" fill="#e14618" stroke="#000" stroke-opacity="0.6" stroke-width="1.0" stroke-linejoin="round"/>
<polygon points="933.1,724.4 948.0,744.6 970.3,729.5 955.4,708.6" fill="#006287" stroke="#000" stroke-opacity="0.6" stroke-width="1.0" stroke-linejoin="round"/>
<polygon points="1170.7,654.8 1185.5,675.5 1207.8,654.7 1193.0,632.4" fill="#0c8057" stroke="#000" stroke-opacity="0.6" stroke-width="1.0" stroke-linejoin="round"/>
<polygon points="814.4,761.0 829.2,773.9 851.5,758.7 836.6,744.1" fill="#034f89" stroke="#000" stroke-opacity="0.6" stroke-width="1.0" stroke-linejoin="round"/>
<polygon points="873.8,740.7 888.6,758.3 910.9,741.4 896.0,721.7" fill="#015b89" stroke="#000" stroke-opacity="0.6" stroke-width="1.0" stroke-linejoin="round"/>
<polygon points="1378.6,478.4 1393.4,492.7 1415.7,465.3 1400.9,450.7" fill="#df7f13" stroke="#000" stroke-opacity="0.6" stroke-width="1.0" stroke-linejoin="round"/>
<polygon points="1230.1,633.3 1244.9,651.9 1267.2,628.9 1252.4,609.9" fill="#1a833c" stroke="#000" stroke-opacity="0.6" stroke-width="1.0" stroke-linejoin="round"/>
<polygon points="755.0,772.4 769.8,783.1 792.1,773.5 777.3,762.1" fill="#054686" stroke="#000" stroke-opacity="0.6" stroke-width="1.0" stroke-linejoin="round"/>
<polygon points="1029.7,719.1 1044.5,735.5 1066.8,719.1 1051.9,702.2" fill="#006984" stroke="#000" stroke-opacity="0.6" stroke-width="1.0" stroke-linejoin="round"/>
<polygon points="1089.0,699.9 1103.9,717.1 1126.1,697.5 1111.3,678.0" fill="#01787b" stroke="#000" stroke-opacity="0.6" stroke-width="1.0" stroke-linejoin="round"/>
<polygon points="1356.3,509.4 1371.2,523.5 1393.4,492.7 1378.6,478.4" fill="#cf9c15" stroke="#000" stroke-opacity="0.6" stroke-width="1.0" stroke-linejoin="round"/>
<polygon points="970.3,729.5 985.1,748.1 1007.4,733.8 992.5,715.1" fill="#006187" stroke="#000" stroke-opacity="0.6" stroke-width="1.0" stroke-linejoin="round"/>
<polygon points="1497.4,426.1 1512.2,440.1 1534.5,430.9 1519.7,417.1" fill="#e14717" stroke="#000" stroke-opacity="0.6" stroke-width="1.0" stroke-linejoin="round"/>
<polygon points="1148.4,676.7 1163.3,696.0 1185.5,675.5 1170.7,654.8" fill="#05806a" stroke="#000" stroke-opacity="0.6" stroke-width="1.0" stroke-linejoin="round"/>
<polygon points="1334.0,542.0 1348.9,555.6 1371.2,523.5 1356.3,509.4" fill="#a09f17" stroke="#000" stroke-opacity="0.6" stroke-width="1.0" stroke-linejoin="round"/>
<polygon points="1438.0,442.2 1452.8,457.0 1475.1,439.4 1460.3,424.3" fill="#e35515" stroke="#000" stroke-opacity="0.6" stroke-width="1.0" stroke-linejoin="round"/>
<polygon points="910.9,741.4 925.7,760.2 948.0,744.6 933.1,724.4" fill="#015b89" stroke="#000" stroke-opacity="0.6" stroke-width="1.0" stroke-linejoin="round"/>
<polygon points="1311.8,573.5 1326.6,587.1 1348.9,555.6 1334.0,542.0" fill="#6c971c" stroke="#000" stroke-opacity="0.6" stroke-width="1.0" stroke-linejoin="round"/>
<polygon points="1207.8,654.7 1222.6,672.4 1244.9,651.9 1230.1,633.3" fill="#0f8151" stroke="#000" stroke-opacity="0.6" stroke-width="1.0" stroke-linejoin="round"/>
<polygon points="851.5,758.7 866.3,773.8 888.6,758.3 873.8,740.7" fill="#02538a" stroke="#000" stroke-opacity="0.6" stroke-width="1.0" stroke-linejoin="round"/>
<polygon points="792.1,773.5 806.9,785.3 829.2,773.9 814.4,761.0" fill="#044887" stroke="#000" stroke-opacity="0.6" stroke-width="1.0" stroke-linejoin="round"/>
<polygon points="1289.5,602.7 1304.3,616.0 1326.6,587.1 1311.8,573.5" fill="#428c25" stroke="#000" stroke-opacity="0.6" stroke-width="1.0" stroke-linejoin="round"/>
<polygon points="1066.8,719.1 1081.6,734.6 1103.9,717.1 1089.0,699.9" fill="#006d82" stroke="#000" stroke-opacity="0.6" stroke-width="1.0" stroke-linejoin="round"/>
<polygon points="1534.5,430.9 1549.3,441.8 1571.6,435.0 1556.8,424.4" fill="#e24917" stroke="#000" stroke-opacity="0.6" stroke-width="1.0" stroke-linejoin="round"/>
<polygon points="1007.4,733.8 1022.2,750.1 1044.5,735.5 1029.7,719.1" fill="#006187" stroke="#000" stroke-opacity="0.6" stroke-width="1.0" stroke-linejoin="round"/>
<polygon points="1126.1,697.5 1141.0,714.9 1163.3,696.0 1148.4,676.7" fill="#017b78" stroke="#000" stroke-opacity="0.6" stroke-width="1.0" stroke-linejoin="round"/>
<polygon points="1267.2,628.9 1282.0,641.9 1304.3,616.0 1289.5,602.7" fill="#268633" stroke="#000" stroke-opacity="0.6" stroke-width="1.0" stroke-linejoin="round"/>
<polygon points="948.0,744.6 962.8,762.8 985.1,748.1 970.3,729.5" fill="#015b89" stroke="#000" stroke-opacity="0.6" stroke-width="1.0" stroke-linejoin="round"/>
<polygon points="1415.7,465.3 1430.5,479.4 1452.8,457.0 1438.0,442.2" fill="#e36913" stroke="#000" stroke-opacity="0.6" stroke-width="1.0" stroke-linejoin="round"/>
<polygon points="1185.5,675.5 1200.4,692.0 1222.6,672.4 1207.8,654.7" fill="#078064" stroke="#000" stroke-opacity="0.6" stroke-width="1.0" stroke-linejoin="round"/>
<polygon points="1475.1,439.4 1489.9,453.1 1512.2,440.1 1497.4,426.1" fill="#e24f16" stroke="#000" stroke-opacity="0.6" stroke-width="1.0" stroke-linejoin="round"/>
<polygon points="888.6,758.3 903.4,775.2 925.7,760.2 910.9,741.4" fill="#01548b" stroke="#000" stroke-opacity="0.6" stroke-width="1.0" stroke-linejoin="round"/>
<polygon points="829.2,773.9 844.0,786.9 866.3,773.8 851.5,758.7" fill="#044b88" stroke="#000" stroke-opacity="0.6" stroke-width="1.0" stroke-linejoin="round"/>
<polygon points="1244.9,651.9 1259.8,664.9 1282.0,641.9 1267.2,628.9" fill="#158244" stroke="#000" stroke-opacity="0.6" stroke-width="1.0" stroke-linejoin="round"/>
<polygon points="1044.5,735.5 1059.3,750.0 1081.6,734.6 1066.8,719.1" fill="#006386" stroke="#000" stroke-opacity="0.6" stroke-width="1.0" stroke-linejoin="round"/>
<polygon points="1393.4,492.7 1408.3,505.8 1430.5,479.4 1415.7,465.3" fill="#dd8613" stroke="#000" stroke-opacity="0.6" stroke-width="1.0" stroke-linejoin="round"/>
<polygon points="1103.9,717.1 1118.7,732.3 1141.0,714.9 1126.1,697.5" fill="#007280" stroke="#000" stroke-opacity="0.6" stroke-width="1.0" stroke-linejoin="round"/>
<polygon points="985.1,748.1 999.9,764.4 1022.2,750.1 1007.4,733.8" fill="#015b89" stroke="#000" stroke-opacity="0.6" stroke-width="1.0" stroke-linejoin="round"/>
<polygon points="769.8,783.1 784.6,794.1 806.9,785.3 792.1,773.5" fill="#054485" stroke="#000" stroke-opacity="0.6" stroke-width="1.0" stroke-linejoin="round"/>
<polygon points="1163.3,696.0 1178.1,710.9 1200.4,692.0 1185.5,675.5" fill="#027f75" stroke="#000" stroke-opacity="0.6" stroke-width="1.0" stroke-linejoin="round"/>
<polygon points="1371.2,523.5 1386.0,535.4 1408.3,505.8 1393.4,492.7" fill="#ca9f15" stroke="#000" stroke-opacity="0.6" stroke-width="1.0" stroke-linejoin="round"/>
<polygon points="925.7,760.2 940.5,777.3 962.8,762.8 948.0,744.6" fill="#01558b" stroke="#000" stroke-opacity="0.6" stroke-width="1.0" stroke-linejoin="round"/>
<polygon points="1512.2,440.1 1527.0,452.1 1549.3,441.8 1534.5,430.9" fill="#e24d16" stroke="#000" stroke-opacity="0.6" stroke-width="1.0" stroke-linejoin="round"/>
<polygon points="1348.9,555.6 1363.7,566.3 1386.0,535.4 1371.2,523.5" fill="#9aa018" stroke="#000" stroke-opacity="0.6" stroke-width="1.0" stroke-linejoin="round"/>
<polygon points="1222.6,672.4 1237.5,685.4 1259.8,664.9 1244.9,651.9" fill="#0a805a" stroke="#000" stroke-opacity="0.6" stroke-width="1.0" stroke-linejoin="round"/>
<polygon points="1452.8,457.0 1467.7,470.3 1489.9,453.1 1475.1,439.4" fill="#e35b15" stroke="#000" stroke-opacity="0.6" stroke-width="1.0" stroke-linejoin="round"/>
<polygon points="866.3,773.8 881.1,788.8 903.4,775.2 888.6,758.3" fill="#034d88" stroke="#000" stroke-opacity="0.6" stroke-width="1.0" stroke-linejoin="round"/>
<polygon points="1326.6,587.1 1341.4,597.0 1363.7,566.3 1348.9,555.6" fill="#67961d" stroke="#000" stroke-opacity="0.6" stroke-width="1.0" stroke-linejoin="round"/>
<polygon points="1081.6,734.6 1096.4,748.4 1118.7,732.3 1103.9,717.1" fill="#006885" stroke="#000" stroke-opacity="0.6" stroke-width="1.0" stroke-linejoin="round"/>
<polygon points="806.9,785.3 821.8,797.2 844.0,786.9 829.2,773.9" fill="#054586" stroke="#000" stroke-opacity="0.6" stroke-width="1.0" stroke-linejoin="round"/>
<polygon points="1022.2,750.1 1037.0,764.4 1059.3,750.0 1044.5,735.5" fill="#005d89" stroke="#000" stroke-opacity="0.6" stroke-width="1.0" stroke-linejoin="round"/>
<polygon points="1304.3,616.0 1319.2,625.7 1341.4,597.0 1326.6,587.1" fill="#3e8b26" stroke="#000" stroke-opacity="0.6" stroke-width="1.0" stroke-linejoin="round"/>
<polygon points="1141.0,714.9 1155.8,728.4 1178.1,710.9 1163.3,696.0" fill="#01767c" stroke="#000" stroke-opacity="0.6" stroke-width="1.0" stroke-linejoin="round"/>
<polygon points="962.8,762.8 977.6,778.8 999.9,764.4 985.1,748.1" fill="#01558b" stroke="#000" stroke-opacity="0.6" stroke-width="1.0" stroke-linejoin="round"/>
<polygon points="1200.4,692.0 1215.2,704.2 1237.5,685.4 1222.6,672.4" fill="#05806b" stroke="#000" stroke-opacity="0.6" stroke-width="1.0" stroke-linejoin="round"/>
<polygon points="1430.5,479.4 1445.4,492.1 1467.7,470.3 1452.8,457.0" fill="#e27012" stroke="#000" stroke-opacity="0.6" stroke-width="1.0" stroke-linejoin="round"/>
<polygon points="903.4,775.2 918.3,791.1 940.5,777.3 925.7,760.2" fill="#034e89" stroke="#000" stroke-opacity="0.6" stroke-width="1.0" stroke-linejoin="round"/>
<polygon points="1282.0,641.9 1296.9,651.4 1319.2,625.7 1304.3,616.0" fill="#248534" stroke="#000" stroke-opacity="0.6" stroke-width="1.0" stroke-linejoin="round"/>
<polygon points="1489.9,453.1 1504.8,465.6 1527.0,452.1 1512.2,440.1" fill="#e35415" stroke="#000" stroke-opacity="0.6" stroke-width="1.0" stroke-linejoin="round"/>
<polygon points="844.0,786.9 858.9,800.2 881.1,788.8 866.3,773.8" fill="#054686" stroke="#000" stroke-opacity="0.6" stroke-width="1.0" stroke-linejoin="round"/>
<polygon points="1059.3,750.0 1074.1,763.0 1096.4,748.4 1081.6,734.6" fill="#006088" stroke="#000" stroke-opacity="0.6" stroke-width="1.0" stroke-linejoin="round"/>
<polygon points="1118.7,732.3 1133.5,744.7 1155.8,728.4 1141.0,714.9" fill="#006d82" stroke="#000" stroke-opacity="0.6" stroke-width="1.0" stroke-linejoin="round"/>
<polygon points="1408.3,505.8 1423.1,517.3 1445.4,492.1 1430.5,479.4" fill="#dc8c13" stroke="#000" stroke-opacity="0.6" stroke-width="1.0" stroke-linejoin="round"/>
<polygon points="1259.8,664.9 1274.6,674.6 1296.9,651.4 1282.0,641.9" fill="#148147" stroke="#000" stroke-opacity="0.6" stroke-width="1.0" stroke-linejoin="round"/>
<polygon points="999.9,764.4 1014.8,778.6 1037.0,764.4 1022.2,750.1" fill="#01578a" stroke="#000" stroke-opacity="0.6" stroke-width="1.0" stroke-linejoin="round"/>
<polygon points="1178.1,710.9 1192.9,721.9 1215.2,704.2 1200.4,692.0" fill="#017c77" stroke="#000" stroke-opacity="0.6" stroke-width="1.0" stroke-linejoin="round"/>
<polygon points="940.5,777.3 955.4,792.7 977.6,778.8 962.8,762.8" fill="#034f89" stroke="#000" stroke-opacity="0.6" stroke-width="1.0" stroke-linejoin="round"/>
<polygon points="784.6,794.1 799.5,805.4 821.8,797.2 806.9,785.3" fill="#064184" stroke="#000" stroke-opacity="0.6" stroke-width="1.0" stroke-linejoin="round"/>
<polygon points="1386.0,535.4 1400.8,545.6 1423.1,517.3 1408.3,505.8" fill="#c7a116" stroke="#000" stroke-opacity="0.6" stroke-width="1.0" stroke-linejoin="round"/>
<polygon points="881.1,788.8 896.0,803.3 918.3,791.1 903.4,775.2" fill="#044787" stroke="#000" stroke-opacity="0.6" stroke-width="1.0" stroke-linejoin="round"/>
<polygon points="1467.7,470.3 1482.5,482.3 1504.8,465.6 1489.9,453.1" fill="#e46014" stroke="#000" stroke-opacity="0.6" stroke-width="1.0" stroke-linejoin="round"/>
<polygon points="1363.7,566.3 1378.5,575.7 1400.8,545.6 1386.0,535.4" fill="#98a018" stroke="#000" stroke-opacity="0.6" stroke-width="1.0" stroke-linejoin="round"/>
<polygon points="1237.5,685.4 1252.3,695.2 1274.6,674.6 1259.8,664.9" fill="#09805c" stroke="#000" stroke-opacity="0.6" stroke-width="1.0" stroke-linejoin="round"/>
<polygon points="1096.4,748.4 1111.3,759.9 1133.5,744.7 1118.7,732.3" fill="#006486" stroke="#000" stroke-opacity="0.6" stroke-width="1.0" stroke-linejoin="round"/>
<polygon points="1341.4,597.0 1356.3,605.6 1378.5,575.7 1363.7,566.3" fill="#66961d" stroke="#000" stroke-opacity="0.6" stroke-width="1.0" stroke-linejoin="round"/>
<polygon points="1037.0,764.4 1051.9,777.0 1074.1,763.0 1059.3,750.0" fill="#015a8a" stroke="#000" stroke-opacity="0.6" stroke-width="1.0" stroke-linejoin="round"/>
<polygon points="821.8,797.2 836.6,809.4 858.9,800.2 844.0,786.9" fill="#064284" stroke="#000" stroke-opacity="0.6" stroke-width="1.0" stroke-linejoin="round"/>
<polygon points="977.6,778.8 992.5,792.9 1014.8,778.6 999.9,764.4" fill="#02518a" stroke="#000" stroke-opacity="0.6" stroke-width="1.0" stroke-linejoin="round"/>
<polygon points="1155.8,728.4 1170.6,738.6 1192.9,721.9 1178.1,710.9" fill="#00747e" stroke="#000" stroke-opacity="0.6" stroke-width="1.0" stroke-linejoin="round"/>
<polygon points="1319.2,625.7 1334.0,633.7 1356.3,605.6 1341.4,597.0" fill="#3f8c26" stroke="#000" stroke-opacity="0.6" stroke-width="1.0" stroke-linejoin="round"/>
<polygon points="918.3,791.1 933.1,805.7 955.4,792.7 940.5,777.3" fill="#044887" stroke="#000" stroke-opacity="0.6" stroke-width="1.0" stroke-linejoin="round"/>
<polygon points="1445.4,492.1 1460.2,502.8 1482.5,482.3 1467.7,470.3" fill="#e17412" stroke="#000" stroke-opacity="0.6" stroke-width="1.0" stroke-linejoin="round"/>
<polygon points="1215.2,704.2 1230.0,713.6 1252.3,695.2 1237.5,685.4" fill="#04806d" stroke="#000" stroke-opacity="0.6" stroke-width="1.0" stroke-linejoin="round"/>
<polygon points="1296.9,651.4 1311.7,659.6 1334.0,633.7 1319.2,625.7" fill="#248534" stroke="#000" stroke-opacity="0.6" stroke-width="1.0" stroke-linejoin="round"/>
<polygon points="858.9,800.2 873.7,813.5 896.0,803.3 881.1,788.8" fill="#064284" stroke="#000" stroke-opacity="0.6" stroke-width="1.0" stroke-linejoin="round"/>
<polygon points="1074.1,763.0 1089.0,774.3 1111.3,759.9 1096.4,748.4" fill="#005d88" stroke="#000" stroke-opacity="0.6" stroke-width="1.0" stroke-linejoin="round"/>
<polygon points="1014.8,778.6 1029.6,791.5 1051.9,777.0 1037.0,764.4" fill="#01548b" stroke="#000" stroke-opacity="0.6" stroke-width="1.0" stroke-linejoin="round"/>
<polygon points="1133.5,744.7 1148.4,754.5 1170.6,738.6 1155.8,728.4" fill="#006b83" stroke="#000" stroke-opacity="0.6" stroke-width="1.0" stroke-linejoin="round"/>
<polygon points="1423.1,517.3 1437.9,527.3 1460.2,502.8 1445.4,492.1" fill="#db8f14" stroke="#000" stroke-opacity="0.6" stroke-width="1.0" stroke-linejoin="round"/>
<polygon points="955.4,792.7 970.2,806.6 992.5,792.9 977.6,778.8" fill="#044a88" stroke="#000" stroke-opacity="0.6" stroke-width="1.0" stroke-linejoin="round"/>
<polygon points="1274.6,674.6 1289.4,682.7 1311.7,659.6 1296.9,651.4" fill="#148146" stroke="#000" stroke-opacity="0.6" stroke-width="1.0" stroke-linejoin="round"/>
<polygon points="799.5,805.4 814.3,817.1 836.6,809.4 821.8,797.2" fill="#063f83" stroke="#000" stroke-opacity="0.6" stroke-width="1.0" stroke-linejoin="round"/>
<polygon points="1192.9,721.9 1207.8,730.7 1230.0,713.6 1215.2,704.2" fill="#017b78" stroke="#000" stroke-opacity="0.6" stroke-width="1.0" stroke-linejoin="round"/>
<polygon points="896.0,803.3 910.8,816.8 933.1,805.7 918.3,791.1" fill="#064284" stroke="#000" stroke-opacity="0.6" stroke-width="1.0" stroke-linejoin="round"/>
<polygon points="1400.8,545.6 1415.6,554.7 1437.9,527.3 1423.1,517.3" fill="#c5a116" stroke="#000" stroke-opacity="0.6" stroke-width="1.0" stroke-linejoin="round"/>
<polygon points="1378.5,575.7 1393.4,584.3 1415.6,554.7 1400.8,545.6" fill="#98a018" stroke="#000" stroke-opacity="0.6" stroke-width="1.0" stroke-linejoin="round"/>
<polygon points="1252.3,695.2 1267.1,703.2 1289.4,682.7 1274.6,674.6" fill="#09805c" stroke="#000" stroke-opacity="0.6" stroke-width="1.0" stroke-linejoin="round"/>
<polygon points="836.6,809.4 851.4,821.7 873.7,813.5 858.9,800.2" fill="#073e82" stroke="#000" stroke-opacity="0.6" stroke-width="1.0" stroke-linejoin="round"/>
<polygon points="1051.9,777.0 1066.7,788.5 1089.0,774.3 1074.1,763.0" fill="#01588a" stroke="#000" stroke-opacity="0.6" stroke-width="1.0" stroke-linejoin="round"/>
<polygon points="1111.3,759.9 1126.1,769.7 1148.4,754.5 1133.5,744.7" fill="#006387" stroke="#000" stroke-opacity="0.6" stroke-width="1.0" stroke-linejoin="round"/>
<polygon points="992.5,792.9 1007.3,805.8 1029.6,791.5 1014.8,778.6" fill="#034d88" stroke="#000" stroke-opacity="0.6" stroke-width="1.0" stroke-linejoin="round"/>
<polygon points="1356.3,605.6 1371.1,613.9 1393.4,584.3 1378.5,575.7" fill="#67961d" stroke="#000" stroke-opacity="0.6" stroke-width="1.0" stroke-linejoin="round"/>
<polygon points="933.1,805.7 947.9,818.8 970.2,806.6 955.4,792.7" fill="#054385" stroke="#000" stroke-opacity="0.6" stroke-width="1.0" stroke-linejoin="round"/>
<polygon points="1170.6,738.6 1185.5,747.0 1207.8,730.7 1192.9,721.9" fill="#00747e" stroke="#000" stroke-opacity="0.6" stroke-width="1.0" stroke-linejoin="round"/>
<polygon points="1334.0,633.7 1348.8,641.5 1371.1,613.9 1356.3,605.6" fill="#408c25" stroke="#000" stroke-opacity="0.6" stroke-width="1.0" stroke-linejoin="round"/>
<polygon points="873.7,813.5 888.5,826.3 910.8,816.8 896.0,803.3" fill="#073d82" stroke="#000" stroke-opacity="0.6" stroke-width="1.0" stroke-linejoin="round"/>
<polygon points="1230.0,713.6 1244.9,721.4 1267.1,703.2 1252.3,695.2" fill="#04806d" stroke="#000" stroke-opacity="0.6" stroke-width="1.0" stroke-linejoin="round"/>
<polygon points="1311.7,659.6 1326.5,667.3 1348.8,641.5 1334.0,633.7" fill="#268633" stroke="#000" stroke-opacity="0.6" stroke-width="1.0" stroke-linejoin="round"/>
<polygon points="1029.6,791.5 1044.4,803.1 1066.7,788.5 1051.9,777.0" fill="#02518a" stroke="#000" stroke-opacity="0.6" stroke-width="1.0" stroke-linejoin="round"/>
<polygon points="1089.0,774.3 1103.8,784.5 1126.1,769.7 1111.3,759.9" fill="#005c89" stroke="#000" stroke-opacity="0.6" stroke-width="1.0" stroke-linejoin="round"/>
<polygon points="970.2,806.6 985.0,819.2 1007.3,805.8 992.5,792.9" fill="#054686" stroke="#000" stroke-opacity="0.6" stroke-width="1.0" stroke-linejoin="round"/>
<polygon points="1148.4,754.5 1163.2,763.2 1185.5,747.0 1170.6,738.6" fill="#006b83" stroke="#000" stroke-opacity="0.6" stroke-width="1.0" stroke-linejoin="round"/>
<polygon points="814.3,817.1 829.1,829.0 851.4,821.7 836.6,809.4" fill="#073c81" stroke="#000" stroke-opacity="0.6" stroke-width="1.0" stroke-linejoin="round"/>
<polygon points="910.8,816.8 925.6,829.3 947.9,818.8 933.1,805.7" fill="#073d82" stroke="#000" stroke-opacity="0.6" stroke-width="1.0" stroke-linejoin="round"/>
<polygon points="1289.4,682.7 1304.3,690.3 1326.5,667.3 1311.7,659.6" fill="#158244" stroke="#000" stroke-opacity="0.6" stroke-width="1.0" stroke-linejoin="round"/>
<polygon points="1207.8,730.7 1222.6,738.4 1244.9,721.4 1230.0,713.6" fill="#017c77" stroke="#000" stroke-opacity="0.6" stroke-width="1.0" stroke-linejoin="round"/>
<polygon points="851.4,821.7 866.3,833.9 888.5,826.3 873.7,813.5" fill="#083a80" stroke="#000" stroke-opacity="0.6" stroke-width="1.0" stroke-linejoin="round"/>
<polygon points="1007.3,805.8 1022.1,817.6 1044.4,803.1 1029.6,791.5" fill="#044a88" stroke="#000" stroke-opacity="0.6" stroke-width="1.0" stroke-linejoin="round"/>
<polygon points="1066.7,788.5 1081.5,799.5 1103.8,784.5 1089.0,774.3" fill="#01578b" stroke="#000" stroke-opacity="0.6" stroke-width="1.0" stroke-linejoin="round"/>
<polygon points="1267.1,703.2 1282.0,710.6 1304.3,690.3 1289.4,682.7" fill="#0a805a" stroke="#000" stroke-opacity="0.6" stroke-width="1.0" stroke-linejoin="round"/>
<polygon points="1126.1,769.7 1140.9,778.7 1163.2,763.2 1148.4,754.5" fill="#006287" stroke="#000" stroke-opacity="0.6" stroke-width="1.0" stroke-linejoin="round"/>
<polygon points="947.9,818.8 962.8,830.9 985.0,819.2 970.2,806.6" fill="#063f83" stroke="#000" stroke-opacity="0.6" stroke-width="1.0" stroke-linejoin="round"/>
<polygon points="1185.5,747.0 1200.3,754.8 1222.6,738.4 1207.8,730.7" fill="#00757e" stroke="#000" stroke-opacity="0.6" stroke-width="1.0" stroke-linejoin="round"/>
<polygon points="888.5,826.3 903.4,838.3 925.6,829.3 910.8,816.8" fill="#083980" stroke="#000" stroke-opacity="0.6" stroke-width="1.0" stroke-linejoin="round"/>
<polygon points="1244.9,721.4 1259.7,728.3 1282.0,710.6 1267.1,703.2" fill="#05806a" stroke="#000" stroke-opacity="0.6" stroke-width="1.0" stroke-linejoin="round"/>
<polygon points="1044.4,803.1 1059.3,814.3 1081.5,799.5 1066.7,788.5" fill="#025089" stroke="#000" stroke-opacity="0.6" stroke-width="1.0" stroke-linejoin="round"/>
<polygon points="985.0,819.2 999.9,830.8 1022.1,817.6 1007.3,805.8" fill="#054385" stroke="#000" stroke-opacity="0.6" stroke-width="1.0" stroke-linejoin="round"/>
<polygon points="1103.8,784.5 1118.6,794.1 1140.9,778.7 1126.1,769.7" fill="#005c89" stroke="#000" stroke-opacity="0.6" stroke-width="1.0" stroke-linejoin="round"/>
<polygon points="829.1,829.0 844.0,840.9 866.3,833.9 851.4,821.7" fill="#08397f" stroke="#000" stroke-opacity="0.6" stroke-width="1.0" stroke-linejoin="round"/>
<polygon points="925.6,829.3 940.5,841.1 962.8,830.9 947.9,818.8" fill="#083a80" stroke="#000" stroke-opacity="0.6" stroke-width="1.0" stroke-linejoin="round"/>
<polygon points="1163.2,763.2 1178.0,771.0 1200.3,754.8 1185.5,747.0" fill="#006c83" stroke="#000" stroke-opacity="0.6" stroke-width="1.0" stroke-linejoin="round"/>
<polygon points="1222.6,738.4 1237.4,745.6 1259.7,728.3 1244.9,721.4" fill="#027d76" stroke="#000" stroke-opacity="0.6" stroke-width="1.0" stroke-linejoin="round"/>
<polygon points="866.3,833.9 881.1,845.9 903.4,838.3 888.5,826.3" fill="#08377e" stroke="#000" stroke-opacity="0.6" stroke-width="1.0" stroke-linejoin="round"/>
<polygon points="1022.1,817.6 1037.0,828.7 1059.3,814.3 1044.4,803.1" fill="#044887" stroke="#000" stroke-opacity="0.6" stroke-width="1.0" stroke-linejoin="round"/>
<polygon points="1081.5,799.5 1096.4,809.7 1118.6,794.1 1103.8,784.5" fill="#01568b" stroke="#000" stroke-opacity="0.6" stroke-width="1.0" stroke-linejoin="round"/>
<polygon points="962.8,830.9 977.6,842.4 999.9,830.8 985.0,819.2" fill="#073d81" stroke="#000" stroke-opacity="0.6" stroke-width="1.0" stroke-linejoin="round"/>
<polygon points="1140.9,778.7 1155.8,787.1 1178.0,771.0 1163.2,763.2" fill="#006386" stroke="#000" stroke-opacity="0.6" stroke-width="1.0" stroke-linejoin="round"/>
<polygon points="903.4,838.3 918.2,850.0 940.5,841.1 925.6,829.3" fill="#08367e" stroke="#000" stroke-opacity="0.6" stroke-width="1.0" stroke-linejoin="round"/>
<polygon points="1200.3,754.8 1215.1,762.3 1237.4,745.6 1222.6,738.4" fill="#01767d" stroke="#000" stroke-opacity="0.6" stroke-width="1.0" stroke-linejoin="round"/>
<polygon points="1059.3,814.3 1074.1,825.1 1096.4,809.7 1081.5,799.5" fill="#034e89" stroke="#000" stroke-opacity="0.6" stroke-width="1.0" stroke-linejoin="round"/>
<polygon points="999.9,830.8 1014.7,841.9 1037.0,828.7 1022.1,817.6" fill="#064184" stroke="#000" stroke-opacity="0.6" stroke-width="1.0" stroke-linejoin="round"/>
<polygon points="1118.6,794.1 1133.5,803.3 1155.8,787.1 1140.9,778.7" fill="#005c89" stroke="#000" stroke-opacity="0.6" stroke-width="1.0" stroke-linejoin="round"/>
<polygon points="844.0,840.9 858.8,852.8 881.1,845.9 866.3,833.9" fill="#09367e" stroke="#000" stroke-opacity="0.6" stroke-width="1.0" stroke-linejoin="round"/>
<polygon points="940.5,841.1 955.3,852.6 977.6,842.4 962.8,830.9" fill="#08377f" stroke="#000" stroke-opacity="0.6" stroke-width="1.0" stroke-linejoin="round"/>
<polygon points="1178.0,771.0 1192.9,778.5 1215.1,762.3 1200.3,754.8" fill="#006e82" stroke="#000" stroke-opacity="0.6" stroke-width="1.0" stroke-linejoin="round"/>
<polygon points="881.1,845.9 895.9,857.9 918.2,850.0 903.4,838.3" fill="#09347d" stroke="#000" stroke-opacity="0.6" stroke-width="1.0" stroke-linejoin="round"/>
<polygon points="1037.0,828.7 1051.8,839.7 1074.1,825.1 1059.3,814.3" fill="#054787" stroke="#000" stroke-opacity="0.6" stroke-width="1.0" stroke-linejoin="round"/>
<polygon points="1096.4,809.7 1111.2,819.7 1133.5,803.3 1118.6,794.1" fill="#01568b" stroke="#000" stroke-opacity="0.6" stroke-width="1.0" stroke-linejoin="round"/>
<polygon points="977.6,842.4 992.4,853.6 1014.7,841.9 999.9,830.8" fill="#073a80" stroke="#000" stroke-opacity="0.6" stroke-width="1.0" stroke-linejoin="round"/>
<polygon points="1155.8,787.1 1170.6,795.3 1192.9,778.5 1178.0,771.0" fill="#006486" stroke="#000" stroke-opacity="0.6" stroke-width="1.0" stroke-linejoin="round"/>
<polygon points="918.2,850.0 933.0,861.6 955.3,852.6 940.5,841.1" fill="#09347d" stroke="#000" stroke-opacity="0.6" stroke-width="1.0" stroke-linejoin="round"/>
<polygon points="1014.7,841.9 1029.5,853.1 1051.8,839.7 1037.0,828.7" fill="#063f83" stroke="#000" stroke-opacity="0.6" stroke-width="1.0" stroke-linejoin="round"/>
<polygon points="1074.1,825.1 1088.9,836.0 1111.2,819.7 1096.4,809.7" fill="#034d89" stroke="#000" stroke-opacity="0.6" stroke-width="1.0" stroke-linejoin="round"/>
<polygon points="858.8,852.8 873.6,865.2 895.9,857.9 881.1,845.9" fill="#09337c" stroke="#000" stroke-opacity="0.6" stroke-width="1.0" stroke-linejoin="round"/>
<polygon points="955.3,852.6 970.1,864.0 992.4,853.6 977.6,842.4" fill="#09357d" stroke="#000" stroke-opacity="0.6" stroke-width="1.0" stroke-linejoin="round"/>
<polygon points="1133.5,803.3 1148.3,812.1 1170.6,795.3 1155.8,787.1" fill="#005d89" stroke="#000" stroke-opacity="0.6" stroke-width="1.0" stroke-linejoin="round"/>
<polygon points="895.9,857.9 910.8,869.8 933.0,861.6 918.2,850.0" fill="#0a317b" stroke="#000" stroke-opacity="0.6" stroke-width="1.0" stroke-linejoin="round"/>
<polygon points="1051.8,839.7 1066.6,851.1 1088.9,836.0 1074.1,825.1" fill="#054586" stroke="#000" stroke-opacity="0.6" stroke-width="1.0" stroke-linejoin="round"/>
<polygon points="992.4,853.6 1007.2,865.0 1029.5,853.1 1014.7,841.9" fill="#08387f" stroke="#000" stroke-opacity="0.6" stroke-width="1.0" stroke-linejoin="round"/>
<polygon points="1111.2,819.7 1126.0,829.2 1148.3,812.1 1133.5,803.3" fill="#01558b" stroke="#000" stroke-opacity="0.6" stroke-width="1.0" stroke-linejoin="round"/>
<polygon points="933.0,861.6 947.9,873.2 970.1,864.0 955.3,852.6" fill="#0a317b" stroke="#000" stroke-opacity="0.6" stroke-width="1.0" stroke-linejoin="round"/>
<polygon points="1029.5,853.1 1044.4,864.4 1066.6,851.1 1051.8,839.7" fill="#073d82" stroke="#000" stroke-opacity="0.6" stroke-width="1.0" stroke-linejoin="round"/>
<polygon points="1088.9,836.0 1103.8,847.4 1126.0,829.2 1111.2,819.7" fill="#034c88" stroke="#000" stroke-opacity="0.6" stroke-width="1.0" stroke-linejoin="round"/>
<polygon points="873.6,865.2 888.5,877.4 910.8,869.8 895.9,857.9" fill="#0a307a" stroke="#000" stroke-opacity="0.6" stroke-width="1.0" stroke-linejoin="round"/>
<polygon points="970.1,864.0 985.0,875.5 1007.2,865.0 992.4,853.6" fill="#09337c" stroke="#000" stroke-opacity="0.6" stroke-width="1.0" stroke-linejoin="round"/>
<polygon points="910.8,869.8 925.6,881.6 947.9,873.2 933.0,861.6" fill="#0a2f7a" stroke="#000" stroke-opacity="0.6" stroke-width="1.0" stroke-linejoin="round"/>
<polygon points="1066.6,851.1 1081.5,862.8 1103.8,847.4 1088.9,836.0" fill="#054385" stroke="#000" stroke-opacity="0.6" stroke-width="1.0" stroke-linejoin="round"/>
<polygon points="1007.2,865.0 1022.1,876.5 1044.4,864.4 1029.5,853.1" fill="#08367e" stroke="#000" stroke-opacity="0.6" stroke-width="1.0" stroke-linejoin="round"/>
<polygon points="947.9,873.2 962.7,884.7 985.0,875.5 970.1,864.0" fill="#0a2f7a" stroke="#000" stroke-opacity="0.6" stroke-width="1.0" stroke-linejoin="round"/>
<polygon points="1044.4,864.4 1059.2,875.7 1081.5,862.8 1066.6,851.1" fill="#073b80" stroke="#000" stroke-opacity="0.6" stroke-width="1.0" stroke-linejoin="round"/>
<polygon points="888.5,877.4 903.3,889.6 925.6,881.6 910.8,869.8" fill="#0b2c79" stroke="#000" stroke-opacity="0.6" stroke-width="1.0" stroke-linejoin="round"/>
<polygon points="985.0,875.5 999.8,887.1 1022.1,876.5 1007.2,865.0" fill="#0a307b" stroke="#000" stroke-opacity="0.6" stroke-width="1.0" stroke-linejoin="round"/>
<polygon points="925.6,881.6 940.4,893.2 962.7,884.7 947.9,873.2" fill="#0b2c79" stroke="#000" stroke-opacity="0.6" stroke-width="1.0" stroke-linejoin="round"/>
<polygon points="1022.1,876.5 1036.9,888.1 1059.2,875.7 1044.4,864.4" fill="#09347d" stroke="#000" stroke-opacity="0.6" stroke-width="1.0" stroke-linejoin="round"/>
<polygon points="962.7,884.7 977.5,896.4 999.8,887.1 985.0,875.5" fill="#0b2c79" stroke="#000" stroke-opacity="0.6" stroke-width="1.0" stroke-linejoin="round"/>
<polygon points="903.3,889.6 918.1,901.2 940.4,893.2 925.6,881.6" fill="#0b2a77" stroke="#000" stroke-opacity="0.6" stroke-width="1.0" stroke-linejoin="round"/>
<polygon points="999.8,887.1 1014.6,899.0 1036.9,888.1 1022.1,876.5" fill="#0a2e79" stroke="#000" stroke-opacity="0.6" stroke-width="1.0" stroke-linejoin="round"/>
<polygon points="940.4,893.2 955.2,904.6 977.5,896.4 962.7,884.7" fill="#0b2a77" stroke="#000" stroke-opacity="0.6" stroke-width="1.0" stroke-linejoin="round"/>
<polygon points="977.5,896.4 992.4,908.2 1014.6,899.0 999.8,887.1" fill="#0b2a77" stroke="#000" stroke-opacity="0.6" stroke-width="1.0" stroke-linejoin="round"/>
<polygon points="918.1,901.2 933.0,912.5 955.2,904.6 940.4,893.2" fill="#0b2976" stroke="#000" stroke-opacity="0.6" stroke-width="1.0" stroke-linejoin="round"/>
<polygon points="955.2,904.6 970.1,915.8 992.4,908.2 977.5,896.4" fill="#0c2876" stroke="#000" stroke-opacity="0.6" stroke-width="1.0" stroke-linejoin="round"/>
<polygon points="933.0,912.5 947.8,923.3 970.1,915.8 955.2,904.6" fill="#0c2775" stroke="#000" stroke-opacity="0.6" stroke-width="1.0" stroke-linejoin="round"/>
<rect x="1889" y="165" width="14" height="810" fill="url(#cb)"/>
<g font-family="Liberation Mono" font-size="9" fill="#5c5c6c" text-anchor="end">
<text x="1884" y="169">9.7</text><text x="1884" y="573">5.1</text><text x="1884" y="979">0.4</text></g>
<g font-family="Liberation Mono" font-size="9" text-anchor="middle">
<text x="497.0" y="687.0" fill="#42a862">800</text>
<text x="541.3" y="714.8" fill="#42a862">1300</text>
<text x="585.7" y="742.6" fill="#42a862">1600</text>
<text x="630.0" y="770.3" fill="#42a862">2250</text>
<text x="674.3" y="798.1" fill="#42a862">3000</text>
<text x="718.7" y="825.9" fill="#42a862">3750</text>
<text x="763.0" y="853.7" fill="#42a862">4500</text>
<text x="807.3" y="881.4" fill="#42a862">6000</text>
<text x="851.7" y="909.2" fill="#42a862">7500</text>
<text x="896.0" y="937.0" fill="#42a862">9000</text>
<text x="965.0" y="950.0" fill="#4a6aa8">0</text>
<text x="1031.9" y="931.6" fill="#4a6aa8">0.8</text>
<text x="1098.8" y="913.1" fill="#4a6aa8">3</text>
<text x="1165.7" y="894.7" fill="#4a6aa8">5.9</text>
<text x="1232.6" y="876.2" fill="#4a6aa8">9.9</text>
<text x="1299.4" y="857.8" fill="#4a6aa8">17.3</text>
<text x="1366.3" y="839.3" fill="#4a6aa8">24.8</text>
<text x="1433.2" y="820.9" fill="#4a6aa8">39.5</text>
<text x="1500.1" y="802.4" fill="#4a6aa8">70.4</text>
<text x="1567.0" y="784.0" fill="#4a6aa8">72</text>
<text x="931.0" y="940.0" fill="#b0605a">0.4</text>
<text x="931.0" y="872.0" fill="#b0605a">2.3</text>
<text x="931.0" y="804.0" fill="#b0605a">4.2</text>
<text x="931.0" y="736.0" fill="#b0605a">6.0</text>
<text x="931.0" y="668.0" fill="#b0605a">7.9</text>
<text x="931.0" y="600.0" fill="#b0605a">9.7</text>
</g>
<text x="870" y="559" font-family="Liberation Sans" font-size="11" fill="#dc643c" text-anchor="middle">Z</text>
<text x="636" y="879" font-family="Liberation Sans" font-size="11" font-weight="bold" fill="#4ac46a" text-anchor="middle">รอบเครื่อง</text>
<text x="1311" y="926" font-family="Liberation Sans" font-size="11" fill="#5a8ae0" text-anchor="middle">ค่าคันเร่ง</text>
</svg>
<div id="status" class="abs">
  <div class="abs" style="left:12px;top:7px">K2J-T01-.bin (64.0 KB)</div>
  <div class="abs" style="left:126px;top:7px;color:#3a3a4a">|</div>
  <div class="abs" style="left:135px;top:7px">XDF: K2J-T01.xdf</div>
</div>
</body></html>
